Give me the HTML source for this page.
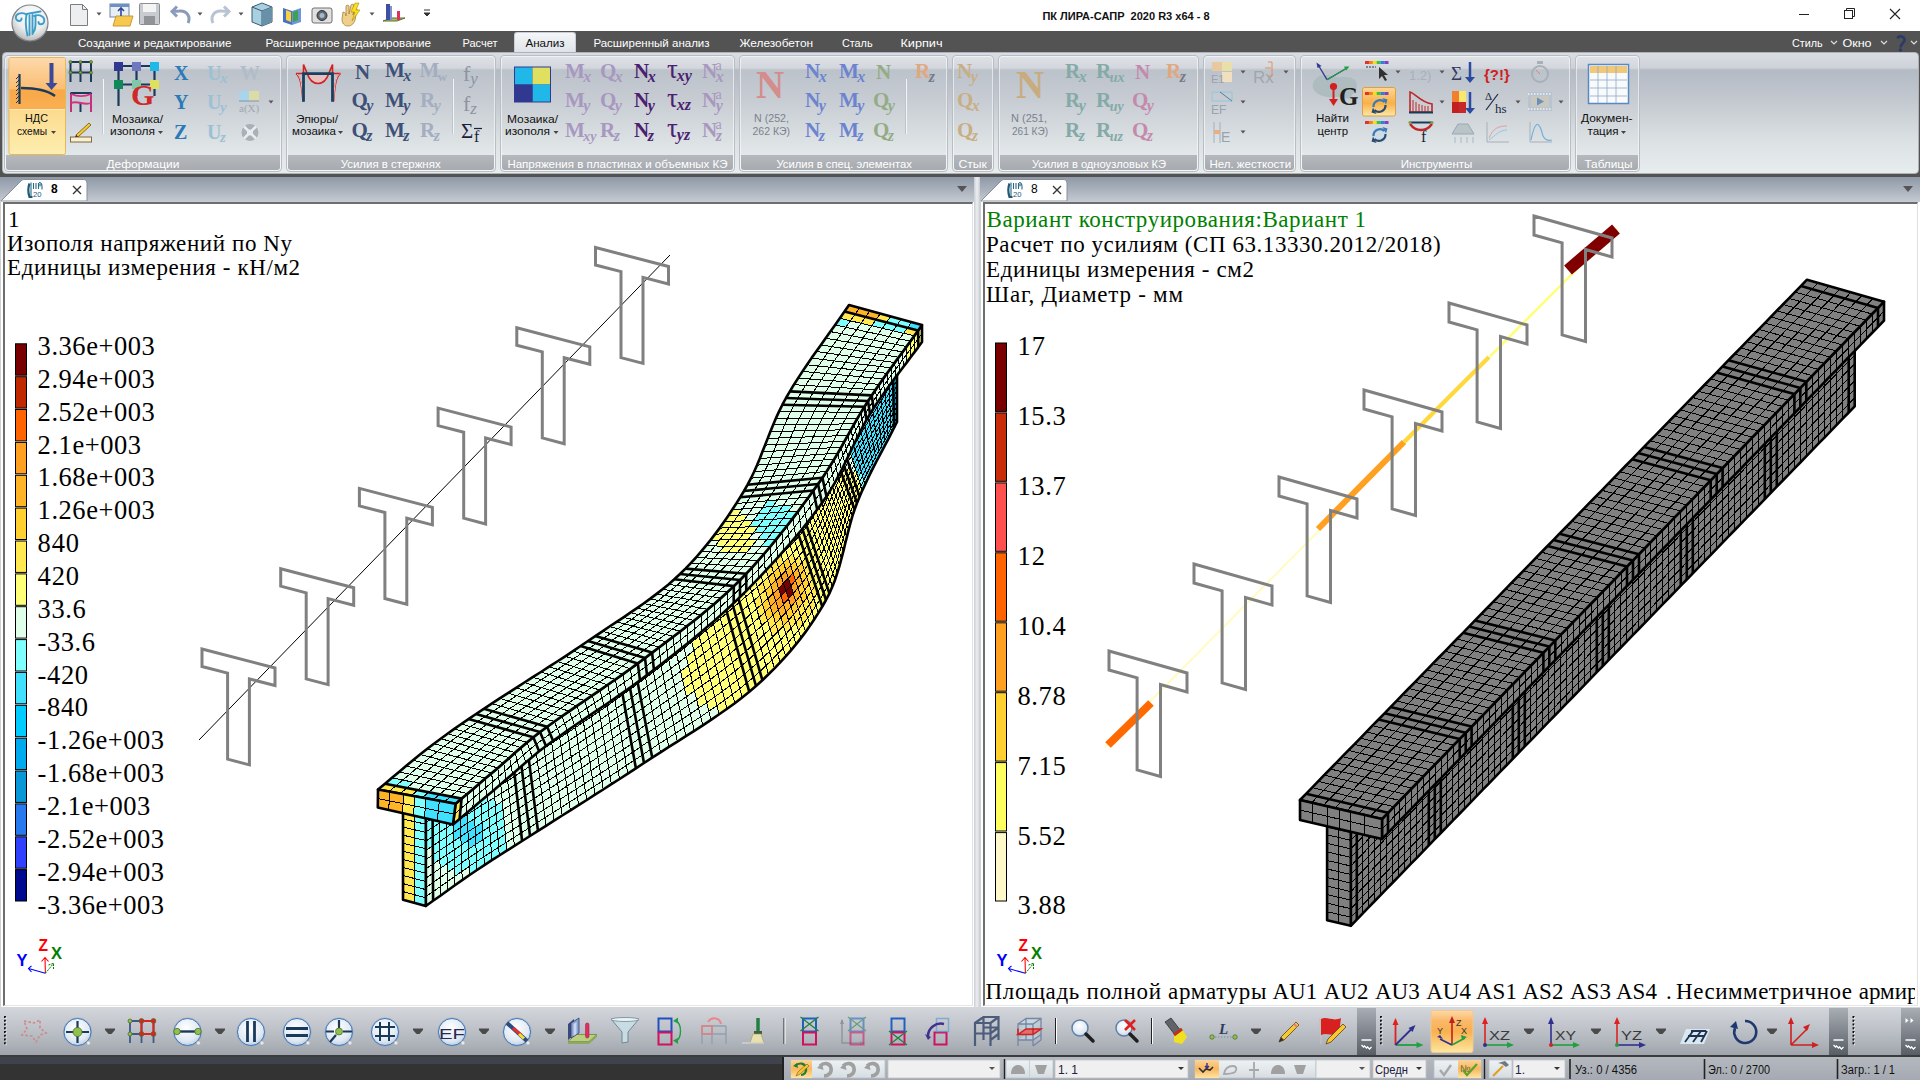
<!DOCTYPE html><html><head><meta charset="utf-8"><style>
*{margin:0;padding:0;box-sizing:border-box}
html,body{width:1920px;height:1080px;overflow:hidden;background:#fff;font-family:"Liberation Sans",sans-serif}
.a{position:absolute}
.tb{color:#fff;font-size:12px;white-space:nowrap;top:36px;letter-spacing:0.1px}
.grp{position:absolute;top:55px;height:117px;border:1px solid #b9bec5;border-radius:4px;background:linear-gradient(#dfe3e8 0,#d3d7dd 12px,#bcc2ca 14px,#c8cdd4 40%,#e2e7e9 85%,#e8eeee 100%);box-shadow:inset 0 0 0 1px rgba(255,255,255,.55)}
.glab{position:absolute;left:1px;right:1px;bottom:1px;height:15px;background:linear-gradient(#b5b9be,#a7abb0);color:#fff;font-size:11.5px;text-align:center;line-height:15px;white-space:nowrap;border-radius:0 0 3px 3px}
.rt{position:absolute;font-size:12px;color:#111;white-space:nowrap;text-align:center;line-height:13px}
.sv{font-family:"Liberation Serif",serif;font-weight:bold;position:absolute;white-space:nowrap;line-height:1}
.sv i{font-size:0.7em}
.vt{font-family:"Liberation Serif",serif;position:absolute;white-space:nowrap;color:#000}
.st{position:absolute;font-size:12.5px;color:#111;white-space:nowrap}
</style></head><body>
<div class="a" style="left:0;top:0;width:1920px;height:31px;background:#fff"></div>
<svg class="a" style="left:1790px;top:0" width="130" height="30"><path d="M9 14.5h10" stroke="#222" stroke-width="1"/><rect x="54.5" y="10.5" width="8" height="8" fill="none" stroke="#222"/><path d="M56.5 10.5v-2h8v8h-2" fill="none" stroke="#222"/><path d="M100 9l10 10M110 9l-10 10" stroke="#222" stroke-width="1.1"/></svg>
<div class="a" style="left:0;top:31px;width:1920px;height:22px;background:#535353"></div>
<div class="a" style="left:514px;top:32px;width:62px;height:22px;background:linear-gradient(#f4f6f8,#dde1e6);border:1px solid #c9ced4;border-bottom:none;border-radius:3px 3px 0 0"></div>
<div class="a" style="left:0;top:52px;width:1920px;height:125px;background:#535353"></div>
<div class="a" style="left:2px;top:52px;width:1917px;height:122px;border-radius:4px;background:linear-gradient(#dadee4 0,#cdd1d8 15px,#b3bac4 17px,#c4c9d0 40%,#dde2e5 75%,#e7eded 100%);border:1px solid #aeb3ba"></div>
<div class="grp" style="left:4px;width:278px"><div class="glab"></div></div>
<div class="grp" style="left:286px;width:210px"><div class="glab"></div></div>
<div class="grp" style="left:500px;width:235px"><div class="glab"></div></div>
<div class="grp" style="left:739px;width:209px"><div class="glab"></div></div>
<div class="grp" style="left:952px;width:42px"><div class="glab"></div></div>
<div class="grp" style="left:998px;width:201px"><div class="glab"></div></div>
<div class="grp" style="left:1203px;width:93px"><div class="glab"></div></div>
<div class="grp" style="left:1300px;width:271px"><div class="glab"></div></div>
<div class="grp" style="left:1575px;width:65px"><div class="glab"></div></div>
<svg class="a" style="left:0;top:0;pointer-events:none" width="1920" height="180">
<defs><radialGradient id="appb" cx="0.55" cy="0.3" r="0.75"><stop offset="0" stop-color="#ffffff"/><stop offset="0.55" stop-color="#eceef0"/><stop offset="0.85" stop-color="#c4c6c8"/><stop offset="1" stop-color="#a8acb0"/></radialGradient><linearGradient id="org1" x1="0" y1="0" x2="0" y2="1"><stop offset="0" stop-color="#fdd9aa"/><stop offset="0.6" stop-color="#fbbd74"/><stop offset="0.62" stop-color="#f8a848"/><stop offset="1" stop-color="#f9b052"/></linearGradient><linearGradient id="org3" x1="0" y1="0" x2="0" y2="1"><stop offset="0" stop-color="#fcd894"/><stop offset="0.45" stop-color="#f9b858"/><stop offset="0.55" stop-color="#f8b048"/><stop offset="1" stop-color="#fde8a8"/></linearGradient><linearGradient id="org2" x1="0" y1="0" x2="0" y2="1"><stop offset="0" stop-color="#fbc466"/><stop offset="1" stop-color="#fdeeb0"/></linearGradient></defs>
<circle cx="30" cy="23" r="18" fill="url(#appb)" stroke="#7e8286" stroke-width="1.2"/>
<g fill="none" stroke="#3d9dc6" stroke-width="1.9" stroke-linecap="round"><path d="M26.5 14.5C21 11.5 15 14 16 18.5 17 22 22 21.5 21.5 18.5"/><path d="M34 16C40 13.5 45.5 17 44 22 43 25 38.5 25 38.5 22"/><path d="M26.5 14L40.5 11.5"/><path d="M26.5 15C25 22 26 29 27.5 35.5"/><path d="M29.5 15.5V35M32.5 15V34M35.5 15.5V25c0 3-1 6-2.5 8"/></g>
<path d="M70.5 4.5h12l5 5v16h-17z" fill="#eceef0" stroke="#7a7e84"/><path d="M82.5 4.5v5h5" fill="none" stroke="#7a7e84"/>
<path d="M96.5 12.5h5l-2.5 3z" fill="#555"/>
<rect x="110" y="4" width="19" height="13" fill="#e8eef6" stroke="#6d86a8"/><rect x="110" y="4" width="19" height="3" fill="#7090c0"/><path d="M113 26l3-10h17l-3 10z" fill="#f7c850" stroke="#c89a30"/><path d="M121 16v-8m-3 3l3-3 3 3" stroke="#2a4a98" stroke-width="1.6" fill="none"/>
<rect x="139.5" y="3.5" width="20" height="21" rx="1" fill="#c8ccd0" stroke="#8a8e92"/><rect x="143" y="4" width="13" height="8" fill="#f4f4f4"/><rect x="144" y="16" width="11" height="8" fill="#909498"/>
<path d="M188 23c3-6-1-13-9-12l-6 .5m4-5-5 5 5 5" fill="none" stroke="#8a9cb8" stroke-width="3"/>
<path d="M197.5 12.5h5l-2.5 3z" fill="#555"/>
<path d="M213 23c-3-6 1-13 9-12l6 .5m-4-5 5 5-5 5" fill="none" stroke="#b8c4d4" stroke-width="3"/>
<path d="M238.5 12.5h5l-2.5 3z" fill="#555"/>
<path d="M252 7l10-4 10 4v15l-10 4-10-4z" fill="#a8d0e0" stroke="#3a5a70"/><path d="M252 7l10 4 10-4M262 11v15" fill="none" stroke="#3a5a70"/><path d="M262 11l10-4v15l-10 4z" fill="#6890a8"/>
<path d="M283 8l9 3v14l-9-3z" fill="#4a70c0"/><path d="M292 11l9-3v14l-9 3z" fill="#6a98d8"/><path d="M286 10l5 2v10l-5-2z" fill="#f8d040"/><path d="M293 12l5-2v10l-5 2z" fill="#40a050"/>
<rect x="312" y="8" width="20" height="15" rx="2" fill="#e0e0e0" stroke="#707070"/><circle cx="322" cy="15.5" r="5" fill="#606870" stroke="#303030"/><circle cx="322" cy="15.5" r="2.5" fill="#a0b8d0"/>
<path d="M343 12c2 0 3 2 3 4v-10c0-1 3-1 3 0v8l2-9c0-1 3-1 3 0l-1 10 2-6c1-1 3 0 2 1l-2 10c-1 3-3 6-7 6-4 0-6-3-6-7z" fill="#f0d088" stroke="#a08040" stroke-width="0.8"/><path d="M355 3l-4 9h4l-3 9 8-11h-4l3-7z" fill="#f8e020" stroke="#b09000" stroke-width="0.6"/>
<path d="M369.5 12.5h5l-2.5 3z" fill="#555"/>
<path d="M383 21l8-3h14l-8 3z" fill="#a0c060" stroke="#607030"/><rect x="386" y="4" width="4" height="16" fill="#4050a0"/><rect x="390" y="6" width="2" height="14" fill="#8090d0"/><rect x="397" y="11" width="3" height="9" fill="#e03060"/>
<path d="M424 10h6M424 13h6l-3 3z" fill="#333" stroke="#333" stroke-width="1"/>
<text x="1042.4" y="19.5" font-family="Liberation Sans" font-size="11.5" fill="#111" font-weight="bold" textLength="167.2" lengthAdjust="spacingAndGlyphs">ПК ЛИРА-САПР&#160; 2020 R3 x64 - 8</text>
<text x="77.9" y="46.9" font-family="Liberation Sans" font-size="11" fill="#fff" textLength="153.5" lengthAdjust="spacingAndGlyphs">Создание и редактирование</text>
<text x="265.4" y="46.9" font-family="Liberation Sans" font-size="11" fill="#fff" textLength="165.7" lengthAdjust="spacingAndGlyphs">Расширенное редактирование</text>
<text x="462.4" y="46.9" font-family="Liberation Sans" font-size="11" fill="#fff" textLength="35.2" lengthAdjust="spacingAndGlyphs">Расчет</text>
<text x="525.4" y="46.9" font-family="Liberation Sans" font-size="11" fill="#111" textLength="39.2" lengthAdjust="spacingAndGlyphs">Анализ</text>
<text x="593.4" y="46.9" font-family="Liberation Sans" font-size="11" fill="#fff" textLength="116.2" lengthAdjust="spacingAndGlyphs">Расширенный анализ</text>
<text x="739.4" y="46.9" font-family="Liberation Sans" font-size="11" fill="#fff" textLength="73.7" lengthAdjust="spacingAndGlyphs">Железобетон</text>
<text x="841.9" y="46.9" font-family="Liberation Sans" font-size="11" fill="#fff" textLength="30.7" lengthAdjust="spacingAndGlyphs">Сталь</text>
<text x="900.4" y="46.9" font-family="Liberation Sans" font-size="11" fill="#fff" textLength="42.2" lengthAdjust="spacingAndGlyphs">Кирпич</text>
<text x="1791.9" y="46.9" font-family="Liberation Sans" font-size="11" fill="#fff" textLength="30.7" lengthAdjust="spacingAndGlyphs">Стиль</text>
<text x="1842.4" y="46.9" font-family="Liberation Sans" font-size="11" fill="#fff" textLength="29.2" lengthAdjust="spacingAndGlyphs">Окно</text>
<text x="106.4" y="168" font-family="Liberation Sans" font-size="11" fill="#fff" textLength="73.0" lengthAdjust="spacingAndGlyphs">Деформации</text>
<text x="340.65" y="168" font-family="Liberation Sans" font-size="11" fill="#fff" textLength="100.0" lengthAdjust="spacingAndGlyphs">Усилия в стержнях</text>
<text x="507.4" y="168" font-family="Liberation Sans" font-size="11" fill="#fff" textLength="220.2" lengthAdjust="spacingAndGlyphs">Напряжения в пластинах и объемных КЭ</text>
<text x="776.4" y="168" font-family="Liberation Sans" font-size="11" fill="#fff" textLength="135.4" lengthAdjust="spacingAndGlyphs">Усилия в спец. элементах</text>
<text x="958.4" y="168" font-family="Liberation Sans" font-size="11" fill="#fff" textLength="28.4" lengthAdjust="spacingAndGlyphs">Стык</text>
<text x="1031.9" y="168" font-family="Liberation Sans" font-size="11" fill="#fff" textLength="134.2" lengthAdjust="spacingAndGlyphs">Усилия в одноузловых КЭ</text>
<text x="1209.4" y="168" font-family="Liberation Sans" font-size="11" fill="#fff" textLength="81.7" lengthAdjust="spacingAndGlyphs">Нел. жесткости</text>
<text x="1400.65" y="168" font-family="Liberation Sans" font-size="11" fill="#fff" textLength="71.7" lengthAdjust="spacingAndGlyphs">Инструменты</text>
<text x="1584.4" y="168" font-family="Liberation Sans" font-size="11" fill="#fff" textLength="48.2" lengthAdjust="spacingAndGlyphs">Таблицы</text>
<path d="M1831 41l3 3 3-3M1881 41l3 3 3-3M1911 41l3 3 3-3" fill="none" stroke="#ddd" stroke-width="1.2"/>
<path d="M1897.5 38.5c1-3 7-3 7 1.5 0 3-4 4-4 7.5" fill="none" stroke="#2a3a68" stroke-width="2.6"/><circle cx="1900.5" cy="50" r="1.7" fill="#2a3a68"/>
<rect x="9" y="57.5" width="56.5" height="97" rx="2" fill="url(#org2)" stroke="#e8b858"/>
<path d="M9.5 58h55.5v51.5h-55.5z" fill="url(#org1)"/>
<path d="M9.5 109.5h55.5" stroke="#fde8c0" stroke-width="1"/>
<path d="M19.5 74v30" stroke="#1e3a5a" stroke-width="2.2"/><path d="M19 76l-3 3M19 80l-3 3M19 84l-3 3M19 88l-3 3M19 92l-3 3M19 96l-3 3M19 100l-3 3" stroke="#1e3a5a" stroke-width="1"/>
<path d="M21 88c14 0 26 2 34 8" fill="none" stroke="#1e3a5a" stroke-width="2.4"/>
<path d="M51.5 63v20" stroke="#3a4a98" stroke-width="4"/><path d="M45.5 83h12l-6 7z" fill="#3a4a98"/>
<text x="25" y="122" font-family="Liberation Sans" font-size="11.5" fill="#111" textLength="23.0" lengthAdjust="spacingAndGlyphs" text-anchor="start">НДС</text>
<text x="17" y="135" font-family="Liberation Sans" font-size="11.5" fill="#111" textLength="30.0" lengthAdjust="spacingAndGlyphs" text-anchor="start">схемы</text>
<path d="M51.0 131.0h5l-2.5 3z" fill="#444"/>
<path d="M70.5 62v20M80.5 62v20M91 62v20M70.5 62h20.5M70.5 72.5h20.5" stroke="#1a3a5a" stroke-width="2"/>
<circle cx="70.5" cy="62" r="1.6" fill="#80a040" stroke="#305010" stroke-width="0.5"/><circle cx="70.5" cy="72.5" r="1.6" fill="#80a040" stroke="#305010" stroke-width="0.5"/><circle cx="80.5" cy="62" r="1.6" fill="#80a040" stroke="#305010" stroke-width="0.5"/><circle cx="80.5" cy="72.5" r="1.6" fill="#80a040" stroke="#305010" stroke-width="0.5"/><circle cx="91" cy="62" r="1.6" fill="#80a040" stroke="#305010" stroke-width="0.5"/><circle cx="91" cy="72.5" r="1.6" fill="#80a040" stroke="#305010" stroke-width="0.5"/>
<path d="M70.5 93h21M71 93v19M91 93v19M80.5 103v9" stroke="#1a3a5a" stroke-width="2"/><path d="M71 94c7 3 13 3 20 0M71 103c7-3 13 3 20 0M71 94v18M91 94v18" fill="none" stroke="#d83080" stroke-width="1.8"/>
<rect x="70.5" y="137" width="21" height="5" fill="#f8f0d0" stroke="#806840"/><path d="M76 135l13-12 2 2-13 12z" fill="#f8c830" stroke="#705010" stroke-width="0.8"/><path d="M76 135l-1 2 3-0.5z" fill="#402010"/>
<path d="M102.5 79v55" stroke="#c4c8cc" stroke-width="1"/><path d="M103.5 79v55" stroke="#f4f6f8" stroke-width="1"/>
<path d="M118.5 66v40M136.5 66v30M154.5 66v30M118.5 66h36M118.5 84.5h36" stroke="#1a3a5a" stroke-width="2.2"/>
<rect x="114" y="62" width="9" height="9" fill="#303890"/><rect x="132" y="62" width="9" height="9" fill="#7078c0"/><rect x="150" y="62" width="9" height="9" fill="#20b8e8"/><rect x="114" y="80" width="9" height="9" fill="#10885a"/><rect x="132" y="80" width="9" height="9" fill="#80c8a8"/><rect x="150" y="80" width="9" height="9" fill="#e0e060"/>
<text x="131" y="105" font-family="Liberation Serif" font-weight="bold" font-size="30" fill="#d02828">G</text>
<text x="112" y="123" font-family="Liberation Sans" font-size="11.5" fill="#111" textLength="51.0" lengthAdjust="spacingAndGlyphs" text-anchor="start">Мозаика/</text>
<text x="110" y="135" font-family="Liberation Sans" font-size="11.5" fill="#111" textLength="45.0" lengthAdjust="spacingAndGlyphs" text-anchor="start">изополя</text>
<path d="M158.0 131.0h5l-2.5 3z" fill="#444"/>
<text x="174" y="79.5" font-family="Liberation Serif" font-weight="bold" font-size="20" fill="#2a7ab8">X</text>
<text x="174" y="108.7" font-family="Liberation Serif" font-weight="bold" font-size="20" fill="#2a7ab8">Y</text>
<text x="174" y="138.7" font-family="Liberation Serif" font-weight="bold" font-size="20" fill="#2a7ab8">Z</text>
<text x="207" y="79.5" font-family="Liberation Serif" font-weight="bold" font-size="20" fill="#9cc0d4">U<tspan dx="-1.5" dy="3.5" font-size="15" font-style="italic">x</tspan></text>
<text x="207" y="108.7" font-family="Liberation Serif" font-weight="bold" font-size="20" fill="#9cc0d4">U<tspan dx="-1.5" dy="3.5" font-size="15" font-style="italic">y</tspan></text>
<text x="207" y="138.7" font-family="Liberation Serif" font-weight="bold" font-size="20" fill="#9cc0d4">U<tspan dx="-1.5" dy="3.5" font-size="15" font-style="italic">z</tspan></text>
<text x="240" y="79.5" font-family="Liberation Serif" font-weight="bold" font-size="20" fill="#b0bcc8">W</text>
<rect x="239" y="91" width="10" height="10" fill="#a8d4ec"/><rect x="249" y="91" width="10" height="10" fill="#dcdca8"/><path d="M239 101h20" stroke="#8098a8"/>
<text x="239" y="112" font-family="Liberation Serif" font-size="11" fill="#a0a8b0">a(X)</text>
<path d="M268.5 100.5h5l-2.5 3z" fill="#555"/>
<circle cx="250" cy="132.5" r="8.5" fill="#a8b0b8"/><path d="M244 126.5l12 12M256 126.5l-12 12" stroke="#e8ecef" stroke-width="2.5"/><circle cx="250" cy="132.5" r="3" fill="#e8ecef"/>
<path d="M307 73.5c3 9 7 10 11 10s8-1 11-10z" fill="#e8c0c0"/><path d="M296 73.5c5 3 6 15 7 28M340.5 73.5c-5 3-6 15-7 28M296 73.5h7M333 73.5h7.5M303.5 73V64.5L307 73c3 9 7 10.5 11 10.5s8-1.5 11-10.5l3.5-8.5V73" fill="none" stroke="#d02020" stroke-width="1.6"/><path d="M297 74c4 2 5 12 6 26M339.5 74c-4 2-5 12-6 26" fill="none" stroke="#f0c0c0" stroke-width="1"/>
<path d="M303.5 101.75V73.7h29v28.05" fill="none" stroke="#1a4060" stroke-width="2.8"/>
<text x="296" y="123" font-family="Liberation Sans" font-size="11.5" fill="#111" textLength="42.0" lengthAdjust="spacingAndGlyphs" text-anchor="start">Эпюры/</text>
<text x="292" y="135" font-family="Liberation Sans" font-size="11.5" fill="#111" textLength="44.0" lengthAdjust="spacingAndGlyphs" text-anchor="start">мозаика</text>
<path d="M338.0 131.0h5l-2.5 3z" fill="#444"/>
<text x="355" y="78.8" font-family="Liberation Serif" font-weight="bold" font-size="21" fill="#3d5078">N</text>
<text x="385" y="77" font-family="Liberation Serif" font-weight="bold" font-size="21" fill="#3d5078">M<tspan dx="-1.5" dy="3.5" font-size="16" font-style="italic">x</tspan></text>
<text x="419.5" y="77" font-family="Liberation Serif" font-weight="bold" font-size="21" fill="#a4aec0">M<tspan dx="-1.5" dy="3.5" font-size="13" font-style="normal">w</tspan></text>
<text x="351.5" y="107" font-family="Liberation Serif" font-weight="bold" font-size="21" fill="#3d5078">Q<tspan dx="-1.5" dy="3.5" font-size="16" font-style="italic">y</tspan></text>
<text x="385" y="107" font-family="Liberation Serif" font-weight="bold" font-size="21" fill="#3d5078">M<tspan dx="-1.5" dy="3.5" font-size="16" font-style="italic">y</tspan></text>
<text x="420" y="107" font-family="Liberation Serif" font-weight="bold" font-size="21" fill="#a4aec0">R<tspan dx="-1.5" dy="3.5" font-size="16" font-style="italic">y</tspan></text>
<text x="351.5" y="137" font-family="Liberation Serif" font-weight="bold" font-size="21" fill="#3d5078">Q<tspan dx="-1.5" dy="3.5" font-size="16" font-style="italic">z</tspan></text>
<text x="385" y="137" font-family="Liberation Serif" font-weight="bold" font-size="21" fill="#3d5078">M<tspan dx="-1.5" dy="3.5" font-size="16" font-style="italic">z</tspan></text>
<text x="420" y="137" font-family="Liberation Serif" font-weight="bold" font-size="21" fill="#a4aec0">R<tspan dx="-1.5" dy="3.5" font-size="16" font-style="italic">z</tspan></text>
<path d="M452.5 79v55" stroke="#c0c4c8"/><path d="M453.5 79v55" stroke="#f2f4f6"/>
<text x="463" y="80.5" font-family="Liberation Serif" font-weight="normal" font-size="22" fill="#8c94a2">f<tspan dx="0" dy="3.5" font-size="17" font-style="italic">y</tspan></text>
<text x="463" y="110.5" font-family="Liberation Serif" font-weight="normal" font-size="22" fill="#8c94a2">f<tspan dx="0" dy="3.5" font-size="17" font-style="italic">z</tspan></text>
<text x="461" y="138" font-family="Liberation Serif" font-size="21" fill="#1a1f38">Σ</text><text x="474" y="142" font-family="Liberation Serif" font-size="16" fill="#1a1f38">f</text><path d="M474 128.5h8" stroke="#1a1f38" stroke-width="1.2"/>
<rect x="514" y="66.5" width="37" height="36" fill="#303a90"/><rect x="515" y="67.5" width="17.5" height="17" fill="#20b8e8"/><rect x="532.5" y="67.5" width="17.5" height="17" fill="#e0e060"/><rect x="532.5" y="84.5" width="17.5" height="17" fill="#20b8e8"/><rect x="515" y="84.5" width="17.5" height="17" fill="#303890"/>
<text x="507" y="123" font-family="Liberation Sans" font-size="11.5" fill="#111" textLength="51.0" lengthAdjust="spacingAndGlyphs" text-anchor="start">Мозаика/</text>
<text x="505" y="135" font-family="Liberation Sans" font-size="11.5" fill="#111" textLength="45.0" lengthAdjust="spacingAndGlyphs" text-anchor="start">изополя</text>
<path d="M553.5 131.0h5l-2.5 3z" fill="#444"/>
<text x="565" y="78" font-family="Liberation Serif" font-weight="bold" font-size="21" fill="#a898c0">M<tspan dx="-1.5" dy="3.5" font-size="16" font-style="italic">x</tspan></text>
<text x="565" y="107" font-family="Liberation Serif" font-weight="bold" font-size="21" fill="#a898c0">M<tspan dx="-1.5" dy="3.5" font-size="16" font-style="italic">y</tspan></text>
<text x="565" y="137" font-family="Liberation Serif" font-weight="bold" font-size="21" fill="#a898c0">M<tspan dx="-1.5" dy="3.5" font-size="14" font-style="italic">xy</tspan></text>
<text x="600" y="78" font-family="Liberation Serif" font-weight="bold" font-size="21" fill="#a898c0">Q<tspan dx="-1.5" dy="3.5" font-size="16" font-style="italic">x</tspan></text>
<text x="600" y="107" font-family="Liberation Serif" font-weight="bold" font-size="21" fill="#a898c0">Q<tspan dx="-1.5" dy="3.5" font-size="16" font-style="italic">y</tspan></text>
<text x="600" y="137" font-family="Liberation Serif" font-weight="bold" font-size="21" fill="#a898c0">R<tspan dx="-1.5" dy="3.5" font-size="16" font-style="italic">z</tspan></text>
<text x="634" y="78" font-family="Liberation Serif" font-weight="bold" font-size="21" fill="#4a2070">N<tspan dx="-1.5" dy="3.5" font-size="16" font-style="italic">x</tspan></text>
<text x="634" y="107" font-family="Liberation Serif" font-weight="bold" font-size="21" fill="#4a2070">N<tspan dx="-1.5" dy="3.5" font-size="16" font-style="italic">y</tspan></text>
<text x="634" y="137" font-family="Liberation Serif" font-weight="bold" font-size="21" fill="#4a2070">N<tspan dx="-1.5" dy="3.5" font-size="16" font-style="italic">z</tspan></text>
<text x="667" y="78" font-family="Liberation Serif" font-size="27" fill="#4a2070">τ<tspan dx="-1" dy="3" font-size="16" font-weight="bold" font-style="italic">xy</tspan></text>
<text x="667" y="107" font-family="Liberation Serif" font-size="27" fill="#4a2070">τ<tspan dx="-1" dy="3" font-size="16" font-weight="bold" font-style="italic">xz</tspan></text>
<text x="667" y="137" font-family="Liberation Serif" font-size="27" fill="#4a2070">τ<tspan dx="-1" dy="3" font-size="16" font-weight="bold" font-style="italic">yz</tspan></text>
<text x="702" y="78" font-family="Liberation Serif" font-weight="bold" font-size="21" fill="#a898c0">N<tspan dx="-1.5" dy="3.5" font-size="16" font-style="italic">x</tspan></text>
<text x="715.5" y="70" font-family="Liberation Serif" font-size="14" fill="#a898c0">a</text>
<text x="702" y="107" font-family="Liberation Serif" font-weight="bold" font-size="21" fill="#a898c0">N<tspan dx="-1.5" dy="3.5" font-size="16" font-style="italic">y</tspan></text>
<text x="715.5" y="99" font-family="Liberation Serif" font-size="14" fill="#a898c0">a</text>
<text x="702" y="137" font-family="Liberation Serif" font-weight="bold" font-size="21" fill="#a898c0">N<tspan dx="-1.5" dy="3.5" font-size="16" font-style="italic">z</tspan></text>
<text x="715.5" y="129" font-family="Liberation Serif" font-size="14" fill="#a898c0">a</text>
<text x="756" y="97.5" font-family="Liberation Serif" font-weight="bold" font-size="39" fill="#d48c8c">N</text>
<text x="754" y="122" font-family="Liberation Sans" font-size="11.5" fill="#7a828c" textLength="35.0" lengthAdjust="spacingAndGlyphs" text-anchor="start">N (252,</text>
<text x="752.5" y="135" font-family="Liberation Sans" font-size="11.5" fill="#7a828c" textLength="37.5" lengthAdjust="spacingAndGlyphs" text-anchor="start">262 КЭ)</text>
<text x="805" y="78" font-family="Liberation Serif" font-weight="bold" font-size="21" fill="#6c84d0">N<tspan dx="-1.5" dy="3.5" font-size="16" font-style="italic">x</tspan></text>
<text x="805" y="107" font-family="Liberation Serif" font-weight="bold" font-size="21" fill="#6c84d0">N<tspan dx="-1.5" dy="3.5" font-size="16" font-style="italic">y</tspan></text>
<text x="805" y="137" font-family="Liberation Serif" font-weight="bold" font-size="21" fill="#6c84d0">N<tspan dx="-1.5" dy="3.5" font-size="16" font-style="italic">z</tspan></text>
<text x="839" y="78" font-family="Liberation Serif" font-weight="bold" font-size="21" fill="#6c84d0">M<tspan dx="-1.5" dy="3.5" font-size="16" font-style="italic">x</tspan></text>
<text x="839" y="107" font-family="Liberation Serif" font-weight="bold" font-size="21" fill="#6c84d0">M<tspan dx="-1.5" dy="3.5" font-size="16" font-style="italic">y</tspan></text>
<text x="839" y="137" font-family="Liberation Serif" font-weight="bold" font-size="21" fill="#6c84d0">M<tspan dx="-1.5" dy="3.5" font-size="16" font-style="italic">z</tspan></text>
<text x="876" y="78.5" font-family="Liberation Serif" font-weight="bold" font-size="21" fill="#94ac84">N</text>
<text x="873" y="107" font-family="Liberation Serif" font-weight="bold" font-size="21" fill="#94ac84">Q<tspan dx="-1.5" dy="3.5" font-size="16" font-style="italic">y</tspan></text>
<text x="873" y="137" font-family="Liberation Serif" font-weight="bold" font-size="21" fill="#94ac84">Q<tspan dx="-1.5" dy="3.5" font-size="16" font-style="italic">z</tspan></text>
<path d="M905.5 79v55" stroke="#c0c4c8"/><path d="M906.5 79v55" stroke="#f2f4f6"/>
<text x="915" y="78" font-family="Liberation Serif" font-weight="bold" font-size="21" fill="#e0a880">R<tspan dx="-1.5" dy="3.5" font-size="16" font-style="italic" fill="#747c8c">z</tspan></text>
<text x="957" y="78" font-family="Liberation Serif" font-weight="bold" font-size="21" fill="#c8ae84">N<tspan dx="-1.5" dy="3.5" font-size="16" font-style="italic">y</tspan></text>
<text x="957" y="107" font-family="Liberation Serif" font-weight="bold" font-size="21" fill="#c8ae84">Q<tspan dx="-1.5" dy="3.5" font-size="16" font-style="italic">x</tspan></text>
<text x="957" y="137" font-family="Liberation Serif" font-weight="bold" font-size="21" fill="#c8ae84">Q<tspan dx="-1.5" dy="3.5" font-size="16" font-style="italic">z</tspan></text>
<text x="1016" y="97.5" font-family="Liberation Serif" font-weight="bold" font-size="39" fill="#c8ac80">N</text>
<text x="1011" y="122" font-family="Liberation Sans" font-size="11.5" fill="#7a828c" textLength="36.0" lengthAdjust="spacingAndGlyphs" text-anchor="start">N (251,</text>
<text x="1012" y="135" font-family="Liberation Sans" font-size="11.5" fill="#7a828c" textLength="36.0" lengthAdjust="spacingAndGlyphs" text-anchor="start">261 КЭ)</text>
<text x="1065" y="78" font-family="Liberation Serif" font-weight="bold" font-size="21" fill="#84aaa8">R<tspan dx="-1.5" dy="3.5" font-size="16" font-style="italic">x</tspan></text>
<text x="1065" y="107" font-family="Liberation Serif" font-weight="bold" font-size="21" fill="#84aaa8">R<tspan dx="-1.5" dy="3.5" font-size="16" font-style="italic">y</tspan></text>
<text x="1065" y="137" font-family="Liberation Serif" font-weight="bold" font-size="21" fill="#84aaa8">R<tspan dx="-1.5" dy="3.5" font-size="16" font-style="italic">z</tspan></text>
<text x="1096" y="78" font-family="Liberation Serif" font-weight="bold" font-size="21" fill="#84aaa8">R<tspan dx="-1.5" dy="3.5" font-size="14" font-style="italic">ux</tspan></text>
<text x="1096" y="107" font-family="Liberation Serif" font-weight="bold" font-size="21" fill="#84aaa8">R<tspan dx="-1.5" dy="3.5" font-size="14" font-style="italic">uy</tspan></text>
<text x="1096" y="137" font-family="Liberation Serif" font-weight="bold" font-size="21" fill="#84aaa8">R<tspan dx="-1.5" dy="3.5" font-size="14" font-style="italic">uz</tspan></text>
<text x="1135" y="78.5" font-family="Liberation Serif" font-weight="bold" font-size="21" fill="#c48aac">N</text>
<text x="1132" y="107" font-family="Liberation Serif" font-weight="bold" font-size="21" fill="#c48aac">Q<tspan dx="-1.5" dy="3.5" font-size="16" font-style="italic">y</tspan></text>
<text x="1132" y="137" font-family="Liberation Serif" font-weight="bold" font-size="21" fill="#c48aac">Q<tspan dx="-1.5" dy="3.5" font-size="16" font-style="italic">z</tspan></text>
<text x="1166" y="78" font-family="Liberation Serif" font-weight="bold" font-size="21" fill="#e0a880">R<tspan dx="-1.5" dy="3.5" font-size="16" font-style="italic" fill="#747c8c">z</tspan></text>
<rect x="1212" y="62" width="10" height="9" fill="#e8c8a0"/><rect x="1222" y="62" width="10" height="9" fill="#e8e0a8"/><path d="M1222 72v10h10v-10" fill="#f0e0c0"/>
<text x="1211" y="83" font-family="Liberation Sans" font-size="11" fill="#9aa2ac">E1</text>
<path d="M1240.5 70.5h5l-2.5 3z" fill="#555"/>
<text x="1253" y="83" font-family="Liberation Sans" font-size="17" fill="#a0a6ae">Rx</text><path d="M1268 62h4v14h-4M1265 68h6" fill="none" stroke="#e09060" stroke-width="1"/>
<path d="M1283.5 70.5h5l-2.5 3z" fill="#555"/>
<path d="M1212 92h20v9h-20z" fill="none" stroke="#90c8d8" stroke-width="1"/><path d="M1220 92l12 9" stroke="#5080a8"/><text x="1211" y="114" font-family="Liberation Sans" font-size="12" fill="#9aa2ac">EF</text>
<path d="M1240.5 100.5h5l-2.5 3z" fill="#555"/>
<path d="M1214 122v21M1220 122v21" stroke="#a0b0c0"/><rect x="1214" y="130" width="6" height="4" fill="#e8b080"/><text x="1221" y="142" font-family="Liberation Sans" font-size="14" fill="#9aa2ac">E</text>
<path d="M1240.5 130.5h5l-2.5 3z" fill="#555"/>
<path d="M1313 88c-2-7 5-13 12-13 6 0 9 3 16 2 9-1 16 2 16 8 0 7-6 9-6 13-6 2-10-2-14-1-9 2-22-2-24-9z" fill="#aebcc0"/>
<path d="M1327 79.7L1318.5 65.5M1327 79.7L1347 68" fill="none" stroke="#303890" stroke-width="1.3"/><path d="M1327 79.7L1347 68" stroke="#20a040" stroke-width="1.3"/><path d="M1316.5 62.5l5 3.5-4 2z" fill="#303890"/><path d="M1349.5 66.5l-5.5 0 2 4z" fill="#20a040"/>
<circle cx="1333.5" cy="86.5" r="3.6" fill="#d02020"/><path d="M1333.5 87v14" stroke="#d02020" stroke-width="2"/><path d="M1329 99h9l-4.5 7z" fill="#d02020"/>
<text x="1339" y="104.5" font-family="Liberation Serif" font-weight="bold" font-size="25" fill="#202020">G</text>
<text x="1316" y="122" font-family="Liberation Sans" font-size="11.5" fill="#111" textLength="33.0" lengthAdjust="spacingAndGlyphs" text-anchor="start">Найти</text>
<text x="1317.5" y="135" font-family="Liberation Sans" font-size="11.5" fill="#111" textLength="30.5" lengthAdjust="spacingAndGlyphs" text-anchor="start">центр</text>
<rect x="1365.0" y="61" width="4" height="3" fill="#e03030"/><rect x="1368.9" y="61" width="4" height="3" fill="#f08020"/><rect x="1372.8" y="61" width="4" height="3" fill="#f0e020"/><rect x="1376.7" y="61" width="4" height="3" fill="#40c040"/><rect x="1380.6" y="61" width="4" height="3" fill="#3080e0"/><rect x="1384.5" y="61" width="4" height="3" fill="#8040c0"/>
<path d="M1379 67l0 12 3-3 3 5 2-1-3-5 4 0z" fill="#303030"/><path d="M1366 67h10" stroke="#303030" stroke-dasharray="2 1"/>
<path d="M1395.5 70.5h5l-2.5 3z" fill="#555"/>
<rect x="1362.5" y="87.5" width="33" height="28.5" rx="2" fill="url(#org3)" stroke="#d8a048"/>
<rect x="1365.0" y="92" width="4" height="3" fill="#e03030"/><rect x="1368.9" y="92" width="4" height="3" fill="#f08020"/><rect x="1372.8" y="92" width="4" height="3" fill="#f0e020"/><rect x="1376.7" y="92" width="4" height="3" fill="#40c040"/><rect x="1380.6" y="92" width="4" height="3" fill="#3080e0"/><rect x="1384.5" y="92" width="4" height="3" fill="#8040c0"/>
<path d="M1373.5 107a6.5 6.5 0 0 1 11-5" fill="none" stroke="#3a7ab8" stroke-width="2.2"/><path d="M1382.5 98l5 1.5-1.5 5z" fill="#3a7ab8"/>
<path d="M1385.5 105a6.5 6.5 0 0 1-11 5" fill="none" stroke="#2a4a70" stroke-width="2.2"/><path d="M1376.5 114l-5-1.5 1.5-5z" fill="#2a4a70"/>
<rect x="1365.0" y="121" width="4" height="3" fill="#e03030"/><rect x="1368.9" y="121" width="4" height="3" fill="#f08020"/><rect x="1372.8" y="121" width="4" height="3" fill="#f0e020"/><rect x="1376.7" y="121" width="4" height="3" fill="#40c040"/><rect x="1380.6" y="121" width="4" height="3" fill="#3080e0"/><rect x="1384.5" y="121" width="4" height="3" fill="#8040c0"/>
<circle cx="1379.5" cy="135" r="7.5" fill="#c8dce8" opacity="0.7"/>
<path d="M1373.5 136a6.5 6.5 0 0 1 11-5" fill="none" stroke="#3a7ab8" stroke-width="2.2"/><path d="M1382.5 127l5 1.5-1.5 5z" fill="#3a7ab8"/>
<path d="M1385.5 134a6.5 6.5 0 0 1-11 5" fill="none" stroke="#2a4a70" stroke-width="2.2"/><path d="M1376.5 143l-5-1.5 1.5-5z" fill="#2a4a70"/>
<text x="1409" y="80" font-family="Liberation Sans" font-size="13" fill="#a8b0bc">1.2)</text>
<path d="M1439.5 70.5h5l-2.5 3z" fill="#555"/>
<path d="M1410 92c6 2 10 10 22 12v8h-22z" fill="none" stroke="#c02828" stroke-width="1.6"/><path d="M1413 100v12M1416 102v10M1419 104v8M1422 105v7M1425 106v6M1428 106v6" stroke="#c02828"/><path d="M1409 112.5h24" stroke="#1a3a5a" stroke-width="2"/>
<path d="M1439.5 100.5h5l-2.5 3z" fill="#555"/>
<path d="M1410 122.5h22" stroke="#1a3a5a" stroke-width="2"/><path d="M1410 124c6 8 16 8 22 0" fill="none" stroke="#c02828" stroke-width="2.5"/><circle cx="1410" cy="122.5" r="1.6" fill="#80a040"/><circle cx="1432" cy="122.5" r="1.6" fill="#80a040"/><text x="1421" y="142" font-family="Liberation Serif" font-size="16" fill="#1a1f38">f</text>
<text x="1451" y="80" font-family="Liberation Serif" font-size="19" fill="#303a60">Σ</text><path d="M1470 62v17" stroke="#2a4aa0" stroke-width="2.5"/><path d="M1465 77h10l-5 6z" fill="#2a4aa0"/>
<text x="1484" y="80" font-family="Liberation Sans" font-weight="bold" font-size="15" fill="#d02020">{?!}</text>
<circle cx="1540" cy="74" r="8" fill="none" stroke="#a8b0b8" stroke-width="2"/><rect x="1537" y="61" width="6" height="3" fill="#a8b0b8"/><path d="M1536 70l4 4" stroke="#e08080" stroke-width="1"/>
<rect x="1452" y="91" width="7" height="11" fill="#f08030"/><rect x="1459" y="91" width="7" height="11" fill="#f8e870"/><rect x="1452" y="102" width="7" height="11" fill="#c02020"/><rect x="1459" y="102" width="7" height="11" fill="#c82828"/><path d="M1470 92v18" stroke="#2a4aa0" stroke-width="2.5"/><path d="M1465 108h10l-5 6z" fill="#2a4aa0"/>
<text x="1485" y="100" font-family="Liberation Serif" font-size="11" fill="#202840">Δ</text><path d="M1486 110l12-16" stroke="#202840" stroke-width="1.2"/><text x="1495" y="113" font-family="Liberation Serif" font-size="13" fill="#202840">hs</text>
<path d="M1515.5 100.5h5l-2.5 3z" fill="#555"/>
<rect x="1528" y="92" width="24" height="19" fill="#b8c4d0"/><path d="M1528 94h24M1528 109h24" stroke="#f0f4f8" stroke-dasharray="1.5 1.5" stroke-width="1.6"/><rect x="1531" y="96" width="18" height="11" fill="#c8c8c0"/><path d="M1537 97.5v8l7-4z" fill="#6890b8"/>
<path d="M1558.5 100.5h5l-2.5 3z" fill="#555"/>
<path d="M1452 134l6-10h10l6 10z" fill="#b8c4c8" stroke="#9aa8b0"/><path d="M1455 137v6M1461 137v6M1467 137v6M1473 137v6" stroke="#a8b8c8"/>
<path d="M1487 122v20h22" fill="none" stroke="#a8b0b8"/><path d="M1489 138c4-10 10-12 18-12" fill="none" stroke="#e0a0a0"/><path d="M1489 140c6-4 10-10 18-10" fill="none" stroke="#90c8e0"/>
<path d="M1530 122v20h22" fill="none" stroke="#a8b0b8"/><path d="M1531 140c4-20 8-20 12-4 2 4 5 5 9 4" fill="none" stroke="#70b0d8" stroke-width="1.2"/>
<rect x="1588.5" y="64.5" width="40" height="39" fill="#f8fafc" stroke="#5a88c0" stroke-width="1.5"/><rect x="1590" y="66" width="37" height="7" fill="#f0c878"/><path d="M1598 66v37M1607 66v37M1616 66v37M1590 80h37M1590 88h37M1590 96h37" stroke="#90a8c8" stroke-width="0.8"/>
<text x="1581" y="122" font-family="Liberation Sans" font-size="11.5" fill="#111" textLength="51.5" lengthAdjust="spacingAndGlyphs" text-anchor="start">Докумен-</text>
<text x="1587.5" y="135" font-family="Liberation Sans" font-size="11.5" fill="#111" textLength="31.0" lengthAdjust="spacingAndGlyphs" text-anchor="start">тация</text>
<path d="M1621.0 131.0h5l-2.5 3z" fill="#444"/>
</svg>
<div class="a" style="left:0px;top:177px;width:974px;height:25px;background:linear-gradient(#8f99a7,#a9b1bc 50%,#c6cbd2)"></div>
<svg class="a" style="left:0px;top:177px" width="100" height="26"><path d="M1 24 L22 3 Q23 2.5 25 2.5 L84 2.5 Q87 2.5 87 6 L87 24 Z" fill="#fff" stroke="#8a9099" stroke-width="1"/></svg>
<svg class="a" style="left:26px;top:180px" width="18" height="18"><path d="M3.5 3.5c-1.5 4-1.5 9 0 13.5h3" fill="none" stroke="#1e5a78" stroke-width="2.2"/><path d="M5 2.5v14M7.5 3v6M10 3v6M12.5 3v6" stroke="#2a6a88" stroke-width="1.1"/><path d="M13 2.5c2 0 3 2 3 4v3" fill="none" stroke="#2a6a88" stroke-width="1.1"/><circle cx="14" cy="5" r="1" fill="#fff" stroke="#2a6a88" stroke-width="0.8"/><text x="7" y="16.5" font-family="Liberation Sans" font-size="7.5" fill="#1e5a78" textLength="8.5" lengthAdjust="spacingAndGlyphs">20</text></svg>
<div class="a" style="left:51px;top:182px;font-size:12px;font-weight:bold;color:#000">8</div>
<svg class="a" style="left:71px;top:184px" width="12" height="12"><path d="M2 2l8 8M10 2l-8 8" stroke="#333" stroke-width="1.3"/></svg>
<svg class="a" style="left:956px;top:185px" width="12" height="8"><path d="M1 1h10l-5 6z" fill="#555"/></svg>
<div class="a" style="left:980px;top:177px;width:940px;height:25px;background:linear-gradient(#8f99a7,#a9b1bc 50%,#c6cbd2)"></div>
<svg class="a" style="left:980px;top:177px" width="100" height="26"><path d="M1 24 L22 3 Q23 2.5 25 2.5 L84 2.5 Q87 2.5 87 6 L87 24 Z" fill="#fff" stroke="#8a9099" stroke-width="1"/></svg>
<svg class="a" style="left:1006px;top:180px" width="18" height="18"><path d="M3.5 3.5c-1.5 4-1.5 9 0 13.5h3" fill="none" stroke="#1e5a78" stroke-width="2.2"/><path d="M5 2.5v14M7.5 3v6M10 3v6M12.5 3v6" stroke="#2a6a88" stroke-width="1.1"/><path d="M13 2.5c2 0 3 2 3 4v3" fill="none" stroke="#2a6a88" stroke-width="1.1"/><circle cx="14" cy="5" r="1" fill="#fff" stroke="#2a6a88" stroke-width="0.8"/><text x="7" y="16.5" font-family="Liberation Sans" font-size="7.5" fill="#1e5a78" textLength="8.5" lengthAdjust="spacingAndGlyphs">20</text></svg>
<div class="a" style="left:1031px;top:182px;font-size:12px;font-weight:normal;color:#000">8</div>
<svg class="a" style="left:1051px;top:184px" width="12" height="12"><path d="M2 2l8 8M10 2l-8 8" stroke="#333" stroke-width="1.3"/></svg>
<svg class="a" style="left:1902px;top:185px" width="12" height="8"><path d="M1 1h10l-5 6z" fill="#555"/></svg>
<div class="a" style="left:974px;top:177px;width:6px;height:831px;background:linear-gradient(90deg,#c9cdd3,#eceef0 50%,#c9cdd3)"></div>
<div class="a" style="left:0;top:201px;width:974px;height:806px;background:#fff;border-top:1px solid #c6cbd2;border-left:1px solid #d0d0d0"></div>
<div class="a" style="left:3px;top:202px;width:970px;height:804px;background:#fff;border-top:2px solid #6e6e6e;border-left:2px solid #6e6e6e;border-right:1px solid #e0e0e0;border-bottom:1px solid #e6e6e6"></div>
<div class="a" style="left:980px;top:201px;width:940px;height:806px;background:#fff;border-top:1px solid #c6cbd2;border-left:1px solid #d0d0d0"></div>
<div class="a" style="left:983px;top:202px;width:935px;height:804px;background:#fff;border-top:2px solid #6e6e6e;border-left:2px solid #6e6e6e;border-right:1px solid #e0e0e0;border-bottom:1px solid #e6e6e6"></div>
<svg class="a" style="left:0;top:0;pointer-events:none" width="1920" height="1080" viewBox="0 0 1920 1080">
<defs><clipPath id="cl"><rect x="5" y="204" width="968" height="802"/></clipPath><clipPath id="cr"><rect x="985" y="204" width="930" height="800"/></clipPath></defs>
<g clip-path="url(#cl)">
<g font-family="Liberation Serif" font-size="23" fill="#000">
<text x="8" y="227">1</text><text x="7" y="250.8" textLength="285.1" lengthAdjust="spacing">Изополя напряжений по Ny</text><text x="7" y="274.8" textLength="293.1" lengthAdjust="spacing">Единицы измерения - кН/м2</text>
</g>
<rect x="15.5" y="343.8" width="11" height="31.4" fill="#780000" stroke="#000" stroke-width="1"/>
<rect x="15.5" y="376.7" width="11" height="31.4" fill="#c02800" stroke="#000" stroke-width="1"/>
<rect x="15.5" y="409.5" width="11" height="31.4" fill="#ff6400" stroke="#000" stroke-width="1"/>
<rect x="15.5" y="442.4" width="11" height="31.4" fill="#ffa020" stroke="#000" stroke-width="1"/>
<rect x="15.5" y="475.3" width="11" height="31.4" fill="#ffb428" stroke="#000" stroke-width="1"/>
<rect x="15.5" y="508.1" width="11" height="31.4" fill="#ffd030" stroke="#000" stroke-width="1"/>
<rect x="15.5" y="541" width="11" height="31.4" fill="#ffe850" stroke="#000" stroke-width="1"/>
<rect x="15.5" y="573.9" width="11" height="31.4" fill="#ffff78" stroke="#000" stroke-width="1"/>
<rect x="15.5" y="606.7" width="11" height="31.4" fill="#e0ffe8" stroke="#000" stroke-width="1"/>
<rect x="15.5" y="639.6" width="11" height="31.4" fill="#80ffff" stroke="#000" stroke-width="1"/>
<rect x="15.5" y="672.4" width="11" height="31.4" fill="#40e0ff" stroke="#000" stroke-width="1"/>
<rect x="15.5" y="705.3" width="11" height="31.4" fill="#00ccff" stroke="#000" stroke-width="1"/>
<rect x="15.5" y="738.2" width="11" height="31.4" fill="#00aaee" stroke="#000" stroke-width="1"/>
<rect x="15.5" y="771" width="11" height="31.4" fill="#0898d8" stroke="#000" stroke-width="1"/>
<rect x="15.5" y="803.9" width="11" height="31.4" fill="#2878f0" stroke="#000" stroke-width="1"/>
<rect x="15.5" y="836.8" width="11" height="31.4" fill="#3040ff" stroke="#000" stroke-width="1"/>
<rect x="15.5" y="869.6" width="11" height="31.4" fill="#000a90" stroke="#000" stroke-width="1"/>
<g font-family="Liberation Serif" font-size="26.5" fill="#000">
<text x="37.6" y="354.9" textLength="117.2" lengthAdjust="spacing">3.36e+003</text>
<text x="37.6" y="387.8" textLength="117.2" lengthAdjust="spacing">2.94e+003</text>
<text x="37.6" y="420.6" textLength="117.2" lengthAdjust="spacing">2.52e+003</text>
<text x="37.6" y="453.5" textLength="103.5" lengthAdjust="spacing">2.1e+003</text>
<text x="37.6" y="486.4" textLength="117.2" lengthAdjust="spacing">1.68e+003</text>
<text x="37.6" y="519.2" textLength="117.2" lengthAdjust="spacing">1.26e+003</text>
<text x="37.6" y="552.1" textLength="41.3" lengthAdjust="spacing">840</text>
<text x="37.6" y="585" textLength="41.3" lengthAdjust="spacing">420</text>
<text x="37.6" y="617.8" textLength="48.2" lengthAdjust="spacing">33.6</text>
<text x="37.6" y="650.7" textLength="57.4" lengthAdjust="spacing">-33.6</text>
<text x="37.6" y="683.5" textLength="50.5" lengthAdjust="spacing">-420</text>
<text x="37.6" y="716.4" textLength="50.5" lengthAdjust="spacing">-840</text>
<text x="37.6" y="749.3" textLength="126.4" lengthAdjust="spacing">-1.26e+003</text>
<text x="37.6" y="782.1" textLength="126.4" lengthAdjust="spacing">-1.68e+003</text>
<text x="37.6" y="815" textLength="112.6" lengthAdjust="spacing">-2.1e+003</text>
<text x="37.6" y="847.9" textLength="126.4" lengthAdjust="spacing">-2.52e+003</text>
<text x="37.6" y="880.7" textLength="126.4" lengthAdjust="spacing">-2.94e+003</text>
<text x="37.6" y="913.6" textLength="126.4" lengthAdjust="spacing">-3.36e+003</text>
</g>
<path d="M199 740 L670 255" stroke="#000" stroke-width="1" fill="none"/>
<path d="M202 649 L275 668 L275 685.5 L249.4 678.9 L249.4 764.9 L227.6 759.1 L227.6 673.1 L202 666.5ZM280.7 568.7 L353.7 587.7 L353.7 605.2 L328.1 598.6 L328.1 684.6 L306.2 678.9 L306.2 592.9 L280.7 586.2ZM359.4 488.4 L432.4 507.4 L432.4 524.9 L406.8 518.2 L406.8 604.2 L384.9 598.5 L384.9 512.5 L359.4 505.9ZM438.1 408.1 L511.1 427.1 L511.1 444.6 L485.6 438 L485.6 524 L463.7 518.2 L463.7 432.2 L438.1 425.6ZM516.8 327.8 L589.8 346.8 L589.8 364.3 L564.2 357.7 L564.2 443.7 L542.3 437.9 L542.3 351.9 L516.8 345.3ZM595.5 247.5 L668.5 266.5 L668.5 284 L643 277.4 L643 363.4 L621 357.6 L621 271.6 L595.5 265Z" fill="none" stroke="#808080" stroke-width="3" stroke-linejoin="miter"/><path d="M425.8,804 L432.5,800 L439.2,796 L445.9,791.9 L452.6,787.9 L459.3,783.9 L466,779.8 L472.7,775.8 L479.3,771.8 L485.7,768 L492.1,764.2 L498.6,760.3 L505.2,756.2 L512,751.9 L519.2,747.2 L526.6,742.3 L534.2,737.3 L541.8,732.2 L549.5,727.1 L557.3,721.9 L565.1,716.7 L573,711.4 L580.9,706 L588.7,700.6 L596.5,695.2 L604.3,689.7 L612,684.2 L619.7,678.6 L627.2,673 L634.7,667.3 L642.3,661.5 L649.9,655.5 L657.4,649.4 L665,643.3 L672.6,637.1 L680,631 L687.4,624.8 L694.7,618.7 L701.8,612.7 L708.7,606.8 L715.5,601 L722.1,595.4 L728.4,590 L734.5,584.8 L740.5,579.7 L746.4,574.9 L752.1,570.1 L757.7,565.4 L763.2,560.9 L768.5,556.3 L773.6,551.9 L778.6,547.4 L783.4,542.9 L788,538.4 L792.4,533.8 L796.7,529.2 L800.8,524.4 L804.6,519.6 L808,514.9 L811.1,510.2 L814,505.5 L816.6,500.8 L819.1,496 L821.5,491.3 L823.8,486.4 L826.2,481.5 L828.6,476.5 L831.2,471.3 L833.9,466.1 L836.9,460.6 L840.2,455 L843.7,449.2 L847.4,443.2 L851.2,437 L855.2,430.7 L859.2,424.2 L863.3,417.7 L867.5,411 L871.7,404.3 L876,397.6 L880.3,390.9 L884.5,384.2 L888.7,377.5 L892.9,370.9 L897,364.4 L897,422 L894.1,427.7 L891.2,433.4 L888.3,439.1 L885.3,444.7 L882.3,450.3 L879.4,455.9 L876.4,461.5 L873.5,467.2 L870.6,472.9 L867.8,478.7 L865,484.6 L862.2,490.6 L859.6,496.7 L857,503 L854.6,509.5 L852.4,516.1 L850.5,522.9 L848.6,529.9 L846.9,536.9 L845.1,544 L843.4,551.2 L841.5,558.4 L839.6,565.5 L837.4,572.6 L835.1,579.7 L832.4,586.6 L829.4,593.4 L826,600 L822.3,606.5 L818.4,612.9 L814.3,619.3 L810.1,625.6 L805.6,631.9 L800.9,638.1 L796.1,644.2 L791,650.3 L785.7,656.4 L780.2,662.4 L774.5,668.4 L768.5,674.3 L762.4,680.2 L756,686 L749.3,691.8 L742.2,697.5 L734.8,703.2 L727.1,708.8 L719.2,714.3 L711,719.8 L702.8,725.3 L694.3,730.8 L685.9,736.2 L677.4,741.6 L668.9,746.9 L660.5,752.3 L652.2,757.6 L644,763 L635.9,768.3 L627.8,773.7 L619.6,779 L611.4,784.2 L603.2,789.5 L595,794.7 L586.8,800 L578.6,805.2 L570.4,810.3 L562.2,815.5 L554.1,820.6 L546,825.8 L538,830.9 L530,836 L522.1,841 L514.4,845.9 L506.8,850.7 L499.3,855.5 L491.9,860.2 L484.4,865.1 L477,870 L469.6,875 L462.2,880.1 L454.9,885.3 L447.6,890.5 L440.4,895.7 L433.1,900.8 L425.8,906Z" fill="#e0ffe8"/>
<path d="M425.8,822.5 L432.6,818.3 L432.7,827.5 L425.8,831.8ZM425.8,831.8 L432.7,827.5 L432.7,836.7 L425.8,841.1ZM425.8,841.1 L432.7,836.7 L432.8,845.8 L425.8,850.4ZM432.6,809.1 L439.3,805 L439.4,814.1 L432.6,818.3ZM432.6,818.3 L439.4,814.1 L439.5,823.1 L432.7,827.5ZM432.7,827.5 L439.5,823.1 L439.6,832.2 L432.7,836.7ZM432.7,836.7 L439.6,832.2 L439.7,841.3 L432.8,845.8ZM432.8,845.8 L439.7,841.3 L439.8,850.3 L432.8,855ZM432.8,855 L439.8,850.3 L440,859.4 L432.9,864.2ZM439.3,805 L446.1,800.9 L446.2,809.9 L439.4,814.1ZM439.4,814.1 L446.2,809.9 L446.4,818.8 L439.5,823.1ZM439.5,823.1 L446.4,818.8 L446.5,827.8 L439.6,832.2ZM439.6,832.2 L446.5,827.8 L446.7,836.7 L439.7,841.3ZM439.7,841.3 L446.7,836.7 L446.9,845.7 L439.8,850.3ZM439.8,850.3 L446.9,845.7 L447,854.6 L440,859.4ZM440,859.4 L447,854.6 L447.2,863.6 L440.1,868.5ZM446.1,800.9 L452.8,796.8 L453,805.6 L446.2,809.9ZM446.2,809.9 L453,805.6 L453.2,814.5 L446.4,818.8ZM446.4,818.8 L453.2,814.5 L453.5,823.3 L446.5,827.8ZM446.5,827.8 L453.5,823.3 L453.7,832.2 L446.7,836.7ZM446.7,836.7 L453.7,832.2 L453.9,841 L446.9,845.7ZM446.9,845.7 L453.9,841 L454.1,849.9 L447,854.6ZM447,854.6 L454.1,849.9 L454.3,858.7 L447.2,863.6ZM447.2,863.6 L454.3,858.7 L454.5,867.6 L447.3,872.6ZM452.8,796.8 L459.6,792.6 L459.8,801.4 L453,805.6ZM453,805.6 L459.8,801.4 L460.1,810.1 L453.2,814.5ZM453.2,814.5 L460.1,810.1 L460.4,818.9 L453.5,823.3ZM453.9,841 L460.9,836.4 L461.2,845.1 L454.1,849.9ZM454.1,849.9 L461.2,845.1 L461.4,853.9 L454.3,858.7ZM454.3,858.7 L461.4,853.9 L461.7,862.6 L454.5,867.6ZM454.5,867.6 L461.7,862.6 L462,871.4 L454.7,876.4ZM459.6,792.6 L466.3,788.5 L466.7,797.2 L459.8,801.4ZM459.8,801.4 L466.7,797.2 L467,805.8 L460.1,810.1ZM460.1,810.1 L467,805.8 L467.3,814.5 L460.4,818.9ZM461.2,845.1 L468.3,840.4 L468.6,849.1 L461.4,853.9ZM461.4,853.9 L468.6,849.1 L468.9,857.7 L461.7,862.6ZM461.7,862.6 L468.9,857.7 L469.3,866.4 L462,871.4ZM466.7,797.2 L473.5,792.9 L473.9,801.5 L467,805.8ZM467,805.8 L473.9,801.5 L474.3,810.1 L467.3,814.5ZM467.3,814.5 L474.3,810.1 L474.6,818.6 L467.6,823.1ZM468.6,849.1 L475.8,844.3 L476.2,852.9 L468.9,857.7ZM468.9,857.7 L476.2,852.9 L476.6,861.4 L469.3,866.4ZM469.3,866.4 L476.6,861.4 L477,870 L469.6,875ZM473.5,792.9 L480.2,788.8 L480.7,797.3 L473.9,801.5ZM473.9,801.5 L480.7,797.3 L481.1,805.7 L474.3,810.1ZM474.3,810.1 L481.1,805.7 L481.6,814.2 L474.6,818.6ZM474.6,818.6 L481.6,814.2 L482.1,822.7 L475,827.2ZM475.8,844.3 L483,839.6 L483.5,848.1 L476.2,852.9ZM476.2,852.9 L483.5,848.1 L484,856.6 L476.6,861.4ZM476.6,861.4 L484,856.6 L484.4,865.1 L477,870ZM480.7,797.3 L487.4,793.1 L487.9,801.5 L481.1,805.7ZM481.1,805.7 L487.9,801.5 L488.5,809.9 L481.6,814.2ZM481.6,814.2 L488.5,809.9 L489.1,818.3 L482.1,822.7ZM482.1,822.7 L489.1,818.3 L489.6,826.7 L482.5,831.2ZM482.5,831.2 L489.6,826.7 L490.2,835.1 L483,839.6ZM483,839.6 L490.2,835.1 L490.7,843.5 L483.5,848.1ZM483.5,848.1 L490.7,843.5 L491.3,851.9 L484,856.6ZM484,856.6 L491.3,851.9 L491.9,860.2 L484.4,865.1ZM487.9,801.5 L494.7,797.4 L495.4,805.7 L488.5,809.9ZM488.5,809.9 L495.4,805.7 L496,814 L489.1,818.3ZM489.1,818.3 L496,814 L496.7,822.3 L489.6,826.7ZM489.6,826.7 L496.7,822.3 L497.3,830.6 L490.2,835.1ZM490.2,835.1 L497.3,830.6 L498,838.9 L490.7,843.5ZM490.7,843.5 L498,838.9 L498.7,847.2 L491.3,851.9ZM491.3,851.9 L498.7,847.2 L499.3,855.5 L491.9,860.2ZM495.4,805.7 L502.3,801.4 L503.1,809.6 L496,814ZM496,814 L503.1,809.6 L503.8,817.8 L496.7,822.3ZM496.7,822.3 L503.8,817.8 L504.6,826 L497.3,830.6ZM497.3,830.6 L504.6,826 L505.3,834.3 L498,838.9ZM498,838.9 L505.3,834.3 L506.1,842.5 L498.7,847.2ZM498.7,847.2 L506.1,842.5 L506.8,850.7 L499.3,855.5ZM858.2,477.7 L861.2,471.6 L862.5,475.9 L859.5,482ZM859.5,482 L862.5,475.9 L863.7,480.3 L860.9,486.3ZM860.9,486.3 L863.7,480.3 L865,484.6 L862.2,490.6ZM863.7,480.3 L866.6,474.3 L867.8,478.7 L865,484.6Z" fill="#80ffff"/>
<path d="M453.5,823.3 L460.4,818.9 L460.6,827.6 L453.7,832.2ZM453.7,832.2 L460.6,827.6 L460.9,836.4 L453.9,841ZM460.4,818.9 L467.3,814.5 L467.6,823.1 L460.6,827.6ZM460.6,827.6 L467.6,823.1 L468,831.8 L460.9,836.4ZM460.9,836.4 L468,831.8 L468.3,840.4 L461.2,845.1ZM467.6,823.1 L474.6,818.6 L475,827.2 L468,831.8ZM468,831.8 L475,827.2 L475.4,835.7 L468.3,840.4ZM468.3,840.4 L475.4,835.7 L475.8,844.3 L468.6,849.1ZM475,827.2 L482.1,822.7 L482.5,831.2 L475.4,835.7ZM475.4,835.7 L482.5,831.2 L483,839.6 L475.8,844.3ZM847.4,443.2 L851.2,437 L852.5,441.3 L848.8,447.5ZM848.8,447.5 L852.5,441.3 L853.7,445.6 L850.1,451.8ZM850.1,451.8 L853.7,445.6 L855,450 L851.4,456.1ZM851.4,456.1 L855,450 L856.2,454.3 L852.8,460.4ZM852.8,460.4 L856.2,454.3 L857.5,458.6 L854.1,464.7ZM854.1,464.7 L857.5,458.6 L858.7,462.9 L855.5,469ZM855.5,469 L858.7,462.9 L860,467.3 L856.8,473.3ZM856.8,473.3 L860,467.3 L861.2,471.6 L858.2,477.7ZM851.2,437 L855.2,430.7 L856.3,435 L852.5,441.3ZM852.5,441.3 L856.3,435 L857.5,439.4 L853.7,445.6ZM853.7,445.6 L857.5,439.4 L858.6,443.8 L855,450ZM855,450 L858.6,443.8 L859.7,448.1 L856.2,454.3ZM856.2,454.3 L859.7,448.1 L860.9,452.5 L857.5,458.6ZM857.5,458.6 L860.9,452.5 L862,456.9 L858.7,462.9ZM858.7,462.9 L862,456.9 L863.2,461.2 L860,467.3ZM860,467.3 L863.2,461.2 L864.3,465.6 L861.2,471.6ZM861.2,471.6 L864.3,465.6 L865.5,470 L862.5,475.9ZM862.5,475.9 L865.5,470 L866.6,474.3 L863.7,480.3ZM855.2,430.7 L859.2,424.2 L860.2,428.6 L856.3,435ZM856.3,435 L860.2,428.6 L861.3,433.1 L857.5,439.4ZM857.5,439.4 L861.3,433.1 L862.3,437.5 L858.6,443.8ZM858.6,443.8 L862.3,437.5 L863.4,441.9 L859.7,448.1ZM859.7,448.1 L863.4,441.9 L864.4,446.3 L860.9,452.5ZM860.9,452.5 L864.4,446.3 L865.4,450.8 L862,456.9ZM862,456.9 L865.4,450.8 L866.5,455.2 L863.2,461.2ZM863.2,461.2 L866.5,455.2 L867.5,459.6 L864.3,465.6ZM864.3,465.6 L867.5,459.6 L868.5,464 L865.5,470ZM865.5,470 L868.5,464 L869.6,468.5 L866.6,474.3ZM866.6,474.3 L869.6,468.5 L870.6,472.9 L867.8,478.7ZM859.2,424.2 L863.3,417.7 L864.3,422.2 L860.2,428.6ZM860.2,428.6 L864.3,422.2 L865.2,426.7 L861.3,433.1ZM861.3,433.1 L865.2,426.7 L866.1,431.2 L862.3,437.5ZM862.3,437.5 L866.1,431.2 L867,435.7 L863.4,441.9ZM863.4,441.9 L867,435.7 L868,440.2 L864.4,446.3ZM864.4,446.3 L868,440.2 L868.9,444.7 L865.4,450.8ZM865.4,450.8 L868.9,444.7 L869.8,449.2 L866.5,455.2ZM866.5,455.2 L869.8,449.2 L870.7,453.7 L867.5,459.6ZM867.5,459.6 L870.7,453.7 L871.7,458.2 L868.5,464ZM868.5,464 L871.7,458.2 L872.6,462.7 L869.6,468.5ZM869.6,468.5 L872.6,462.7 L873.5,467.2 L870.6,472.9ZM863.3,417.7 L867.5,411 L868.3,415.6 L864.3,422.2ZM864.3,422.2 L868.3,415.6 L869.1,420.2 L865.2,426.7ZM865.2,426.7 L869.1,420.2 L869.9,424.8 L866.1,431.2ZM866.1,431.2 L869.9,424.8 L870.8,429.4 L867,435.7ZM867,435.7 L870.8,429.4 L871.6,434 L868,440.2ZM868,440.2 L871.6,434 L872.4,438.6 L868.9,444.7ZM868.9,444.7 L872.4,438.6 L873.2,443.1 L869.8,449.2ZM869.8,449.2 L873.2,443.1 L874,447.7 L870.7,453.7ZM870.7,453.7 L874,447.7 L874.8,452.3 L871.7,458.2ZM871.7,458.2 L874.8,452.3 L875.6,456.9 L872.6,462.7ZM872.6,462.7 L875.6,456.9 L876.4,461.5 L873.5,467.2ZM867.5,411 L871.7,404.3 L872.4,409 L868.3,415.6ZM868.3,415.6 L872.4,409 L873.1,413.7 L869.1,420.2ZM869.1,420.2 L873.1,413.7 L873.8,418.4 L869.9,424.8ZM869.9,424.8 L873.8,418.4 L874.5,423.1 L870.8,429.4ZM870.8,429.4 L874.5,423.1 L875.2,427.8 L871.6,434ZM871.6,434 L875.2,427.8 L875.9,432.5 L872.4,438.6ZM872.4,438.6 L875.9,432.5 L876.6,437.1 L873.2,443.1ZM873.2,443.1 L876.6,437.1 L877.3,441.8 L874,447.7ZM874,447.7 L877.3,441.8 L878,446.5 L874.8,452.3ZM874.8,452.3 L878,446.5 L878.7,451.2 L875.6,456.9ZM875.6,456.9 L878.7,451.2 L879.4,455.9 L876.4,461.5ZM871.7,404.3 L876,397.6 L876.6,402.4 L872.4,409ZM872.4,409 L876.6,402.4 L877.2,407.2 L873.1,413.7ZM873.1,413.7 L877.2,407.2 L877.7,412 L873.8,418.4ZM873.8,418.4 L877.7,412 L878.3,416.8 L874.5,423.1ZM874.5,423.1 L878.3,416.8 L878.9,421.6 L875.2,427.8ZM875.2,427.8 L878.9,421.6 L879.5,426.3 L875.9,432.5ZM875.9,432.5 L879.5,426.3 L880,431.1 L876.6,437.1ZM876.6,437.1 L880,431.1 L880.6,435.9 L877.3,441.8ZM877.3,441.8 L880.6,435.9 L881.2,440.7 L878,446.5ZM878,446.5 L881.2,440.7 L881.8,445.5 L878.7,451.2ZM878.7,451.2 L881.8,445.5 L882.3,450.3 L879.4,455.9ZM876,397.6 L880.3,390.9 L880.7,395.8 L876.6,402.4ZM876.6,402.4 L880.7,395.8 L881.2,400.7 L877.2,407.2ZM877.2,407.2 L881.2,400.7 L881.6,405.6 L877.7,412ZM877.7,412 L881.6,405.6 L882.1,410.5 L878.3,416.8ZM878.3,416.8 L882.1,410.5 L882.6,415.3 L878.9,421.6ZM878.9,421.6 L882.6,415.3 L883,420.2 L879.5,426.3ZM879.5,426.3 L883,420.2 L883.5,425.1 L880,431.1ZM880,431.1 L883.5,425.1 L883.9,430 L880.6,435.9ZM880.6,435.9 L883.9,430 L884.4,434.9 L881.2,440.7ZM881.2,440.7 L884.4,434.9 L884.9,439.8 L881.8,445.5ZM881.8,445.5 L884.9,439.8 L885.3,444.7 L882.3,450.3ZM880.3,390.9 L884.5,384.2 L884.9,389.2 L880.7,395.8ZM880.7,395.8 L884.9,389.2 L885.2,394.2 L881.2,400.7ZM881.2,400.7 L885.2,394.2 L885.5,399.2 L881.6,405.6ZM881.6,405.6 L885.5,399.2 L885.9,404.2 L882.1,410.5ZM882.1,410.5 L885.9,404.2 L886.2,409.1 L882.6,415.3ZM882.6,415.3 L886.2,409.1 L886.6,414.1 L883,420.2ZM883,420.2 L886.6,414.1 L886.9,419.1 L883.5,425.1ZM883.5,425.1 L886.9,419.1 L887.2,424.1 L883.9,430ZM883.9,430 L887.2,424.1 L887.6,429.1 L884.4,434.9ZM884.4,434.9 L887.6,429.1 L887.9,434.1 L884.9,439.8ZM884.9,439.8 L887.9,434.1 L888.3,439.1 L885.3,444.7ZM884.5,384.2 L888.7,377.5 L889,382.6 L884.9,389.2ZM884.9,389.2 L889,382.6 L889.2,387.7 L885.2,394.2ZM885.2,394.2 L889.2,387.7 L889.4,392.8 L885.5,399.2ZM885.5,399.2 L889.4,392.8 L889.6,397.9 L885.9,404.2ZM885.9,404.2 L889.6,397.9 L889.9,402.9 L886.2,409.1ZM886.2,409.1 L889.9,402.9 L890.1,408 L886.6,414.1ZM886.6,414.1 L890.1,408 L890.3,413.1 L886.9,419.1ZM886.9,419.1 L890.3,413.1 L890.5,418.2 L887.2,424.1ZM887.2,424.1 L890.5,418.2 L890.8,423.3 L887.6,429.1ZM887.6,429.1 L890.8,423.3 L891,428.3 L887.9,434.1ZM887.9,434.1 L891,428.3 L891.2,433.4 L888.3,439.1ZM888.7,377.5 L892.9,370.9 L893,376.1 L889,382.6ZM889,382.6 L893,376.1 L893.1,381.3 L889.2,387.7ZM889.2,387.7 L893.1,381.3 L893.2,386.4 L889.4,392.8ZM889.4,392.8 L893.2,386.4 L893.3,391.6 L889.6,397.9ZM889.6,397.9 L893.3,391.6 L893.5,396.8 L889.9,402.9ZM889.9,402.9 L893.5,396.8 L893.6,401.9 L890.1,408ZM890.1,408 L893.6,401.9 L893.7,407.1 L890.3,413.1ZM890.3,413.1 L893.7,407.1 L893.8,412.2 L890.5,418.2ZM890.5,418.2 L893.8,412.2 L893.9,417.4 L890.8,423.3ZM890.8,423.3 L893.9,417.4 L894,422.6 L891,428.3ZM891,428.3 L894,422.6 L894.1,427.7 L891.2,433.4Z" fill="#40e0ff"/>
<path d="M680.5,671.2 L688.3,665.3 L690.4,673.8 L682.5,679.7ZM682.5,679.7 L690.4,673.8 L692.4,682.4 L684.4,688.2ZM684.4,688.2 L692.4,682.4 L694.5,691 L686.4,696.7ZM686.2,656.7 L693.8,650.7 L696,659.4 L688.3,665.3ZM688.3,665.3 L696,659.4 L698.1,668 L690.4,673.8ZM690.4,673.8 L698.1,668 L700.3,676.6 L692.4,682.4ZM692.4,682.4 L700.3,676.6 L702.4,685.3 L694.5,691ZM694.5,691 L702.4,685.3 L704.6,693.9 L696.6,699.6ZM696.6,699.6 L704.6,693.9 L706.7,702.6 L698.6,708.2ZM691.7,642.1 L699.1,636.1 L701.3,644.8 L693.8,650.7ZM693.8,650.7 L701.3,644.8 L703.6,653.5 L696,659.4ZM696,659.4 L703.6,653.5 L705.8,662.2 L698.1,668ZM698.1,668 L705.8,662.2 L708,670.9 L700.3,676.6ZM700.3,676.6 L708,670.9 L710.3,679.6 L702.4,685.3ZM702.4,685.3 L710.3,679.6 L712.5,688.3 L704.6,693.9ZM704.6,693.9 L712.5,688.3 L714.7,696.9 L706.7,702.6ZM706.7,702.6 L714.7,696.9 L717,705.6 L708.9,711.2ZM699.1,636.1 L706.4,630.2 L708.7,638.9 L701.3,644.8ZM701.3,644.8 L708.7,638.9 L711,647.6 L703.6,653.5ZM703.6,653.5 L711,647.6 L713.3,656.4 L705.8,662.2ZM705.8,662.2 L713.3,656.4 L715.6,665.1 L708,670.9ZM708,670.9 L715.6,665.1 L717.9,673.8 L710.3,679.6ZM710.3,679.6 L717.9,673.8 L720.2,682.6 L712.5,688.3ZM712.5,688.3 L720.2,682.6 L722.5,691.3 L714.7,696.9ZM714.7,696.9 L722.5,691.3 L724.8,700 L717,705.6ZM717,705.6 L724.8,700 L727.1,708.8 L719.2,714.3ZM706.4,630.2 L713.5,624.3 L715.9,633.1 L708.7,638.9ZM708.7,638.9 L715.9,633.1 L718.2,641.8 L711,647.6ZM711,647.6 L718.2,641.8 L720.6,650.6 L713.3,656.4ZM713.3,656.4 L720.6,650.6 L723,659.4 L715.6,665.1ZM715.6,665.1 L723,659.4 L725.3,668.1 L717.9,673.8ZM717.9,673.8 L725.3,668.1 L727.7,676.9 L720.2,682.6ZM720.2,682.6 L727.7,676.9 L730.1,685.6 L722.5,691.3ZM722.5,691.3 L730.1,685.6 L732.4,694.4 L724.8,700ZM724.8,700 L732.4,694.4 L734.8,703.2 L727.1,708.8ZM708.7,606.8 L715.5,601 L717.9,609.8 L711.1,615.6ZM711.1,615.6 L717.9,609.8 L720.4,618.6 L713.5,624.3ZM713.5,624.3 L720.4,618.6 L722.8,627.3 L715.9,633.1ZM715.9,633.1 L722.8,627.3 L725.2,636.1 L718.2,641.8ZM718.2,641.8 L725.2,636.1 L727.7,644.9 L720.6,650.6ZM720.6,650.6 L727.7,644.9 L730.1,653.6 L723,659.4ZM723,659.4 L730.1,653.6 L732.5,662.4 L725.3,668.1ZM725.3,668.1 L732.5,662.4 L734.9,671.2 L727.7,676.9ZM727.7,676.9 L734.9,671.2 L737.4,680 L730.1,685.6ZM730.1,685.6 L737.4,680 L739.8,688.7 L732.4,694.4ZM732.4,694.4 L739.8,688.7 L742.2,697.5 L734.8,703.2ZM715.5,601 L722.1,595.4 L724.5,604.2 L717.9,609.8ZM717.9,609.8 L724.5,604.2 L727,612.9 L720.4,618.6ZM720.4,618.6 L727,612.9 L729.5,621.7 L722.8,627.3ZM722.8,627.3 L729.5,621.7 L732,630.5 L725.2,636.1ZM725.2,636.1 L732,630.5 L734.4,639.2 L727.7,644.9ZM727.7,644.9 L734.4,639.2 L736.9,648 L730.1,653.6ZM730.1,653.6 L736.9,648 L739.4,656.7 L732.5,662.4ZM732.5,662.4 L739.4,656.7 L741.9,665.5 L734.9,671.2ZM734.9,671.2 L741.9,665.5 L744.3,674.3 L737.4,680ZM737.4,680 L744.3,674.3 L746.8,683 L739.8,688.7ZM739.8,688.7 L746.8,683 L749.3,691.8 L742.2,697.5ZM722.1,595.4 L728.4,590 L730.9,598.7 L724.5,604.2ZM724.5,604.2 L730.9,598.7 L733.4,607.5 L727,612.9ZM727,612.9 L733.4,607.5 L735.9,616.2 L729.5,621.7ZM729.5,621.7 L735.9,616.2 L738.4,624.9 L732,630.5ZM732,630.5 L738.4,624.9 L740.9,633.6 L734.4,639.2ZM734.4,639.2 L740.9,633.6 L743.5,642.4 L736.9,648ZM736.9,648 L743.5,642.4 L746,651.1 L739.4,656.7ZM739.4,656.7 L746,651.1 L748.5,659.8 L741.9,665.5ZM741.9,665.5 L748.5,659.8 L751,668.5 L744.3,674.3ZM744.3,674.3 L751,668.5 L753.5,677.3 L746.8,683ZM746.8,683 L753.5,677.3 L756,686 L749.3,691.8ZM728.4,590 L734.5,584.8 L737.1,593.5 L730.9,598.7ZM730.9,598.7 L737.1,593.5 L739.6,602.1 L733.4,607.5ZM733.4,607.5 L739.6,602.1 L742.1,610.8 L735.9,616.2ZM735.9,616.2 L742.1,610.8 L744.7,619.5 L738.4,624.9ZM738.4,624.9 L744.7,619.5 L747.2,628.1 L740.9,633.6ZM740.9,633.6 L747.2,628.1 L749.7,636.8 L743.5,642.4ZM743.5,642.4 L749.7,636.8 L752.3,645.5 L746,651.1ZM746,651.1 L752.3,645.5 L754.8,654.1 L748.5,659.8ZM748.5,659.8 L754.8,654.1 L757.3,662.8 L751,668.5ZM751,668.5 L757.3,662.8 L759.9,671.5 L753.5,677.3ZM753.5,677.3 L759.9,671.5 L762.4,680.2 L756,686ZM734.5,584.8 L740.5,579.7 L743.1,588.3 L737.1,593.5ZM737.1,593.5 L743.1,588.3 L745.6,596.9 L739.6,602.1ZM739.6,602.1 L745.6,596.9 L748.2,605.5 L742.1,610.8ZM742.1,610.8 L748.2,605.5 L750.7,614.1 L744.7,619.5ZM744.7,619.5 L750.7,614.1 L753.3,622.7 L747.2,628.1ZM747.2,628.1 L753.3,622.7 L755.8,631.3 L749.7,636.8ZM749.7,636.8 L755.8,631.3 L758.4,639.9 L752.3,645.5ZM752.3,645.5 L758.4,639.9 L760.9,648.5 L754.8,654.1ZM754.8,654.1 L760.9,648.5 L763.5,657.1 L757.3,662.8ZM757.3,662.8 L763.5,657.1 L766,665.7 L759.9,671.5ZM759.9,671.5 L766,665.7 L768.5,674.3 L762.4,680.2ZM740.5,579.7 L746.4,574.9 L749,583.4 L743.1,588.3ZM743.1,588.3 L749,583.4 L751.5,591.9 L745.6,596.9ZM745.6,596.9 L751.5,591.9 L754.1,600.4 L748.2,605.5ZM748.2,605.5 L754.1,600.4 L756.6,608.9 L750.7,614.1ZM750.7,614.1 L756.6,608.9 L759.2,617.4 L753.3,622.7ZM753.3,622.7 L759.2,617.4 L761.7,625.9 L755.8,631.3ZM755.8,631.3 L761.7,625.9 L764.3,634.4 L758.4,639.9ZM758.4,639.9 L764.3,634.4 L766.8,642.9 L760.9,648.5ZM760.9,648.5 L766.8,642.9 L769.4,651.4 L763.5,657.1ZM763.5,657.1 L769.4,651.4 L771.9,659.9 L766,665.7ZM766,665.7 L771.9,659.9 L774.5,668.4 L768.5,674.3ZM746.4,574.9 L752.1,570.1 L754.7,578.5 L749,583.4ZM749,583.4 L754.7,578.5 L757.2,586.9 L751.5,591.9ZM751.5,591.9 L757.2,586.9 L759.8,595.3 L754.1,600.4ZM761.7,625.9 L767.4,620.4 L770,628.8 L764.3,634.4ZM764.3,634.4 L770,628.8 L772.5,637.2 L766.8,642.9ZM766.8,642.9 L772.5,637.2 L775.1,645.6 L769.4,651.4ZM769.4,651.4 L775.1,645.6 L777.6,654 L771.9,659.9ZM771.9,659.9 L777.6,654 L780.2,662.4 L774.5,668.4ZM752.1,570.1 L757.7,565.4 L760.3,573.7 L754.7,578.5ZM754.7,578.5 L760.3,573.7 L762.8,582 L757.2,586.9ZM772.5,637.2 L778.1,631.6 L780.6,639.9 L775.1,645.6ZM775.1,645.6 L780.6,639.9 L783.2,648.1 L777.6,654ZM777.6,654 L783.2,648.1 L785.7,656.4 L780.2,662.4ZM757.7,565.4 L763.2,560.9 L765.7,569 L760.3,573.7ZM760.3,573.7 L765.7,569 L768.2,577.1 L762.8,582ZM778.1,631.6 L783.4,625.9 L785.9,634.1 L780.6,639.9ZM780.6,639.9 L785.9,634.1 L788.5,642.2 L783.2,648.1ZM783.2,648.1 L788.5,642.2 L791,650.3 L785.7,656.4ZM763.2,560.9 L768.5,556.3 L771,564.3 L765.7,569ZM785.9,634.1 L791,628.3 L793.6,636.3 L788.5,642.2ZM788.5,642.2 L793.6,636.3 L796.1,644.2 L791,650.3ZM768.5,556.3 L773.6,551.9 L776.1,559.7 L771,564.3ZM791,628.3 L796,622.4 L798.4,630.3 L793.6,636.3ZM793.6,636.3 L798.4,630.3 L800.9,638.1 L796.1,644.2ZM773.6,551.9 L778.6,547.4 L781,555.1 L776.1,559.7ZM798.4,630.3 L803.1,624.2 L805.6,631.9 L800.9,638.1ZM778.6,547.4 L783.4,542.9 L785.8,550.4 L781,555.1ZM781,555.1 L785.8,550.4 L788.2,558 L783.5,562.8ZM803.1,624.2 L807.6,618.1 L810.1,625.6 L805.6,631.9ZM783.4,542.9 L788,538.4 L790.4,545.8 L785.8,550.4ZM785.8,550.4 L790.4,545.8 L792.8,553.1 L788.2,558ZM807.6,618.1 L811.9,612 L814.3,619.3 L810.1,625.6ZM788,538.4 L792.4,533.8 L794.8,541 L790.4,545.8ZM790.4,545.8 L794.8,541 L797.2,548.2 L792.8,553.1ZM792.8,553.1 L797.2,548.2 L799.5,555.4 L795.2,560.5ZM811.9,612 L816.1,605.7 L818.4,612.9 L814.3,619.3ZM792.4,533.8 L796.7,529.2 L799,536.2 L794.8,541ZM794.8,541 L799,536.2 L801.4,543.2 L797.2,548.2ZM797.2,548.2 L801.4,543.2 L803.7,550.3 L799.5,555.4ZM799.5,555.4 L803.7,550.3 L806,557.3 L801.9,562.6ZM813.7,598.6 L817.6,592.4 L820,599.5 L816.1,605.7ZM816.1,605.7 L820,599.5 L822.3,606.5 L818.4,612.9ZM796.7,529.2 L800.8,524.4 L803.1,531.3 L799,536.2ZM799,536.2 L803.1,531.3 L805.4,538.1 L801.4,543.2ZM801.4,543.2 L805.4,538.1 L807.7,545 L803.7,550.3ZM803.7,550.3 L807.7,545 L810,551.9 L806,557.3ZM806,557.3 L810,551.9 L812.3,558.8 L808.3,564.3ZM808.3,564.3 L812.3,558.8 L814.5,565.6 L810.7,571.3ZM810.7,571.3 L814.5,565.6 L816.8,572.5 L813,578.4ZM813,578.4 L816.8,572.5 L819.1,579.4 L815.3,585.4ZM815.3,585.4 L819.1,579.4 L821.4,586.3 L817.6,592.4ZM817.6,592.4 L821.4,586.3 L823.7,593.1 L820,599.5ZM820,599.5 L823.7,593.1 L826,600 L822.3,606.5ZM800.8,524.4 L804.6,519.6 L806.8,526.3 L803.1,531.3ZM803.1,531.3 L806.8,526.3 L809.1,533 L805.4,538.1ZM805.4,538.1 L809.1,533 L811.4,539.7 L807.7,545ZM807.7,545 L811.4,539.7 L813.6,546.4 L810,551.9ZM810,551.9 L813.6,546.4 L815.9,553.1 L812.3,558.8ZM812.3,558.8 L815.9,553.1 L818.1,559.8 L814.5,565.6ZM814.5,565.6 L818.1,559.8 L820.4,566.5 L816.8,572.5ZM816.8,572.5 L820.4,566.5 L822.6,573.3 L819.1,579.4ZM819.1,579.4 L822.6,573.3 L824.9,580 L821.4,586.3ZM821.4,586.3 L824.9,580 L827.1,586.7 L823.7,593.1ZM823.7,593.1 L827.1,586.7 L829.4,593.4 L826,600ZM804.6,519.6 L808,514.9 L810.2,521.4 L806.8,526.3ZM806.8,526.3 L810.2,521.4 L812.4,527.9 L809.1,533ZM809.1,533 L812.4,527.9 L814.7,534.4 L811.4,539.7ZM811.4,539.7 L814.7,534.4 L816.9,540.9 L813.6,546.4ZM813.6,546.4 L816.9,540.9 L819.1,547.5 L815.9,553.1ZM815.9,553.1 L819.1,547.5 L821.3,554 L818.1,559.8ZM818.1,559.8 L821.3,554 L823.5,560.5 L820.4,566.5ZM820.4,566.5 L823.5,560.5 L825.7,567 L822.6,573.3ZM822.6,573.3 L825.7,567 L828,573.5 L824.9,580ZM824.9,580 L828,573.5 L830.2,580.1 L827.1,586.7ZM827.1,586.7 L830.2,580.1 L832.4,586.6 L829.4,593.4ZM808,514.9 L811.1,510.2 L813.3,516.5 L810.2,521.4ZM810.2,521.4 L813.3,516.5 L815.5,522.8 L812.4,527.9ZM812.4,527.9 L815.5,522.8 L817.6,529.1 L814.7,534.4ZM814.7,534.4 L817.6,529.1 L819.8,535.4 L816.9,540.9ZM816.9,540.9 L819.8,535.4 L822,541.7 L819.1,547.5ZM819.1,547.5 L822,541.7 L824.2,548.1 L821.3,554ZM821.3,554 L824.2,548.1 L826.4,554.4 L823.5,560.5ZM823.5,560.5 L826.4,554.4 L828.5,560.7 L825.7,567ZM825.7,567 L828.5,560.7 L830.7,567 L828,573.5ZM828,573.5 L830.7,567 L832.9,573.3 L830.2,580.1ZM830.2,580.1 L832.9,573.3 L835.1,579.7 L832.4,586.6ZM811.1,510.2 L814,505.5 L816.1,511.6 L813.3,516.5ZM813.3,516.5 L816.1,511.6 L818.2,517.7 L815.5,522.8ZM815.5,522.8 L818.2,517.7 L820.4,523.8 L817.6,529.1ZM817.6,529.1 L820.4,523.8 L822.5,529.9 L819.8,535.4ZM819.8,535.4 L822.5,529.9 L824.6,536 L822,541.7ZM822,541.7 L824.6,536 L826.8,542.1 L824.2,548.1ZM824.2,548.1 L826.8,542.1 L828.9,548.2 L826.4,554.4ZM826.4,554.4 L828.9,548.2 L831,554.3 L828.5,560.7ZM828.5,560.7 L831,554.3 L833.2,560.4 L830.7,567ZM830.7,567 L833.2,560.4 L835.3,566.5 L832.9,573.3ZM832.9,573.3 L835.3,566.5 L837.4,572.6 L835.1,579.7ZM814,505.5 L816.6,500.8 L818.7,506.7 L816.1,511.6ZM816.1,511.6 L818.7,506.7 L820.8,512.5 L818.2,517.7ZM818.2,517.7 L820.8,512.5 L822.9,518.4 L820.4,523.8ZM820.4,523.8 L822.9,518.4 L825,524.3 L822.5,529.9ZM822.5,529.9 L825,524.3 L827,530.2 L824.6,536ZM824.6,536 L827,530.2 L829.1,536.1 L826.8,542.1ZM826.8,542.1 L829.1,536.1 L831.2,542 L828.9,548.2ZM828.9,548.2 L831.2,542 L833.3,547.9 L831,554.3ZM831,554.3 L833.3,547.9 L835.4,553.7 L833.2,560.4ZM833.2,560.4 L835.4,553.7 L837.5,559.6 L835.3,566.5ZM835.3,566.5 L837.5,559.6 L839.6,565.5 L837.4,572.6ZM816.6,500.8 L819.1,496 L821.1,501.7 L818.7,506.7ZM818.7,506.7 L821.1,501.7 L823.2,507.4 L820.8,512.5ZM820.8,512.5 L823.2,507.4 L825.2,513 L822.9,518.4ZM822.9,518.4 L825.2,513 L827.2,518.7 L825,524.3ZM825,524.3 L827.2,518.7 L829.3,524.4 L827,530.2ZM827,530.2 L829.3,524.4 L831.3,530 L829.1,536.1ZM829.1,536.1 L831.3,530 L833.4,535.7 L831.2,542ZM831.2,542 L833.4,535.7 L835.4,541.4 L833.3,547.9ZM833.3,547.9 L835.4,541.4 L837.5,547 L835.4,553.7ZM835.4,553.7 L837.5,547 L839.5,552.7 L837.5,559.6ZM837.5,559.6 L839.5,552.7 L841.5,558.4 L839.6,565.5ZM819.1,496 L821.5,491.3 L823.5,496.7 L821.1,501.7ZM821.1,501.7 L823.5,496.7 L825.5,502.2 L823.2,507.4ZM823.2,507.4 L825.5,502.2 L827.4,507.6 L825.2,513ZM825.2,513 L827.4,507.6 L829.4,513.1 L827.2,518.7ZM827.2,518.7 L829.4,513.1 L831.4,518.5 L829.3,524.4ZM829.3,524.4 L831.4,518.5 L833.4,523.9 L831.3,530ZM831.3,530 L833.4,523.9 L835.4,529.4 L833.4,535.7ZM833.4,535.7 L835.4,529.4 L837.4,534.8 L835.4,541.4ZM835.4,541.4 L837.4,534.8 L839.4,540.3 L837.5,547ZM837.5,547 L839.4,540.3 L841.4,545.7 L839.5,552.7ZM839.5,552.7 L841.4,545.7 L843.4,551.2 L841.5,558.4ZM821.5,491.3 L823.8,486.4 L825.8,491.7 L823.5,496.7ZM823.5,496.7 L825.8,491.7 L827.7,496.9 L825.5,502.2ZM825.5,502.2 L827.7,496.9 L829.6,502.1 L827.4,507.6ZM827.4,507.6 L829.6,502.1 L831.6,507.4 L829.4,513.1ZM829.4,513.1 L831.6,507.4 L833.5,512.6 L831.4,518.5ZM831.4,518.5 L833.5,512.6 L835.4,517.8 L833.4,523.9ZM833.4,523.9 L835.4,517.8 L837.4,523.1 L835.4,529.4ZM835.4,529.4 L837.4,523.1 L839.3,528.3 L837.4,534.8ZM837.4,534.8 L839.3,528.3 L841.3,533.6 L839.4,540.3ZM839.4,540.3 L841.3,533.6 L843.2,538.8 L841.4,545.7ZM841.4,545.7 L843.2,538.8 L845.1,544 L843.4,551.2ZM823.8,486.4 L826.2,481.5 L828.1,486.5 L825.8,491.7ZM825.8,491.7 L828.1,486.5 L830,491.6 L827.7,496.9ZM827.7,496.9 L830,491.6 L831.8,496.6 L829.6,502.1ZM829.6,502.1 L831.8,496.6 L833.7,501.7 L831.6,507.4ZM831.6,507.4 L833.7,501.7 L835.6,506.7 L833.5,512.6ZM833.5,512.6 L835.6,506.7 L837.5,511.7 L835.4,517.8ZM835.4,517.8 L837.5,511.7 L839.3,516.8 L837.4,523.1ZM837.4,523.1 L839.3,516.8 L841.2,521.8 L839.3,528.3ZM839.3,528.3 L841.2,521.8 L843.1,526.8 L841.3,533.6ZM841.3,533.6 L843.1,526.8 L845,531.9 L843.2,538.8ZM843.2,538.8 L845,531.9 L846.9,536.9 L845.1,544ZM826.2,481.5 L828.6,476.5 L830.5,481.3 L828.1,486.5ZM828.1,486.5 L830.5,481.3 L832.3,486.2 L830,491.6ZM830,491.6 L832.3,486.2 L834.1,491 L831.8,496.6ZM831.8,496.6 L834.1,491 L835.9,495.9 L833.7,501.7ZM833.7,501.7 L835.9,495.9 L837.7,500.8 L835.6,506.7ZM835.6,506.7 L837.7,500.8 L839.5,505.6 L837.5,511.7ZM837.5,511.7 L839.5,505.6 L841.4,510.5 L839.3,516.8ZM839.3,516.8 L841.4,510.5 L843.2,515.3 L841.2,521.8ZM841.2,521.8 L843.2,515.3 L845,520.2 L843.1,526.8ZM843.1,526.8 L845,520.2 L846.8,525 L845,531.9ZM845,531.9 L846.8,525 L848.6,529.9 L846.9,536.9ZM828.6,476.5 L831.2,471.3 L833,476 L830.5,481.3ZM830.5,481.3 L833,476 L834.7,480.7 L832.3,486.2ZM832.3,486.2 L834.7,480.7 L836.5,485.4 L834.1,491ZM834.1,491 L836.5,485.4 L838.2,490.1 L835.9,495.9ZM835.9,495.9 L838.2,490.1 L840,494.8 L837.7,500.8ZM837.7,500.8 L840,494.8 L841.7,499.5 L839.5,505.6ZM839.5,505.6 L841.7,499.5 L843.5,504.2 L841.4,510.5ZM841.4,510.5 L843.5,504.2 L845.2,508.9 L843.2,515.3ZM843.2,515.3 L845.2,508.9 L847,513.5 L845,520.2ZM845,520.2 L847,513.5 L848.7,518.2 L846.8,525ZM846.8,525 L848.7,518.2 L850.5,522.9 L848.6,529.9ZM831.2,471.3 L833.9,466.1 L835.6,470.6 L833,476ZM833,476 L835.6,470.6 L837.3,475.2 L834.7,480.7ZM834.7,480.7 L837.3,475.2 L839,479.7 L836.5,485.4ZM836.5,485.4 L839,479.7 L840.7,484.3 L838.2,490.1ZM838.2,490.1 L840.7,484.3 L842.4,488.8 L840,494.8ZM840,494.8 L842.4,488.8 L844,493.4 L841.7,499.5ZM841.7,499.5 L844,493.4 L845.7,497.9 L843.5,504.2ZM843.5,504.2 L845.7,497.9 L847.4,502.5 L845.2,508.9ZM845.2,508.9 L847.4,502.5 L849.1,507 L847,513.5ZM847,513.5 L849.1,507 L850.8,511.6 L848.7,518.2ZM848.7,518.2 L850.8,511.6 L852.4,516.1 L850.5,522.9ZM835.6,470.6 L838.5,465.1 L840.1,469.5 L837.3,475.2ZM837.3,475.2 L840.1,469.5 L841.7,473.9 L839,479.7ZM839,479.7 L841.7,473.9 L843.4,478.4 L840.7,484.3ZM840.7,484.3 L843.4,478.4 L845,482.8 L842.4,488.8ZM842.4,488.8 L845,482.8 L846.6,487.3 L844,493.4ZM844,493.4 L846.6,487.3 L848.2,491.7 L845.7,497.9ZM845.7,497.9 L848.2,491.7 L849.8,496.1 L847.4,502.5ZM847.4,502.5 L849.8,496.1 L851.4,500.6 L849.1,507ZM849.1,507 L851.4,500.6 L853,505 L850.8,511.6ZM850.8,511.6 L853,505 L854.6,509.5 L852.4,516.1ZM841.7,473.9 L844.8,468.1 L846.3,472.5 L843.4,478.4ZM843.4,478.4 L846.3,472.5 L847.8,476.8 L845,482.8ZM845,482.8 L847.8,476.8 L849.4,481.2 L846.6,487.3ZM846.6,487.3 L849.4,481.2 L850.9,485.5 L848.2,491.7ZM848.2,491.7 L850.9,485.5 L852.4,489.9 L849.8,496.1ZM849.8,496.1 L852.4,489.9 L853.9,494.3 L851.4,500.6ZM851.4,500.6 L853.9,494.3 L855.5,498.6 L853,505ZM853,505 L855.5,498.6 L857,503 L854.6,509.5ZM846.3,472.5 L849.5,466.5 L850.9,470.8 L847.8,476.8ZM847.8,476.8 L850.9,470.8 L852.4,475.1 L849.4,481.2ZM849.4,481.2 L852.4,475.1 L853.8,479.4 L850.9,485.5ZM850.9,485.5 L853.8,479.4 L855.3,483.8 L852.4,489.9ZM852.4,489.9 L855.3,483.8 L856.7,488.1 L853.9,494.3ZM853.9,494.3 L856.7,488.1 L858.1,492.4 L855.5,498.6ZM855.5,498.6 L858.1,492.4 L859.6,496.7 L857,503ZM852.4,475.1 L855.5,469 L856.8,473.3 L853.8,479.4ZM853.8,479.4 L856.8,473.3 L858.2,477.7 L855.3,483.8ZM855.3,483.8 L858.2,477.7 L859.5,482 L856.7,488.1ZM856.7,488.1 L859.5,482 L860.9,486.3 L858.1,492.4ZM858.1,492.4 L860.9,486.3 L862.2,490.6 L859.6,496.7Z" fill="#ffff78"/>
<path d="M754.1,600.4 L759.8,595.3 L762.3,603.7 L756.6,608.9ZM756.6,608.9 L762.3,603.7 L764.9,612.1 L759.2,617.4ZM759.2,617.4 L764.9,612.1 L767.4,620.4 L761.7,625.9ZM757.2,586.9 L762.8,582 L765.4,590.2 L759.8,595.3ZM759.8,595.3 L765.4,590.2 L767.9,598.5 L762.3,603.7ZM767.4,620.4 L773,615.1 L775.5,623.3 L770,628.8ZM770,628.8 L775.5,623.3 L778.1,631.6 L772.5,637.2ZM762.8,582 L768.2,577.1 L770.8,585.3 L765.4,590.2ZM775.5,623.3 L780.9,617.8 L783.4,625.9 L778.1,631.6ZM765.7,569 L771,564.3 L773.5,572.3 L768.2,577.1ZM783.4,625.9 L788.5,620.3 L791,628.3 L785.9,634.1ZM771,564.3 L776.1,559.7 L778.6,567.5 L773.5,572.3ZM788.5,620.3 L793.5,614.6 L796,622.4 L791,628.3ZM776.1,559.7 L781,555.1 L783.5,562.8 L778.6,567.5ZM793.5,614.6 L798.2,608.8 L800.7,616.5 L796,622.4ZM796,622.4 L800.7,616.5 L803.1,624.2 L798.4,630.3ZM798.2,608.8 L802.8,603.1 L805.2,610.6 L800.7,616.5ZM800.7,616.5 L805.2,610.6 L807.6,618.1 L803.1,624.2ZM788.2,558 L792.8,553.1 L795.2,560.5 L790.6,565.5ZM802.8,603.1 L807.2,597.2 L809.5,604.6 L805.2,610.6ZM805.2,610.6 L809.5,604.6 L811.9,612 L807.6,618.1ZM795.2,560.5 L799.5,555.4 L801.9,562.6 L797.6,567.8ZM804.8,589.9 L809,584.2 L811.3,591.4 L807.2,597.2ZM807.2,597.2 L811.3,591.4 L813.7,598.6 L809.5,604.6ZM809.5,604.6 L813.7,598.6 L816.1,605.7 L811.9,612ZM801.9,562.6 L806,557.3 L808.3,564.3 L804.2,569.8ZM804.2,569.8 L808.3,564.3 L810.7,571.3 L806.6,577ZM806.6,577 L810.7,571.3 L813,578.4 L809,584.2ZM809,584.2 L813,578.4 L815.3,585.4 L811.3,591.4ZM811.3,591.4 L815.3,585.4 L817.6,592.4 L813.7,598.6Z" fill="#ffe850"/>
<path d="M762.3,603.7 L767.9,598.5 L770.4,606.8 L764.9,612.1ZM764.9,612.1 L770.4,606.8 L773,615.1 L767.4,620.4ZM765.4,590.2 L770.8,585.3 L773.3,593.4 L767.9,598.5ZM773,615.1 L778.3,609.7 L780.9,617.8 L775.5,623.3ZM768.2,577.1 L773.5,572.3 L776,580.3 L770.8,585.3ZM780.9,617.8 L786,612.3 L788.5,620.3 L783.4,625.9ZM773.5,572.3 L778.6,567.5 L781,575.4 L776,580.3ZM786,612.3 L791,606.7 L793.5,614.6 L788.5,620.3ZM778.6,567.5 L783.5,562.8 L785.9,570.4 L781,575.4ZM791,606.7 L795.8,601.2 L798.2,608.8 L793.5,614.6ZM783.5,562.8 L788.2,558 L790.6,565.5 L785.9,570.4ZM795.8,601.2 L800.4,595.6 L802.8,603.1 L798.2,608.8ZM790.6,565.5 L795.2,560.5 L797.6,567.8 L793.1,573ZM797.9,588 L802.4,582.5 L804.8,589.9 L800.4,595.6ZM800.4,595.6 L804.8,589.9 L807.2,597.2 L802.8,603.1ZM797.6,567.8 L801.9,562.6 L804.2,569.8 L800,575.2ZM800,575.2 L804.2,569.8 L806.6,577 L802.4,582.5ZM802.4,582.5 L806.6,577 L809,584.2 L804.8,589.9Z" fill="#ffd030"/>
<path d="M767.9,598.5 L773.3,593.4 L775.8,601.5 L770.4,606.8ZM770.4,606.8 L775.8,601.5 L778.3,609.7 L773,615.1ZM770.8,585.3 L776,580.3 L778.5,588.3 L773.3,593.4ZM778.3,609.7 L783.5,604.3 L786,612.3 L780.9,617.8ZM783.5,604.3 L788.5,598.9 L791,606.7 L786,612.3ZM785.9,570.4 L790.6,565.5 L793.1,573 L788.4,578.1ZM793.3,593.5 L797.9,588 L800.4,595.6 L795.8,601.2ZM793.1,573 L797.6,567.8 L800,575.2 L795.5,580.5ZM795.5,580.5 L800,575.2 L802.4,582.5 L797.9,588Z" fill="#ffb428"/>
<path d="M773.3,593.4 L778.5,588.3 L781,596.3 L775.8,601.5ZM775.8,601.5 L781,596.3 L783.5,604.3 L778.3,609.7ZM776,580.3 L781,575.4 L783.5,583.2 L778.5,588.3ZM781,575.4 L785.9,570.4 L788.4,578.1 L783.5,583.2ZM788.5,598.9 L793.3,593.5 L795.8,601.2 L791,606.7ZM790.9,585.8 L795.5,580.5 L797.9,588 L793.3,593.5Z" fill="#ffa020"/>
<path d="M778.5,588.3 L783.5,583.2 L786,591.1 L781,596.3ZM783.5,583.2 L788.4,578.1 L790.9,585.8 L786,591.1ZM786,591.1 L790.9,585.8 L793.3,593.5 L788.5,598.9Z" fill="#780000"/>
<path d="M781,596.3 L786,591.1 L788.5,598.9 L783.5,604.3ZM788.4,578.1 L793.1,573 L795.5,580.5 L790.9,585.8Z" fill="#ff6400"/>
<path d="M892.9,370.9 L897,364.4 L897,369.6 L893,376.1ZM893,376.1 L897,369.6 L897,374.9 L893.1,381.3ZM893.1,381.3 L897,374.9 L897,380.1 L893.2,386.4ZM893.2,386.4 L897,380.1 L897,385.3 L893.3,391.6ZM893.3,391.6 L897,385.3 L897,390.6 L893.5,396.8ZM893.5,396.8 L897,390.6 L897,395.8 L893.6,401.9ZM893.6,401.9 L897,395.8 L897,401.1 L893.7,407.1ZM893.7,407.1 L897,401.1 L897,406.3 L893.8,412.2ZM893.8,412.2 L897,406.3 L897,411.5 L893.9,417.4ZM893.9,417.4 L897,411.5 L897,416.8 L894,422.6ZM894,422.6 L897,416.8 L897,422 L894.1,427.7Z" fill="#00ccff"/>
<path d="M425.8,813.3 L432.6,809.1 L439.3,805 L446.1,800.9 L452.8,796.8 L459.6,792.6 L466.3,788.5 L473.1,784.4 L479.7,780.3 L486.3,776.4 L492.8,772.5 L499.3,768.5 L506,764.4 L513,760 L520.2,755.3 L527.7,750.3 L535.2,745.3 L542.9,740.2 L550.7,735.1 L558.5,729.9 L566.4,724.7 L574.3,719.4 L582.2,714.1 L590,708.7 L597.9,703.3 L605.7,697.8 L613.5,692.3 L621.1,686.8 L628.7,681.2 L636.3,675.5 L643.9,669.7 L651.6,663.8 L659.3,657.8 L666.9,651.7 L674.5,645.6 L682.1,639.5 L689.5,633.5 L696.9,627.4 L704.1,621.4 L711.1,615.6 L717.9,609.8 L724.5,604.2 L730.9,598.7 L737.1,593.5 L743.1,588.3 L749,583.4 L754.7,578.5 L760.3,573.7 L765.7,569 L771,564.3 L776.1,559.7 L781,555.1 L785.8,550.4 L790.4,545.8 L794.8,541 L799,536.2 L803.1,531.3 L806.8,526.3 L810.2,521.4 L813.3,516.5 L816.1,511.6 L818.7,506.7 L821.1,501.7 L823.5,496.7 L825.8,491.7 L828.1,486.5 L830.5,481.3 L833,476 L835.6,470.6 L838.5,465.1 L841.7,459.4 L845.2,453.5 L848.8,447.5 L852.5,441.3 L856.3,435 L860.2,428.6 L864.3,422.2 L868.3,415.6 L872.4,409 L876.6,402.4 L880.7,395.8 L884.9,389.2 L889,382.6 L893,376.1 L897,369.6M425.8,822.5 L432.6,818.3 L439.4,814.1 L446.2,809.9 L453,805.6 L459.8,801.4 L466.7,797.2 L473.5,792.9 L480.2,788.8 L486.8,784.8 L493.4,780.8 L500.1,776.7 L506.9,772.5 L513.9,768.1 L521.2,763.3 L528.7,758.4 L536.3,753.4 L544,748.3 L551.8,743.2 L559.7,738 L567.6,732.7 L575.5,727.5 L583.4,722.1 L591.4,716.8 L599.3,711.4 L607.1,705.9 L614.9,700.4 L622.6,694.9 L630.3,689.4 L637.9,683.7 L645.6,678 L653.3,672.1 L661.1,666.2 L668.8,660.2 L676.5,654.2 L684.2,648.1 L691.7,642.1 L699.1,636.1 L706.4,630.2 L713.5,624.3 L720.4,618.6 L727,612.9 L733.4,607.5 L739.6,602.1 L745.6,596.9 L751.5,591.9 L757.2,586.9 L762.8,582 L768.2,577.1 L773.5,572.3 L778.6,567.5 L783.5,562.8 L788.2,558 L792.8,553.1 L797.2,548.2 L801.4,543.2 L805.4,538.1 L809.1,533 L812.4,527.9 L815.5,522.8 L818.2,517.7 L820.8,512.5 L823.2,507.4 L825.5,502.2 L827.7,496.9 L830,491.6 L832.3,486.2 L834.7,480.7 L837.3,475.2 L840.1,469.5 L843.3,463.7 L846.6,457.8 L850.1,451.8 L853.7,445.6 L857.5,439.4 L861.3,433.1 L865.2,426.7 L869.1,420.2 L873.1,413.7 L877.2,407.2 L881.2,400.7 L885.2,394.2 L889.2,387.7 L893.1,381.3 L897,374.9M425.8,831.8 L432.7,827.5 L439.5,823.1 L446.4,818.8 L453.2,814.5 L460.1,810.1 L467,805.8 L473.9,801.5 L480.7,797.3 L487.4,793.1 L494.1,789.1 L500.8,784.9 L507.7,780.7 L514.8,776.2 L522.1,771.4 L529.7,766.4 L537.4,761.4 L545.2,756.3 L553,751.2 L560.9,746 L568.8,740.8 L576.8,735.5 L584.7,730.2 L592.7,724.9 L600.6,719.5 L608.5,714 L616.3,708.6 L624.1,703.1 L631.8,697.5 L639.5,691.9 L647.2,686.2 L655,680.4 L662.9,674.5 L670.7,668.6 L678.5,662.7 L686.2,656.7 L693.8,650.7 L701.3,644.8 L708.7,638.9 L715.9,633.1 L722.8,627.3 L729.5,621.7 L735.9,616.2 L742.1,610.8 L748.2,605.5 L754.1,600.4 L759.8,595.3 L765.4,590.2 L770.8,585.3 L776,580.3 L781,575.4 L785.9,570.4 L790.6,565.5 L795.2,560.5 L799.5,555.4 L803.7,550.3 L807.7,545 L811.4,539.7 L814.7,534.4 L817.6,529.1 L820.4,523.8 L822.9,518.4 L825.2,513 L827.4,507.6 L829.6,502.1 L831.8,496.6 L834.1,491 L836.5,485.4 L839,479.7 L841.7,473.9 L844.8,468.1 L848,462.1 L851.4,456.1 L855,450 L858.6,443.8 L862.3,437.5 L866.1,431.2 L869.9,424.8 L873.8,418.4 L877.7,412 L881.6,405.6 L885.5,399.2 L889.4,392.8 L893.2,386.4 L897,380.1M425.8,841.1 L432.7,836.7 L439.6,832.2 L446.5,827.8 L453.5,823.3 L460.4,818.9 L467.3,814.5 L474.3,810.1 L481.1,805.7 L487.9,801.5 L494.7,797.4 L501.6,793.2 L508.5,788.8 L515.7,784.3 L523.1,779.5 L530.8,774.5 L538.5,769.5 L546.3,764.4 L554.2,759.2 L562.1,754.1 L570,748.8 L578,743.6 L586,738.3 L594,732.9 L602,727.6 L609.9,722.2 L617.8,716.7 L625.6,711.2 L633.3,705.7 L641.1,700.2 L648.9,694.5 L656.8,688.7 L664.7,682.9 L672.6,677.1 L680.5,671.2 L688.3,665.3 L696,659.4 L703.6,653.5 L711,647.6 L718.2,641.8 L725.2,636.1 L732,630.5 L738.4,624.9 L744.7,619.5 L750.7,614.1 L756.6,608.9 L762.3,603.7 L767.9,598.5 L773.3,593.4 L778.5,588.3 L783.5,583.2 L788.4,578.1 L793.1,573 L797.6,567.8 L801.9,562.6 L806,557.3 L810,551.9 L813.6,546.4 L816.9,540.9 L819.8,535.4 L822.5,529.9 L825,524.3 L827.2,518.7 L829.4,513.1 L831.6,507.4 L833.7,501.7 L835.9,495.9 L838.2,490.1 L840.7,484.3 L843.4,478.4 L846.3,472.5 L849.5,466.5 L852.8,460.4 L856.2,454.3 L859.7,448.1 L863.4,441.9 L867,435.7 L870.8,429.4 L874.5,423.1 L878.3,416.8 L882.1,410.5 L885.9,404.2 L889.6,397.9 L893.3,391.6 L897,385.3M425.8,850.4 L432.8,845.8 L439.7,841.3 L446.7,836.7 L453.7,832.2 L460.6,827.6 L467.6,823.1 L474.6,818.6 L481.6,814.2 L488.5,809.9 L495.4,805.7 L502.3,801.4 L509.4,797 L516.6,792.4 L524.1,787.6 L531.8,782.6 L539.6,777.5 L547.4,772.4 L555.3,767.3 L563.3,762.1 L571.3,756.9 L579.3,751.6 L587.3,746.3 L595.3,741 L603.3,735.7 L611.3,730.3 L619.2,724.8 L627.1,719.4 L634.8,713.9 L642.6,708.4 L650.5,702.7 L658.5,697 L666.5,691.3 L674.5,685.5 L682.5,679.7 L690.4,673.8 L698.1,668 L705.8,662.2 L713.3,656.4 L720.6,650.6 L727.7,644.9 L734.4,639.2 L740.9,633.6 L747.2,628.1 L753.3,622.7 L759.2,617.4 L764.9,612.1 L770.4,606.8 L775.8,601.5 L781,596.3 L786,591.1 L790.9,585.8 L795.5,580.5 L800,575.2 L804.2,569.8 L808.3,564.3 L812.3,558.8 L815.9,553.1 L819.1,547.5 L822,541.7 L824.6,536 L827,530.2 L829.3,524.4 L831.4,518.5 L833.5,512.6 L835.6,506.7 L837.7,500.8 L840,494.8 L842.4,488.8 L845,482.8 L847.8,476.8 L850.9,470.8 L854.1,464.7 L857.5,458.6 L860.9,452.5 L864.4,446.3 L868,440.2 L871.6,434 L875.2,427.8 L878.9,421.6 L882.6,415.3 L886.2,409.1 L889.9,402.9 L893.5,396.8 L897,390.6M425.8,859.6 L432.8,855 L439.8,850.3 L446.9,845.7 L453.9,841 L460.9,836.4 L468,831.8 L475,827.2 L482.1,822.7 L489.1,818.3 L496,814 L503.1,809.6 L510.2,805.1 L517.5,800.5 L525.1,795.6 L532.8,790.6 L540.6,785.5 L548.5,780.4 L556.5,775.3 L564.5,770.1 L572.5,764.9 L580.5,759.7 L588.6,754.4 L596.6,749.1 L604.7,743.8 L612.7,738.4 L620.6,733 L628.5,727.6 L636.4,722.1 L644.2,716.6 L652.2,711 L660.2,705.4 L668.3,699.7 L676.4,694 L684.4,688.2 L692.4,682.4 L700.3,676.6 L708,670.9 L715.6,665.1 L723,659.4 L730.1,653.6 L736.9,648 L743.5,642.4 L749.7,636.8 L755.8,631.3 L761.7,625.9 L767.4,620.4 L773,615.1 L778.3,609.7 L783.5,604.3 L788.5,598.9 L793.3,593.5 L797.9,588 L802.4,582.5 L806.6,577 L810.7,571.3 L814.5,565.6 L818.1,559.8 L821.3,554 L824.2,548.1 L826.8,542.1 L829.1,536.1 L831.3,530 L833.4,523.9 L835.4,517.8 L837.5,511.7 L839.5,505.6 L841.7,499.5 L844,493.4 L846.6,487.3 L849.4,481.2 L852.4,475.1 L855.5,469 L858.7,462.9 L862,456.9 L865.4,450.8 L868.9,444.7 L872.4,438.6 L875.9,432.5 L879.5,426.3 L883,420.2 L886.6,414.1 L890.1,408 L893.6,401.9 L897,395.8M425.8,868.9 L432.9,864.2 L440,859.4 L447,854.6 L454.1,849.9 L461.2,845.1 L468.3,840.4 L475.4,835.7 L482.5,831.2 L489.6,826.7 L496.7,822.3 L503.8,817.8 L511.1,813.3 L518.5,808.6 L526.1,803.7 L533.9,798.7 L541.7,793.6 L549.6,788.5 L557.6,783.3 L565.6,778.2 L573.7,773 L581.8,767.7 L589.9,762.5 L597.9,757.2 L606,751.9 L614.1,746.5 L622.1,741.1 L630,735.7 L637.9,730.3 L645.8,724.8 L653.9,719.3 L662,713.7 L670.1,708.1 L678.3,702.4 L686.4,696.7 L694.5,691 L702.4,685.3 L710.3,679.6 L717.9,673.8 L725.3,668.1 L732.5,662.4 L739.4,656.7 L746,651.1 L752.3,645.5 L758.4,639.9 L764.3,634.4 L770,628.8 L775.5,623.3 L780.9,617.8 L786,612.3 L791,606.7 L795.8,601.2 L800.4,595.6 L804.8,589.9 L809,584.2 L813,578.4 L816.8,572.5 L820.4,566.5 L823.5,560.5 L826.4,554.4 L828.9,548.2 L831.2,542 L833.4,535.7 L835.4,529.4 L837.4,523.1 L839.3,516.8 L841.4,510.5 L843.5,504.2 L845.7,497.9 L848.2,491.7 L850.9,485.5 L853.8,479.4 L856.8,473.3 L860,467.3 L863.2,461.2 L866.5,455.2 L869.8,449.2 L873.2,443.1 L876.6,437.1 L880,431.1 L883.5,425.1 L886.9,419.1 L890.3,413.1 L893.7,407.1 L897,401.1M425.8,878.2 L432.9,873.3 L440.1,868.5 L447.2,863.6 L454.3,858.7 L461.4,853.9 L468.6,849.1 L475.8,844.3 L483,839.6 L490.2,835.1 L497.3,830.6 L504.6,826 L511.9,821.4 L519.4,816.7 L527.1,811.8 L534.9,806.7 L542.8,801.6 L550.8,796.5 L558.8,791.4 L566.8,786.2 L574.9,781 L583,775.8 L591.1,770.5 L599.3,765.3 L607.4,760 L615.4,754.6 L623.5,749.3 L631.5,743.9 L639.4,738.5 L647.4,733 L655.5,727.5 L663.7,722 L671.9,716.4 L680.2,710.8 L688.4,705.2 L696.6,699.6 L704.6,693.9 L712.5,688.3 L720.2,682.6 L727.7,676.9 L734.9,671.2 L741.9,665.5 L748.5,659.8 L754.8,654.1 L760.9,648.5 L766.8,642.9 L772.5,637.2 L778.1,631.6 L783.4,625.9 L788.5,620.3 L793.5,614.6 L798.2,608.8 L802.8,603.1 L807.2,597.2 L811.3,591.4 L815.3,585.4 L819.1,579.4 L822.6,573.3 L825.7,567 L828.5,560.7 L831,554.3 L833.3,547.9 L835.4,541.4 L837.4,534.8 L839.3,528.3 L841.2,521.8 L843.2,515.3 L845.2,508.9 L847.4,502.5 L849.8,496.1 L852.4,489.9 L855.3,483.8 L858.2,477.7 L861.2,471.6 L864.3,465.6 L867.5,459.6 L870.7,453.7 L874,447.7 L877.3,441.8 L880.6,435.9 L883.9,430 L887.2,424.1 L890.5,418.2 L893.8,412.2 L897,406.3M425.8,887.5 L433,882.5 L440.2,877.5 L447.3,872.6 L454.5,867.6 L461.7,862.6 L468.9,857.7 L476.2,852.9 L483.5,848.1 L490.7,843.5 L498,838.9 L505.3,834.3 L512.7,829.6 L520.3,824.8 L528,819.9 L535.9,814.8 L543.9,809.7 L551.9,804.6 L559.9,799.4 L568,794.3 L576.1,789.1 L584.3,783.8 L592.4,778.6 L600.6,773.3 L608.7,768.1 L616.8,762.7 L624.9,757.4 L633,752 L640.9,746.6 L649,741.2 L657.2,735.8 L665.4,730.3 L673.7,724.8 L682.1,719.3 L690.4,713.7 L698.6,708.2 L706.7,702.6 L714.7,696.9 L722.5,691.3 L730.1,685.6 L737.4,680 L744.3,674.3 L751,668.5 L757.3,662.8 L763.5,657.1 L769.4,651.4 L775.1,645.6 L780.6,639.9 L785.9,634.1 L791,628.3 L796,622.4 L800.7,616.5 L805.2,610.6 L809.5,604.6 L813.7,598.6 L817.6,592.4 L821.4,586.3 L824.9,580 L828,573.5 L830.7,567 L833.2,560.4 L835.4,553.7 L837.5,547 L839.4,540.3 L841.3,533.6 L843.1,526.8 L845,520.2 L847,513.5 L849.1,507 L851.4,500.6 L853.9,494.3 L856.7,488.1 L859.5,482 L862.5,475.9 L865.5,470 L868.5,464 L871.7,458.2 L874.8,452.3 L878,446.5 L881.2,440.7 L884.4,434.9 L887.6,429.1 L890.8,423.3 L893.9,417.4 L897,411.5M425.8,896.7 L433,891.7 L440.3,886.6 L447.5,881.5 L454.7,876.4 L462,871.4 L469.3,866.4 L476.6,861.4 L484,856.6 L491.3,851.9 L498.7,847.2 L506.1,842.5 L513.6,837.7 L521.2,832.9 L529,827.9 L537,822.8 L544.9,817.7 L553,812.6 L561.1,807.5 L569.2,802.3 L577.4,797.1 L585.5,791.9 L593.7,786.7 L601.9,781.4 L610.1,776.1 L618.2,770.9 L626.3,765.5 L634.4,760.2 L642.5,754.8 L650.6,749.4 L658.8,744 L667.2,738.6 L675.6,733.2 L684,727.7 L692.4,722.2 L700.7,716.7 L708.9,711.2 L717,705.6 L724.8,700 L732.4,694.4 L739.8,688.7 L746.8,683 L753.5,677.3 L759.9,671.5 L766,665.7 L771.9,659.9 L777.6,654 L783.2,648.1 L788.5,642.2 L793.6,636.3 L798.4,630.3 L803.1,624.2 L807.6,618.1 L811.9,612 L816.1,605.7 L820,599.5 L823.7,593.1 L827.1,586.7 L830.2,580.1 L832.9,573.3 L835.3,566.5 L837.5,559.6 L839.5,552.7 L841.4,545.7 L843.2,538.8 L845,531.9 L846.8,525 L848.7,518.2 L850.8,511.6 L853,505 L855.5,498.6 L858.1,492.4 L860.9,486.3 L863.7,480.3 L866.6,474.3 L869.6,468.5 L872.6,462.7 L875.6,456.9 L878.7,451.2 L881.8,445.5 L884.9,439.8 L887.9,434.1 L891,428.3 L894,422.6 L897,416.8M432.5,800 L433.1,900.8M439.2,796 L440.4,895.7M445.9,791.9 L447.6,890.5M452.6,787.9 L454.9,885.3M459.3,783.9 L462.2,880.1M466,779.8 L469.6,875M472.7,775.8 L477,870M479.3,771.8 L484.4,865.1M485.7,768 L491.9,860.2M492.1,764.2 L499.3,855.5M498.6,760.3 L506.8,850.7M505.2,756.2 L514.4,845.9M512,751.9 L522.1,841M519.2,747.2 L530,836M526.6,742.3 L538,830.9M534.2,737.3 L546,825.8M541.8,732.2 L554.1,820.6M549.5,727.1 L562.2,815.5M557.3,721.9 L570.4,810.3M565.1,716.7 L578.6,805.2M573,711.4 L586.8,800M580.9,706 L595,794.7M588.7,700.6 L603.2,789.5M596.5,695.2 L611.4,784.2M604.3,689.7 L619.6,779M612,684.2 L627.8,773.7M619.7,678.6 L635.9,768.3M627.2,673 L644,763M634.7,667.3 L652.2,757.6M642.3,661.5 L660.5,752.3M649.9,655.5 L668.9,746.9M657.4,649.4 L677.4,741.6M665,643.3 L685.9,736.2M672.6,637.1 L694.3,730.8M680,631 L702.8,725.3M687.4,624.8 L711,719.8M694.7,618.7 L719.2,714.3M701.8,612.7 L727.1,708.8M708.7,606.8 L734.8,703.2M715.5,601 L742.2,697.5M722.1,595.4 L749.3,691.8M728.4,590 L756,686M734.5,584.8 L762.4,680.2M740.5,579.7 L768.5,674.3M746.4,574.9 L774.5,668.4M752.1,570.1 L780.2,662.4M757.7,565.4 L785.7,656.4M763.2,560.9 L791,650.3M768.5,556.3 L796.1,644.2M773.6,551.9 L800.9,638.1M778.6,547.4 L805.6,631.9M783.4,542.9 L810.1,625.6M788,538.4 L814.3,619.3M792.4,533.8 L818.4,612.9M796.7,529.2 L822.3,606.5M800.8,524.4 L826,600M804.6,519.6 L829.4,593.4M808,514.9 L832.4,586.6M811.1,510.2 L835.1,579.7M814,505.5 L837.4,572.6M816.6,500.8 L839.6,565.5M819.1,496 L841.5,558.4M821.5,491.3 L843.4,551.2M823.8,486.4 L845.1,544M826.2,481.5 L846.9,536.9M828.6,476.5 L848.6,529.9M831.2,471.3 L850.5,522.9M833.9,466.1 L852.4,516.1M836.9,460.6 L854.6,509.5M840.2,455 L857,503M843.7,449.2 L859.6,496.7M847.4,443.2 L862.2,490.6M851.2,437 L865,484.6M855.2,430.7 L867.8,478.7M859.2,424.2 L870.6,472.9M863.3,417.7 L873.5,467.2M867.5,411 L876.4,461.5M871.7,404.3 L879.4,455.9M876,397.6 L882.3,450.3M880.3,390.9 L885.3,444.7M884.5,384.2 L888.3,439.1M888.7,377.5 L891.2,433.4M892.9,370.9 L894.1,427.7" fill="none" stroke="#000" stroke-width="1" shape-rendering="crispEdges"/>
<path d="M432.5,800 L433.1,900.8M892.9,370.9 L894.1,427.7M512,751.9 L522.1,841M519.2,747.2 L530,836M526.6,742.3 L538,830.9M619.7,678.6 L635.9,768.3M627.2,673 L644,763M634.7,667.3 L652.2,757.6M722.1,595.4 L749.3,691.8M728.4,590 L756,686M734.5,584.8 L762.4,680.2M796.7,529.2 L822.3,606.5M800.8,524.4 L826,600M804.6,519.6 L829.4,593.4M836.9,460.6 L854.6,509.5M840.2,455 L857,503M843.7,449.2 L859.6,496.7" fill="none" stroke="#000" stroke-width="2.6"/>
<path d="M425.8,804 L432.5,800 L439.2,796 L445.9,791.9 L452.6,787.9 L459.3,783.9 L466,779.8 L472.7,775.8 L479.3,771.8 L485.7,768 L492.1,764.2 L498.6,760.3 L505.2,756.2 L512,751.9 L519.2,747.2 L526.6,742.3 L534.2,737.3 L541.8,732.2 L549.5,727.1 L557.3,721.9 L565.1,716.7 L573,711.4 L580.9,706 L588.7,700.6 L596.5,695.2 L604.3,689.7 L612,684.2 L619.7,678.6 L627.2,673 L634.7,667.3 L642.3,661.5 L649.9,655.5 L657.4,649.4 L665,643.3 L672.6,637.1 L680,631 L687.4,624.8 L694.7,618.7 L701.8,612.7 L708.7,606.8 L715.5,601 L722.1,595.4 L728.4,590 L734.5,584.8 L740.5,579.7 L746.4,574.9 L752.1,570.1 L757.7,565.4 L763.2,560.9 L768.5,556.3 L773.6,551.9 L778.6,547.4 L783.4,542.9 L788,538.4 L792.4,533.8 L796.7,529.2 L800.8,524.4 L804.6,519.6 L808,514.9 L811.1,510.2 L814,505.5 L816.6,500.8 L819.1,496 L821.5,491.3 L823.8,486.4 L826.2,481.5 L828.6,476.5 L831.2,471.3 L833.9,466.1 L836.9,460.6 L840.2,455 L843.7,449.2 L847.4,443.2 L851.2,437 L855.2,430.7 L859.2,424.2 L863.3,417.7 L867.5,411 L871.7,404.3 L876,397.6 L880.3,390.9 L884.5,384.2 L888.7,377.5 L892.9,370.9 L897,364.4 L897,422 L894.1,427.7 L891.2,433.4 L888.3,439.1 L885.3,444.7 L882.3,450.3 L879.4,455.9 L876.4,461.5 L873.5,467.2 L870.6,472.9 L867.8,478.7 L865,484.6 L862.2,490.6 L859.6,496.7 L857,503 L854.6,509.5 L852.4,516.1 L850.5,522.9 L848.6,529.9 L846.9,536.9 L845.1,544 L843.4,551.2 L841.5,558.4 L839.6,565.5 L837.4,572.6 L835.1,579.7 L832.4,586.6 L829.4,593.4 L826,600 L822.3,606.5 L818.4,612.9 L814.3,619.3 L810.1,625.6 L805.6,631.9 L800.9,638.1 L796.1,644.2 L791,650.3 L785.7,656.4 L780.2,662.4 L774.5,668.4 L768.5,674.3 L762.4,680.2 L756,686 L749.3,691.8 L742.2,697.5 L734.8,703.2 L727.1,708.8 L719.2,714.3 L711,719.8 L702.8,725.3 L694.3,730.8 L685.9,736.2 L677.4,741.6 L668.9,746.9 L660.5,752.3 L652.2,757.6 L644,763 L635.9,768.3 L627.8,773.7 L619.6,779 L611.4,784.2 L603.2,789.5 L595,794.7 L586.8,800 L578.6,805.2 L570.4,810.3 L562.2,815.5 L554.1,820.6 L546,825.8 L538,830.9 L530,836 L522.1,841 L514.4,845.9 L506.8,850.7 L499.3,855.5 L491.9,860.2 L484.4,865.1 L477,870 L469.6,875 L462.2,880.1 L454.9,885.3 L447.6,890.5 L440.4,895.7 L433.1,900.8 L425.8,906Z" fill="none" stroke="#000" stroke-width="2.6" stroke-linejoin="round"/>
<path d="M455.6,803.7 L461.6,798.6 L467.7,793.5 L473.7,788.4 L479.7,783.2 L485.7,778.1 L491.8,773 L497.8,767.9 L503.7,762.8 L509.5,757.7 L515.2,752.6 L521,747.5 L526.9,742.4 L533.3,737.2 L540,732 L547.1,726.8 L554.4,721.5 L561.8,716.3 L569.3,711.1 L576.9,705.8 L584.6,700.6 L592.3,695.3 L600,690.1 L607.7,684.8 L615.3,679.5 L622.9,674.1 L630.4,668.8 L637.8,663.4 L645,658 L652.1,652.6 L659.2,647.2 L666.3,641.9 L673.4,636.5 L680.4,631.2 L687.3,625.8 L694.2,620.4 L701,614.9 L707.7,609.3 L714.4,603.7 L720.9,598 L727.4,592.1 L733.8,586.1 L740,580 L746.2,573.7 L752.3,567.1 L758.3,560.4 L764.3,553.5 L770.3,546.5 L776.1,539.4 L781.8,532.3 L787.4,525.2 L792.9,518.1 L798.3,511 L803.4,504 L808.5,497.2 L813.3,490.5 L818,484 L822.4,477.7 L826.6,471.4 L830.5,465.2 L834.2,459.1 L837.8,453.1 L841.2,447.2 L844.5,441.2 L847.8,435.4 L851,429.6 L854.2,423.8 L857.5,418.1 L860.9,412.4 L864.4,406.7 L868,401 L871.7,395.4 L875.5,389.8 L879.3,384.3 L883.1,378.8 L887,373.3 L890.9,367.9 L894.8,362.6 L898.6,357.2 L902.6,351.9 L906.5,346.5 L910.4,341.2 L914.3,335.8 L918.1,330.4 L922,325 L922,342 L918.3,347.1 L914.5,352.1 L910.8,357.1 L907,362.1 L903.3,367 L899.5,372 L895.8,376.9 L892,382 L888.3,387 L884.6,392.2 L880.9,397.4 L877.2,402.8 L873.6,408.3 L870,414 L866.5,419.8 L863.2,425.8 L860.1,431.9 L857,438 L854,444.3 L850.9,450.7 L847.9,457.1 L844.7,463.6 L841.5,470.1 L838.1,476.7 L834.5,483.3 L830.6,489.9 L826.5,496.4 L822,503 L817.2,509.6 L812.2,516.3 L806.9,523.1 L801.4,530 L795.7,536.9 L789.8,543.8 L783.8,550.7 L777.7,557.6 L771.5,564.4 L765.2,571.2 L758.9,577.8 L752.6,584.4 L746.3,590.8 L740,597 L733.7,603.1 L727.4,609 L720.9,614.9 L714.5,620.7 L707.9,626.3 L701.3,631.9 L694.7,637.4 L688,642.9 L681.3,648.3 L674.5,653.7 L667.7,659 L660.8,664.4 L653.9,669.7 L647,675 L640,680.3 L632.9,685.5 L625.8,690.6 L618.6,695.6 L611.3,700.7 L604,705.7 L596.7,710.6 L589.3,715.6 L582,720.6 L574.7,725.5 L567.4,730.6 L560.2,735.7 L553.1,740.8 L546,746 L539.1,751.3 L532.3,756.9 L525.7,762.5 L519.1,768.2 L512.6,773.9 L506.1,779.6 L499.5,785.3 L492.9,790.9 L486.2,796.5 L479.6,802.1 L472.9,807.7 L466.3,813.3 L459.6,818.9 L453,824.5Z" fill="#e0ffe8"/>
<path d="M455.6,803.7 L461.6,798.6 L460.6,808.7 L454.3,814.1ZM454.3,814.1 L460.6,808.7 L459.6,818.9 L453,824.5Z" fill="#ffe850"/>
<path d="M906.5,346.5 L910.4,341.2 L910.6,349.1 L906.7,354.3ZM906.7,354.3 L910.6,349.1 L910.8,357.1 L907,362.1ZM910.4,341.2 L914.3,335.8 L914.4,344 L910.6,349.1ZM910.6,349.1 L914.4,344 L914.5,352.1 L910.8,357.1ZM914.3,335.8 L918.1,330.4 L918.2,338.8 L914.4,344ZM914.4,344 L918.2,338.8 L918.3,347.1 L914.5,352.1ZM918.1,330.4 L922,325 L922,333.5 L918.2,338.8ZM918.2,338.8 L922,333.5 L922,342 L918.3,347.1Z" fill="#ffff78"/>
<path d="M454.3,814.1 L460.6,808.7 L467,803.4 L473.3,798 L479.6,792.7 L486,787.3 L492.3,782 L498.6,776.6 L504.9,771.2 L511,765.8 L517.2,760.4 L523.3,755 L529.6,749.6 L536.2,744.3 L543,739 L550.1,733.8 L557.3,728.6 L564.6,723.4 L572,718.3 L579.5,713.2 L586.9,708.1 L594.5,703 L602,697.9 L609.5,692.7 L616.9,687.6 L624.4,682.4 L631.7,677.1 L638.9,671.8 L646,666.5 L653,661.1 L660,655.8 L667,650.5 L673.9,645.1 L680.8,639.7 L687.7,634.3 L694.4,628.9 L701.2,623.4 L707.8,617.8 L714.4,612.2 L720.9,606.4 L727.4,600.6 L733.7,594.6 L740,588.5 L746.2,582.2 L752.4,575.7 L758.6,569.1 L764.8,562.3 L770.9,555.5 L776.9,548.5 L782.8,541.5 L788.6,534.5 L794.3,527.5 L799.8,520.5 L805.2,513.6 L810.3,506.7 L815.3,500 L820,493.5 L824.4,487.1 L828.6,480.6 L832.5,474.3 L836.1,467.9 L839.6,461.6 L843,455.4 L846.2,449.2 L849.3,443 L852.5,437 L855.6,430.9 L858.8,425 L862.1,419.1 L865.5,413.3 L869,407.5 L872.7,401.8 L876.4,396.3 L880.1,390.8 L883.9,385.5 L887.6,380.2 L891.4,374.9 L895.2,369.8 L899.1,364.6 L902.9,359.4 L906.7,354.3 L910.6,349.1 L914.4,344 L918.2,338.8 L922,333.5M461.6,798.6 L459.6,818.9M467.7,793.5 L466.3,813.3M473.7,788.4 L472.9,807.7M479.7,783.2 L479.6,802.1M485.7,778.1 L486.2,796.5M491.8,773 L492.9,790.9M497.8,767.9 L499.5,785.3M503.7,762.8 L506.1,779.6M509.5,757.7 L512.6,773.9M515.2,752.6 L519.1,768.2M521,747.5 L525.7,762.5M526.9,742.4 L532.3,756.9M533.3,737.2 L539.1,751.3M540,732 L546,746M547.1,726.8 L553.1,740.8M554.4,721.5 L560.2,735.7M561.8,716.3 L567.4,730.6M569.3,711.1 L574.7,725.5M576.9,705.8 L582,720.6M584.6,700.6 L589.3,715.6M592.3,695.3 L596.7,710.6M600,690.1 L604,705.7M607.7,684.8 L611.3,700.7M615.3,679.5 L618.6,695.6M622.9,674.1 L625.8,690.6M630.4,668.8 L632.9,685.5M637.8,663.4 L640,680.3M645,658 L647,675M652.1,652.6 L653.9,669.7M659.2,647.2 L660.8,664.4M666.3,641.9 L667.7,659M673.4,636.5 L674.5,653.7M680.4,631.2 L681.3,648.3M687.3,625.8 L688,642.9M694.2,620.4 L694.7,637.4M701,614.9 L701.3,631.9M707.7,609.3 L707.9,626.3M714.4,603.7 L714.5,620.7M720.9,598 L720.9,614.9M727.4,592.1 L727.4,609M733.8,586.1 L733.7,603.1M740,580 L740,597M746.2,573.7 L746.3,590.8M752.3,567.1 L752.6,584.4M758.3,560.4 L758.9,577.8M764.3,553.5 L765.2,571.2M770.3,546.5 L771.5,564.4M776.1,539.4 L777.7,557.6M781.8,532.3 L783.8,550.7M787.4,525.2 L789.8,543.8M792.9,518.1 L795.7,536.9M798.3,511 L801.4,530M803.4,504 L806.9,523.1M808.5,497.2 L812.2,516.3M813.3,490.5 L817.2,509.6M818,484 L822,503M822.4,477.7 L826.5,496.4M826.6,471.4 L830.6,489.9M830.5,465.2 L834.5,483.3M834.2,459.1 L838.1,476.7M837.8,453.1 L841.5,470.1M841.2,447.2 L844.7,463.6M844.5,441.2 L847.9,457.1M847.8,435.4 L850.9,450.7M851,429.6 L854,444.3M854.2,423.8 L857,438M857.5,418.1 L860.1,431.9M860.9,412.4 L863.2,425.8M864.4,406.7 L866.5,419.8M868,401 L870,414M871.7,395.4 L873.6,408.3M875.5,389.8 L877.2,402.8M879.3,384.3 L880.9,397.4M883.1,378.8 L884.6,392.2M887,373.3 L888.3,387M890.9,367.9 L892,382M894.8,362.6 L895.8,376.9M898.6,357.2 L899.5,372M902.6,351.9 L903.3,367M906.5,346.5 L907,362.1M910.4,341.2 L910.8,357.1M914.3,335.8 L914.5,352.1M918.1,330.4 L918.3,347.1" fill="none" stroke="#000" stroke-width="1" shape-rendering="crispEdges"/>
<path d="M461.6,798.6 L459.6,818.9M918.1,330.4 L918.3,347.1M533.3,737.2 L539.1,751.3M540,732 L546,746M547.1,726.8 L553.1,740.8M637.8,663.4 L640,680.3M645,658 L647,675M652.1,652.6 L653.9,669.7M733.8,586.1 L733.7,603.1M740,580 L740,597M746.2,573.7 L746.3,590.8M813.3,490.5 L817.2,509.6M818,484 L822,503M822.4,477.7 L826.5,496.4M864.4,406.7 L866.5,419.8M868,401 L870,414M871.7,395.4 L873.6,408.3" fill="none" stroke="#000" stroke-width="2.6"/>
<path d="M455.6,803.7 L461.6,798.6 L467.7,793.5 L473.7,788.4 L479.7,783.2 L485.7,778.1 L491.8,773 L497.8,767.9 L503.7,762.8 L509.5,757.7 L515.2,752.6 L521,747.5 L526.9,742.4 L533.3,737.2 L540,732 L547.1,726.8 L554.4,721.5 L561.8,716.3 L569.3,711.1 L576.9,705.8 L584.6,700.6 L592.3,695.3 L600,690.1 L607.7,684.8 L615.3,679.5 L622.9,674.1 L630.4,668.8 L637.8,663.4 L645,658 L652.1,652.6 L659.2,647.2 L666.3,641.9 L673.4,636.5 L680.4,631.2 L687.3,625.8 L694.2,620.4 L701,614.9 L707.7,609.3 L714.4,603.7 L720.9,598 L727.4,592.1 L733.8,586.1 L740,580 L746.2,573.7 L752.3,567.1 L758.3,560.4 L764.3,553.5 L770.3,546.5 L776.1,539.4 L781.8,532.3 L787.4,525.2 L792.9,518.1 L798.3,511 L803.4,504 L808.5,497.2 L813.3,490.5 L818,484 L822.4,477.7 L826.6,471.4 L830.5,465.2 L834.2,459.1 L837.8,453.1 L841.2,447.2 L844.5,441.2 L847.8,435.4 L851,429.6 L854.2,423.8 L857.5,418.1 L860.9,412.4 L864.4,406.7 L868,401 L871.7,395.4 L875.5,389.8 L879.3,384.3 L883.1,378.8 L887,373.3 L890.9,367.9 L894.8,362.6 L898.6,357.2 L902.6,351.9 L906.5,346.5 L910.4,341.2 L914.3,335.8 L918.1,330.4 L922,325 L922,342 L918.3,347.1 L914.5,352.1 L910.8,357.1 L907,362.1 L903.3,367 L899.5,372 L895.8,376.9 L892,382 L888.3,387 L884.6,392.2 L880.9,397.4 L877.2,402.8 L873.6,408.3 L870,414 L866.5,419.8 L863.2,425.8 L860.1,431.9 L857,438 L854,444.3 L850.9,450.7 L847.9,457.1 L844.7,463.6 L841.5,470.1 L838.1,476.7 L834.5,483.3 L830.6,489.9 L826.5,496.4 L822,503 L817.2,509.6 L812.2,516.3 L806.9,523.1 L801.4,530 L795.7,536.9 L789.8,543.8 L783.8,550.7 L777.7,557.6 L771.5,564.4 L765.2,571.2 L758.9,577.8 L752.6,584.4 L746.3,590.8 L740,597 L733.7,603.1 L727.4,609 L720.9,614.9 L714.5,620.7 L707.9,626.3 L701.3,631.9 L694.7,637.4 L688,642.9 L681.3,648.3 L674.5,653.7 L667.7,659 L660.8,664.4 L653.9,669.7 L647,675 L640,680.3 L632.9,685.5 L625.8,690.6 L618.6,695.6 L611.3,700.7 L604,705.7 L596.7,710.6 L589.3,715.6 L582,720.6 L574.7,725.5 L567.4,730.6 L560.2,735.7 L553.1,740.8 L546,746 L539.1,751.3 L532.3,756.9 L525.7,762.5 L519.1,768.2 L512.6,773.9 L506.1,779.6 L499.5,785.3 L492.9,790.9 L486.2,796.5 L479.6,802.1 L472.9,807.7 L466.3,813.3 L459.6,818.9 L453,824.5Z" fill="none" stroke="#000" stroke-width="2.6" stroke-linejoin="round"/>
<path d="M378,789.5 L385,783.7 L392,777.8 L399,771.9 L406,766 L413,760.2 L420,754.5 L427,749 L433.9,743.7 L440.7,738.7 L447.5,733.7 L454.3,728.9 L461.3,724 L468.5,719.1 L476,714 L483.8,708.8 L491.7,703.6 L499.7,698.4 L507.9,693.1 L516.1,687.8 L524.4,682.5 L532.7,677.2 L540.9,672 L549.1,666.7 L557.2,661.5 L565.2,656.3 L573,651.1 L580.6,646 L588,641 L595.3,636.1 L602.4,631.3 L609.5,626.5 L616.6,621.9 L623.5,617.3 L630.3,612.7 L637,608.1 L643.6,603.5 L650,598.9 L656.3,594.1 L662.5,589.3 L668.5,584.4 L674.3,579.3 L680,574 L685.5,568.6 L690.8,563.1 L696,557.5 L701,551.7 L705.8,545.9 L710.5,540.1 L715.1,534.1 L719.6,528.1 L723.9,522 L728.1,515.9 L732.2,509.7 L736.3,503.5 L740.2,497.3 L744,491 L747.6,484.7 L751,478.2 L754.1,471.7 L757,465.2 L759.8,458.5 L762.4,451.8 L765.1,445.1 L767.7,438.4 L770.4,431.6 L773.1,424.9 L776,418.1 L779.1,411.4 L782.4,404.7 L786,398 L789.9,391.4 L793.9,384.7 L798.1,378.1 L802.5,371.4 L807,364.8 L811.5,358.1 L816.2,351.5 L820.9,344.9 L825.6,338.2 L830.4,331.6 L835.1,324.9 L839.8,318.3 L844.5,311.6 L849,305 L922,325 L918.1,330.4 L914.3,335.8 L910.4,341.2 L906.5,346.5 L902.6,351.9 L898.6,357.2 L894.8,362.6 L890.9,367.9 L887,373.3 L883.1,378.8 L879.3,384.3 L875.5,389.8 L871.7,395.4 L868,401 L864.4,406.7 L860.9,412.4 L857.5,418.1 L854.2,423.8 L851,429.6 L847.8,435.4 L844.5,441.2 L841.2,447.2 L837.8,453.1 L834.2,459.1 L830.5,465.2 L826.6,471.4 L822.4,477.7 L818,484 L813.3,490.5 L808.5,497.2 L803.4,504 L798.3,511 L792.9,518.1 L787.4,525.2 L781.8,532.3 L776.1,539.4 L770.3,546.5 L764.3,553.5 L758.3,560.4 L752.3,567.1 L746.2,573.7 L740,580 L733.8,586.1 L727.4,592.1 L720.9,598 L714.4,603.7 L707.7,609.3 L701,614.9 L694.2,620.4 L687.3,625.8 L680.4,631.2 L673.4,636.5 L666.3,641.9 L659.2,647.2 L652.1,652.6 L645,658 L637.8,663.4 L630.4,668.8 L622.9,674.1 L615.3,679.5 L607.7,684.8 L600,690.1 L592.3,695.3 L584.6,700.6 L576.9,705.8 L569.3,711.1 L561.8,716.3 L554.4,721.5 L547.1,726.8 L540,732 L533.3,737.2 L526.9,742.4 L521,747.5 L515.2,752.6 L509.5,757.7 L503.7,762.8 L497.8,767.9 L491.8,773 L485.7,778.1 L479.7,783.2 L473.7,788.4 L467.7,793.5 L461.6,798.6 L455.6,803.7Z" fill="#e0ffe8"/>
<path d="M378,789.5 L385,783.7 L395.9,785.8 L389.1,791.5ZM389.1,791.5 L395.9,785.8 L406.9,787.9 L400.2,793.6ZM400.2,793.6 L406.9,787.9 L417.8,790.1 L411.3,795.6ZM839.8,318.3 L844.5,311.6 L855,314.3 L850.4,320.8ZM850.4,320.8 L855,314.3 L865.5,317 L861.1,323.3ZM861.1,323.3 L865.5,317 L876,319.7 L871.7,325.8ZM903.6,333.3 L907.6,327.7 L918.1,330.4 L914.3,335.8ZM876,319.7 L880.3,313.6 L890.7,316.4 L886.6,322.4Z" fill="#ffe850"/>
<path d="M411.3,795.6 L417.8,790.1 L428.8,792.2 L422.3,797.6ZM385,783.7 L392,777.8 L402.8,780 L395.9,785.8ZM395.9,785.8 L402.8,780 L413.6,782.3 L406.9,787.9ZM761.1,546.4 L766.7,539.5 L776.1,539.4 L770.3,546.5ZM757.4,539.6 L762.8,532.8 L772.3,532.6 L766.7,539.5ZM766.7,539.5 L772.3,532.6 L781.8,532.3 L776.1,539.4ZM753.2,533.1 L758.3,526.4 L768,526 L762.8,532.8ZM762.8,532.8 L768,526 L777.7,525.6 L772.3,532.6ZM772.3,532.6 L777.7,525.6 L787.4,525.2 L781.8,532.3ZM748.7,526.9 L753.5,520.3 L763.3,519.8 L758.3,526.4ZM758.3,526.4 L763.3,519.8 L773.2,519.2 L768,526ZM768,526 L773.2,519.2 L783.1,518.6 L777.7,525.6ZM777.7,525.6 L783.1,518.6 L792.9,518.1 L787.4,525.2ZM753.5,520.3 L758.2,513.8 L768.2,513.1 L763.3,519.8ZM763.3,519.8 L768.2,513.1 L778.2,512.4 L773.2,519.2ZM773.2,519.2 L778.2,512.4 L788.2,511.7 L783.1,518.6ZM783.1,518.6 L788.2,511.7 L798.3,511 L792.9,518.1ZM758.2,513.8 L762.8,507.3 L772.9,506.5 L768.2,513.1ZM768.2,513.1 L772.9,506.5 L783.1,505.7 L778.2,512.4ZM778.2,512.4 L783.1,505.7 L793.3,504.9 L788.2,511.7ZM762.8,507.3 L767.2,500.8 L777.5,499.9 L772.9,506.5ZM835.1,324.9 L839.8,318.3 L850.4,320.8 L845.9,327.2ZM871.7,325.8 L876,319.7 L886.6,322.4 L882.4,328.3ZM882.4,328.3 L886.6,322.4 L897.1,325 L893,330.8ZM893,330.8 L897.1,325 L907.6,327.7 L903.6,333.3ZM886.6,322.4 L890.7,316.4 L901.1,319.3 L897.1,325ZM897.1,325 L901.1,319.3 L911.6,322.1 L907.6,327.7Z" fill="#80ffff"/>
<path d="M422.3,797.6 L428.8,792.2 L439.7,794.3 L433.4,799.6ZM433.4,799.6 L439.7,794.3 L450.7,796.5 L444.5,801.7ZM444.5,801.7 L450.7,796.5 L461.6,798.6 L455.6,803.7ZM907.6,327.7 L911.6,322.1 L922,325 L918.1,330.4Z" fill="#40e0ff"/>
<path d="M719.1,552.2 L724.2,546.1 L733.4,546.2 L728.1,552.5ZM728.1,552.5 L733.4,546.2 L742.6,546.3 L737.2,552.7ZM737.2,552.7 L742.6,546.3 L751.8,546.3 L746.2,553ZM715,546 L719.9,540 L729.3,539.9 L724.2,546.1ZM724.2,546.1 L729.3,539.9 L738.6,539.8 L733.4,546.2ZM733.4,546.2 L738.6,539.8 L748,539.7 L742.6,546.3ZM742.6,546.3 L748,539.7 L757.4,539.6 L751.8,546.3ZM710.5,540.1 L715.1,534.1 L724.7,533.9 L719.9,540ZM719.9,540 L724.7,533.9 L734.2,533.6 L729.3,539.9ZM729.3,539.9 L734.2,533.6 L743.7,533.3 L738.6,539.8ZM738.6,539.8 L743.7,533.3 L753.2,533.1 L748,539.7ZM715.1,534.1 L719.6,528.1 L729.3,527.7 L724.7,533.9ZM724.7,533.9 L729.3,527.7 L739,527.3 L734.2,533.6ZM734.2,533.6 L739,527.3 L748.7,526.9 L743.7,533.3ZM743.7,533.3 L748.7,526.9 L758.3,526.4 L753.2,533.1ZM719.6,528.1 L723.9,522 L733.8,521.5 L729.3,527.7ZM729.3,527.7 L733.8,521.5 L743.6,520.9 L739,527.3ZM739,527.3 L743.6,520.9 L753.5,520.3 L748.7,526.9ZM723.9,522 L728.1,515.9 L738.2,515.2 L733.8,521.5ZM733.8,521.5 L738.2,515.2 L748.2,514.5 L743.6,520.9ZM728.1,515.9 L732.2,509.7 L742.4,508.9 L738.2,515.2Z" fill="#ffff78"/>
<path d="M844.5,311.6 L849,305 L859.4,307.9 L855,314.3ZM855,314.3 L859.4,307.9 L869.9,310.7 L865.5,317ZM865.5,317 L869.9,310.7 L880.3,313.6 L876,319.7Z" fill="#ffb428"/>
<path d="M389.1,791.5 L395.9,785.8 L402.8,780 L409.7,774.2 L416.5,768.4 L423.4,762.7 L430.3,757.1 L437.1,751.7 L443.9,746.5 L450.5,741.4 L457.2,736.4 L463.9,731.5 L470.7,726.6 L477.8,721.6 L485.1,716.6 L492.8,711.4 L500.6,706.2 L508.6,700.9 L516.7,695.7 L524.8,690.4 L533,685.1 L541.2,679.8 L549.3,674.6 L557.5,669.3 L565.5,664 L573.4,658.8 L581.2,653.7 L588.8,648.5 L596.1,643.4 L603.4,638.4 L610.6,633.5 L617.7,628.7 L624.7,624 L631.6,619.3 L638.4,614.6 L645.2,609.9 L651.8,605.1 L658.3,600.4 L664.6,595.5 L670.8,590.5 L676.9,585.5 L682.8,580.2 L688.6,574.9 L694.2,569.3 L699.6,563.6 L704.9,557.9 L710,552 L715,546 L719.9,540 L724.7,533.9 L729.3,527.7 L733.8,521.5 L738.2,515.2 L742.4,508.9 L746.6,502.6 L750.6,496.3 L754.6,490 L758.3,483.7 L761.8,477.3 L765,470.8 L768,464.3 L770.9,457.8 L773.7,451.2 L776.4,444.6 L779.1,438 L781.9,431.3 L784.7,424.7 L787.7,418.1 L790.8,411.5 L794.1,405 L797.7,398.4 L801.6,391.9 L805.6,385.4 L809.7,379 L814,372.5 L818.4,366 L822.9,359.5 L827.4,353.1 L832,346.6 L836.6,340.2 L841.3,333.7 L845.9,327.2 L850.4,320.8 L855,314.3 L859.4,307.9M400.2,793.6 L406.9,787.9 L413.6,782.3 L420.3,776.6 L427.1,770.9 L433.8,765.3 L440.5,759.8 L447.2,754.4 L453.9,749.2 L460.4,744.1 L466.8,739.1 L473.4,734.2 L480.1,729.2 L487,724.2 L494.3,719.1 L501.9,714 L509.6,708.7 L517.5,703.5 L525.4,698.2 L533.5,693 L541.6,687.7 L549.7,682.4 L557.8,677.1 L565.8,671.9 L573.8,666.6 L581.7,661.4 L589.4,656.2 L596.9,651 L604.3,645.9 L611.5,640.8 L618.7,635.8 L625.8,630.9 L632.8,626.1 L639.7,621.3 L646.6,616.4 L653.3,611.6 L660,606.8 L666.5,601.9 L672.9,596.9 L679.2,591.8 L685.3,586.6 L691.3,581.2 L697.1,575.7 L702.8,570 L708.4,564.2 L713.8,558.3 L719.1,552.2 L724.2,546.1 L729.3,539.9 L734.2,533.6 L739,527.3 L743.6,520.9 L748.2,514.5 L752.6,508.1 L756.9,501.7 L761.1,495.3 L765.1,489 L769,482.7 L772.6,476.3 L775.9,469.9 L779.1,463.4 L782,457 L784.9,450.5 L787.8,444 L790.6,437.5 L793.4,431 L796.3,424.6 L799.3,418.1 L802.5,411.7 L805.8,405.2 L809.4,398.9 L813.2,392.5 L817.2,386.2 L821.3,379.8 L825.5,373.5 L829.8,367.2 L834.2,360.9 L838.6,354.7 L843.1,348.4 L847.6,342.1 L852.1,335.8 L856.6,329.6 L861.1,323.3 L865.5,317 L869.9,310.7M411.3,795.6 L417.8,790.1 L424.4,784.5 L431,778.9 L437.6,773.4 L444.2,767.9 L450.8,762.4 L457.3,757.1 L463.8,751.9 L470.2,746.8 L476.5,741.8 L482.9,736.8 L489.4,731.9 L496.3,726.8 L503.4,721.7 L510.9,716.5 L518.5,711.3 L526.3,706.1 L534.2,700.8 L542.2,695.6 L550.2,690.3 L558.2,685 L566.2,679.7 L574.2,674.5 L582.1,669.2 L589.9,663.9 L597.6,658.7 L605.1,653.5 L612.4,648.3 L619.6,643.2 L626.8,638.1 L633.9,633.1 L640.9,628.2 L647.9,623.2 L654.7,618.3 L661.5,613.4 L668.2,608.4 L674.8,603.4 L681.2,598.2 L687.5,593 L693.7,587.7 L699.8,582.2 L705.7,576.6 L711.5,570.8 L717.2,564.8 L722.7,558.7 L728.1,552.5 L733.4,546.2 L738.6,539.8 L743.7,533.3 L748.7,526.9 L753.5,520.3 L758.2,513.8 L762.8,507.3 L767.2,500.8 L771.5,494.4 L775.7,488 L779.7,481.7 L783.4,475.3 L786.8,468.9 L790.1,462.6 L793.2,456.2 L796.2,449.8 L799.1,443.5 L802,437.1 L804.9,430.8 L807.9,424.4 L810.9,418.1 L814.1,411.8 L817.5,405.5 L821.1,399.3 L824.9,393.1 L828.9,386.9 L832.9,380.7 L837,374.6 L841.3,368.5 L845.5,362.3 L849.9,356.2 L854.2,350.1 L858.6,344.1 L863,338 L867.4,331.9 L871.7,325.8 L876,319.7 L880.3,313.6M422.3,797.6 L428.8,792.2 L435.2,786.7 L441.7,781.3 L448.1,775.8 L454.6,770.4 L461,765.1 L467.5,759.8 L473.8,754.6 L480,749.5 L486.2,744.5 L492.4,739.5 L498.8,734.5 L505.5,729.4 L512.6,724.3 L520,719.1 L527.5,713.9 L535.2,708.6 L543,703.4 L550.9,698.1 L558.8,692.9 L566.7,687.6 L574.7,682.3 L582.6,677 L590.4,671.8 L598.2,666.5 L605.8,661.2 L613.3,656 L620.6,650.7 L627.8,645.5 L634.9,640.4 L642,635.3 L649,630.3 L656,625.2 L662.9,620.2 L669.7,615.1 L676.4,610 L683,604.9 L689.5,599.6 L695.9,594.3 L702.2,588.8 L708.3,583.2 L714.3,577.4 L720.2,571.5 L725.9,565.4 L731.6,559.1 L737.2,552.7 L742.6,546.3 L748,539.7 L753.2,533.1 L758.3,526.4 L763.3,519.8 L768.2,513.1 L772.9,506.5 L777.5,499.9 L782,493.4 L786.3,487 L790.4,480.7 L794.2,474.3 L797.7,468 L801.1,461.7 L804.3,455.4 L807.4,449.2 L810.5,442.9 L813.4,436.7 L816.4,430.5 L819.5,424.3 L822.6,418.1 L825.8,411.9 L829.2,405.8 L832.9,399.7 L836.6,393.6 L840.5,387.6 L844.5,381.6 L848.6,375.6 L852.7,369.7 L856.9,363.7 L861.1,357.8 L865.3,351.9 L869.6,346 L873.9,340.1 L878.1,334.2 L882.4,328.3 L886.6,322.4 L890.7,316.4M433.4,799.6 L439.7,794.3 L446,789 L452.3,783.6 L458.7,778.3 L465,773 L471.3,767.7 L477.6,762.5 L483.8,757.3 L489.8,752.3 L495.8,747.2 L501.9,742.2 L508.2,737.1 L514.8,732 L521.7,726.9 L529,721.6 L536.5,716.4 L544,711.2 L551.8,705.9 L559.5,700.7 L567.4,695.4 L575.2,690.2 L583.1,684.9 L590.9,679.6 L598.7,674.3 L606.4,669 L614,663.7 L621.4,658.4 L628.7,653.1 L635.9,647.9 L643,642.7 L650.1,637.5 L657.1,632.3 L664.1,627.2 L671,622.1 L677.8,616.9 L684.6,611.6 L691.2,606.4 L697.8,601 L704.2,595.5 L710.6,589.9 L716.8,584.2 L722.9,578.3 L728.8,572.2 L734.7,566 L740.5,559.5 L746.2,553 L751.8,546.3 L757.4,539.6 L762.8,532.8 L768,526 L773.2,519.2 L778.2,512.4 L783.1,505.7 L787.8,499 L792.4,492.4 L796.9,486 L801.1,479.7 L805,473.4 L808.7,467.1 L812.1,460.9 L815.5,454.7 L818.7,448.5 L821.8,442.4 L824.9,436.3 L828,430.2 L831.1,424.1 L834.2,418.1 L837.5,412.1 L841,406.1 L844.6,400.1 L848.3,394.2 L852.2,388.3 L856.1,382.5 L860.1,376.7 L864.1,370.9 L868.2,365.1 L872.3,359.4 L876.4,353.7 L880.6,348 L884.7,342.2 L888.9,336.5 L893,330.8 L897.1,325 L901.1,319.3M444.5,801.7 L450.7,796.5 L456.8,791.2 L463,786 L469.2,780.8 L475.4,775.6 L481.5,770.4 L487.7,765.2 L493.7,760.1 L499.6,755 L505.5,749.9 L511.4,744.8 L517.6,739.7 L524,734.6 L530.9,729.4 L538.1,724.2 L545.4,719 L552.9,713.8 L560.5,708.5 L568.2,703.3 L576,698 L583.8,692.8 L591.5,687.5 L599.3,682.2 L607,676.9 L614.7,671.6 L622.2,666.3 L629.6,660.9 L636.9,655.6 L644,650.2 L651.1,644.9 L658.2,639.7 L665.3,634.4 L672.2,629.2 L679.2,623.9 L686,618.6 L692.8,613.3 L699.5,607.9 L706.1,602.3 L712.6,596.7 L719,591 L725.3,585.2 L731.4,579.1 L737.5,572.9 L743.5,566.5 L749.4,560 L755.3,553.3 L761.1,546.4 L766.7,539.5 L772.3,532.6 L777.7,525.6 L783.1,518.6 L788.2,511.7 L793.3,504.9 L798.2,498.1 L802.9,491.5 L807.4,485 L811.7,478.7 L815.8,472.4 L819.6,466.2 L823.2,460 L826.6,453.9 L829.9,447.8 L833.2,441.8 L836.3,435.8 L839.5,429.9 L842.6,424 L845.9,418.1 L849.2,412.2 L852.7,406.4 L856.3,400.6 L860,394.8 L863.8,389.1 L867.7,383.4 L871.6,377.7 L875.6,372.1 L879.5,366.5 L883.5,361 L887.5,355.4 L891.6,349.9 L895.6,344.4 L899.6,338.8 L903.6,333.3 L907.6,327.7 L911.6,322.1M385,783.7 L461.6,798.6M392,777.8 L467.7,793.5M399,771.9 L473.7,788.4M406,766 L479.7,783.2M413,760.2 L485.7,778.1M420,754.5 L491.8,773M427,749 L497.8,767.9M433.9,743.7 L503.7,762.8M440.7,738.7 L509.5,757.7M447.5,733.7 L515.2,752.6M454.3,728.9 L521,747.5M461.3,724 L526.9,742.4M468.5,719.1 L533.3,737.2M476,714 L540,732M483.8,708.8 L547.1,726.8M491.7,703.6 L554.4,721.5M499.7,698.4 L561.8,716.3M507.9,693.1 L569.3,711.1M516.1,687.8 L576.9,705.8M524.4,682.5 L584.6,700.6M532.7,677.2 L592.3,695.3M540.9,672 L600,690.1M549.1,666.7 L607.7,684.8M557.2,661.5 L615.3,679.5M565.2,656.3 L622.9,674.1M573,651.1 L630.4,668.8M580.6,646 L637.8,663.4M588,641 L645,658M595.3,636.1 L652.1,652.6M602.4,631.3 L659.2,647.2M609.5,626.5 L666.3,641.9M616.6,621.9 L673.4,636.5M623.5,617.3 L680.4,631.2M630.3,612.7 L687.3,625.8M637,608.1 L694.2,620.4M643.6,603.5 L701,614.9M650,598.9 L707.7,609.3M656.3,594.1 L714.4,603.7M662.5,589.3 L720.9,598M668.5,584.4 L727.4,592.1M674.3,579.3 L733.8,586.1M680,574 L740,580M685.5,568.6 L746.2,573.7M690.8,563.1 L752.3,567.1M696,557.5 L758.3,560.4M701,551.7 L764.3,553.5M705.8,545.9 L770.3,546.5M710.5,540.1 L776.1,539.4M715.1,534.1 L781.8,532.3M719.6,528.1 L787.4,525.2M723.9,522 L792.9,518.1M728.1,515.9 L798.3,511M732.2,509.7 L803.4,504M736.3,503.5 L808.5,497.2M740.2,497.3 L813.3,490.5M744,491 L818,484M747.6,484.7 L822.4,477.7M751,478.2 L826.6,471.4M754.1,471.7 L830.5,465.2M757,465.2 L834.2,459.1M759.8,458.5 L837.8,453.1M762.4,451.8 L841.2,447.2M765.1,445.1 L844.5,441.2M767.7,438.4 L847.8,435.4M770.4,431.6 L851,429.6M773.1,424.9 L854.2,423.8M776,418.1 L857.5,418.1M779.1,411.4 L860.9,412.4M782.4,404.7 L864.4,406.7M786,398 L868,401M789.9,391.4 L871.7,395.4M793.9,384.7 L875.5,389.8M798.1,378.1 L879.3,384.3M802.5,371.4 L883.1,378.8M807,364.8 L887,373.3M811.5,358.1 L890.9,367.9M816.2,351.5 L894.8,362.6M820.9,344.9 L898.6,357.2M825.6,338.2 L902.6,351.9M830.4,331.6 L906.5,346.5M835.1,324.9 L910.4,341.2M839.8,318.3 L914.3,335.8M844.5,311.6 L918.1,330.4" fill="none" stroke="#000" stroke-width="1" shape-rendering="crispEdges"/>
<path d="M385,783.7 L461.6,798.6M844.5,311.6 L918.1,330.4M468.5,719.1 L533.3,737.2M476,714 L540,732M483.8,708.8 L547.1,726.8M580.6,646 L637.8,663.4M588,641 L645,658M595.3,636.1 L652.1,652.6M674.3,579.3 L733.8,586.1M680,574 L740,580M685.5,568.6 L746.2,573.7M740.2,497.3 L813.3,490.5M744,491 L818,484M747.6,484.7 L822.4,477.7M782.4,404.7 L864.4,406.7M786,398 L868,401M789.9,391.4 L871.7,395.4" fill="none" stroke="#000" stroke-width="2.6"/>
<path d="M378,789.5 L385,783.7 L392,777.8 L399,771.9 L406,766 L413,760.2 L420,754.5 L427,749 L433.9,743.7 L440.7,738.7 L447.5,733.7 L454.3,728.9 L461.3,724 L468.5,719.1 L476,714 L483.8,708.8 L491.7,703.6 L499.7,698.4 L507.9,693.1 L516.1,687.8 L524.4,682.5 L532.7,677.2 L540.9,672 L549.1,666.7 L557.2,661.5 L565.2,656.3 L573,651.1 L580.6,646 L588,641 L595.3,636.1 L602.4,631.3 L609.5,626.5 L616.6,621.9 L623.5,617.3 L630.3,612.7 L637,608.1 L643.6,603.5 L650,598.9 L656.3,594.1 L662.5,589.3 L668.5,584.4 L674.3,579.3 L680,574 L685.5,568.6 L690.8,563.1 L696,557.5 L701,551.7 L705.8,545.9 L710.5,540.1 L715.1,534.1 L719.6,528.1 L723.9,522 L728.1,515.9 L732.2,509.7 L736.3,503.5 L740.2,497.3 L744,491 L747.6,484.7 L751,478.2 L754.1,471.7 L757,465.2 L759.8,458.5 L762.4,451.8 L765.1,445.1 L767.7,438.4 L770.4,431.6 L773.1,424.9 L776,418.1 L779.1,411.4 L782.4,404.7 L786,398 L789.9,391.4 L793.9,384.7 L798.1,378.1 L802.5,371.4 L807,364.8 L811.5,358.1 L816.2,351.5 L820.9,344.9 L825.6,338.2 L830.4,331.6 L835.1,324.9 L839.8,318.3 L844.5,311.6 L849,305 L922,325 L918.1,330.4 L914.3,335.8 L910.4,341.2 L906.5,346.5 L902.6,351.9 L898.6,357.2 L894.8,362.6 L890.9,367.9 L887,373.3 L883.1,378.8 L879.3,384.3 L875.5,389.8 L871.7,395.4 L868,401 L864.4,406.7 L860.9,412.4 L857.5,418.1 L854.2,423.8 L851,429.6 L847.8,435.4 L844.5,441.2 L841.2,447.2 L837.8,453.1 L834.2,459.1 L830.5,465.2 L826.6,471.4 L822.4,477.7 L818,484 L813.3,490.5 L808.5,497.2 L803.4,504 L798.3,511 L792.9,518.1 L787.4,525.2 L781.8,532.3 L776.1,539.4 L770.3,546.5 L764.3,553.5 L758.3,560.4 L752.3,567.1 L746.2,573.7 L740,580 L733.8,586.1 L727.4,592.1 L720.9,598 L714.4,603.7 L707.7,609.3 L701,614.9 L694.2,620.4 L687.3,625.8 L680.4,631.2 L673.4,636.5 L666.3,641.9 L659.2,647.2 L652.1,652.6 L645,658 L637.8,663.4 L630.4,668.8 L622.9,674.1 L615.3,679.5 L607.7,684.8 L600,690.1 L592.3,695.3 L584.6,700.6 L576.9,705.8 L569.3,711.1 L561.8,716.3 L554.4,721.5 L547.1,726.8 L540,732 L533.3,737.2 L526.9,742.4 L521,747.5 L515.2,752.6 L509.5,757.7 L503.7,762.8 L497.8,767.9 L491.8,773 L485.7,778.1 L479.7,783.2 L473.7,788.4 L467.7,793.5 L461.6,798.6 L455.6,803.7Z" fill="none" stroke="#000" stroke-width="2.6" stroke-linejoin="round"/>
<path d="M403,811 L403,819.1 L403,827.1 L403,835.2 L403,843.3 L403,851.3 L403,859.4 L403,867.4 L403,875.5 L403,883.6 L403,891.6 L403,899.7 L425.8,906 L425.8,897.8 L425.8,889.6 L425.8,881.5 L425.8,873.3 L425.8,865.1 L425.8,856.9 L425.8,848.7 L425.8,840.5 L425.8,832.4 L425.8,824.2 L425.8,816Z" fill="#e0ffe8"/>
<path d="M403,811 L403,819.1 L414.4,821.6 L414.4,813.5ZM403,819.1 L403,827.1 L414.4,829.7 L414.4,821.6ZM403,827.1 L403,835.2 L414.4,837.9 L414.4,829.7ZM403,835.2 L403,843.3 L414.4,846 L414.4,837.9ZM403,843.3 L403,851.3 L414.4,854.1 L414.4,846ZM403,851.3 L403,859.4 L414.4,862.2 L414.4,854.1ZM403,859.4 L403,867.4 L414.4,870.4 L414.4,862.2ZM403,867.4 L403,875.5 L414.4,878.5 L414.4,870.4ZM403,875.5 L403,883.6 L414.4,886.6 L414.4,878.5ZM403,883.6 L403,891.6 L414.4,894.7 L414.4,886.6ZM403,891.6 L403,899.7 L414.4,902.9 L414.4,894.7Z" fill="#ffe850"/>
<path d="M414.4,813.5 L414.4,821.6 L425.8,824.2 L425.8,816ZM414.4,821.6 L414.4,829.7 L425.8,832.4 L425.8,824.2ZM414.4,829.7 L414.4,837.9 L425.8,840.5 L425.8,832.4ZM414.4,837.9 L414.4,846 L425.8,848.7 L425.8,840.5ZM414.4,846 L414.4,854.1 L425.8,856.9 L425.8,848.7ZM414.4,854.1 L414.4,862.2 L425.8,865.1 L425.8,856.9ZM414.4,862.2 L414.4,870.4 L425.8,873.3 L425.8,865.1ZM414.4,870.4 L414.4,878.5 L425.8,881.5 L425.8,873.3ZM414.4,878.5 L414.4,886.6 L425.8,889.6 L425.8,881.5ZM414.4,886.6 L414.4,894.7 L425.8,897.8 L425.8,889.6ZM414.4,894.7 L414.4,902.9 L425.8,906 L425.8,897.8Z" fill="#80ffff"/>
<path d="M414.4,813.5 L414.4,821.6 L414.4,829.7 L414.4,837.9 L414.4,846 L414.4,854.1 L414.4,862.2 L414.4,870.4 L414.4,878.5 L414.4,886.6 L414.4,894.7 L414.4,902.9M403,819.1 L425.8,824.2M403,827.1 L425.8,832.4M403,835.2 L425.8,840.5M403,843.3 L425.8,848.7M403,851.3 L425.8,856.9M403,859.4 L425.8,865.1M403,867.4 L425.8,873.3M403,875.5 L425.8,881.5M403,883.6 L425.8,889.6M403,891.6 L425.8,897.8" fill="none" stroke="#000" stroke-width="1" shape-rendering="crispEdges"/>
<path d="M403,811 L403,819.1 L403,827.1 L403,835.2 L403,843.3 L403,851.3 L403,859.4 L403,867.4 L403,875.5 L403,883.6 L403,891.6 L403,899.7 L425.8,906 L425.8,897.8 L425.8,889.6 L425.8,881.5 L425.8,873.3 L425.8,865.1 L425.8,856.9 L425.8,848.7 L425.8,840.5 L425.8,832.4 L425.8,824.2 L425.8,816Z" fill="none" stroke="#000" stroke-width="2.6" stroke-linejoin="round"/>
<path d="M378,789.5 L377.9,798.5 L377.8,807.6 L453,824.5 L454.3,814.1 L455.6,803.7Z" fill="#e0ffe8"/>
<path d="M378,789.5 L377.9,798.5 L389.1,800.8 L389.4,791.6ZM389.4,791.6 L389.1,800.8 L403.1,803.7 L403.6,794.2ZM377.9,798.5 L377.8,807.6 L388.9,810.1 L389.1,800.8ZM389.1,800.8 L388.9,810.1 L402.6,813.2 L403.1,803.7Z" fill="#ffb428"/>
<path d="M403.6,794.2 L403.1,803.7 L414.2,805.9 L414.9,796.2ZM403.1,803.7 L402.6,813.2 L413.5,815.6 L414.2,805.9Z" fill="#ffe850"/>
<path d="M414.9,796.2 L414.2,805.9 L425.3,808.2 L426.1,798.3ZM414.2,805.9 L413.5,815.6 L424.4,818.1 L425.3,808.2Z" fill="#80ffff"/>
<path d="M426.1,798.3 L425.3,808.2 L438.3,810.8 L439.3,800.7ZM439.3,800.7 L438.3,810.8 L454.3,814.1 L455.6,803.7ZM425.3,808.2 L424.4,818.1 L437.2,821 L438.3,810.8ZM438.3,810.8 L437.2,821 L453,824.5 L454.3,814.1Z" fill="#40e0ff"/>
<path d="M389.4,791.6 L389.1,800.8 L388.9,810.1M403.6,794.2 L403.1,803.7 L402.6,813.2M414.9,796.2 L414.2,805.9 L413.5,815.6M426.1,798.3 L425.3,808.2 L424.4,818.1M439.3,800.7 L438.3,810.8 L437.2,821M377.9,798.5 L454.3,814.1" fill="none" stroke="#000" stroke-width="1" shape-rendering="crispEdges"/>
<path d="M378,789.5 L377.9,798.5 L377.8,807.6 L453,824.5 L454.3,814.1 L455.6,803.7Z" fill="none" stroke="#000" stroke-width="2.6" stroke-linejoin="round"/><g transform="translate(0,0)" font-family="Liberation Sans" font-weight="bold" font-size="16.5"><text x="16.5" y="966" fill="#0000ff" textLength="11" lengthAdjust="spacingAndGlyphs">Y</text><text x="38.5" y="951" fill="#ff0000" textLength="9.5" lengthAdjust="spacingAndGlyphs">Z</text><text x="51" y="959" fill="#008000" textLength="11" lengthAdjust="spacingAndGlyphs">X</text><path d="M45.4 973.3L45 957.5M41.5 961.5L45 957.5 48.5 961.5" fill="none" stroke="#ff0000" stroke-width="1.1"/><path d="M45.4 973.3L28.5 968.5M31.5 965.8L28.5 968.5 31.5 972" fill="none" stroke="#0000ff" stroke-width="1.1"/><path d="M45.4 973.3L53.5 963.5M48.5 965L53.5 963.3 53.5 969" fill="none" stroke="#008000" stroke-width="1" stroke-dasharray="2 1"/></g>
</g>
<g clip-path="url(#cr)">
<g font-family="Liberation Serif" font-size="23" fill="#000">
<text x="986.5" y="226.6" fill="#008000" textLength="379.6" lengthAdjust="spacing">Вариант конструирования:Вариант 1</text><text x="986" y="251.7" textLength="454.6" lengthAdjust="spacing">Расчет по усилиям (СП 63.13330.2012/2018)</text><text x="986" y="276.9" textLength="267.9" lengthAdjust="spacing">Единицы измерения - см2</text><text x="986" y="301.7" textLength="197" lengthAdjust="spacing">Шаг, Диаметр - мм</text>
<text x="985.5" y="999" font-size="23" textLength="281" lengthAdjust="spacing">Площадь полной арматуры</text>
<text x="1272.5" y="999" font-size="23" lengthAdjust="spacing">AU1</text>
<text x="1323.75" y="999" font-size="23" lengthAdjust="spacing">AU2</text>
<text x="1375" y="999" font-size="23" lengthAdjust="spacing">AU3</text>
<text x="1426.25" y="999" font-size="23" lengthAdjust="spacing">AU4</text>
<text x="1476" y="999" font-size="23" lengthAdjust="spacing">AS1</text>
<text x="1522.5" y="999" font-size="23" lengthAdjust="spacing">AS2</text>
<text x="1570" y="999" font-size="23" lengthAdjust="spacing">AS3</text>
<text x="1616" y="999" font-size="23" lengthAdjust="spacing">AS4</text>
<text x="1666" y="999" font-size="23" lengthAdjust="spacing">.</text>
<text x="1676" y="999" font-size="23" textLength="176" lengthAdjust="spacing">Несимметричное</text>
<text x="1858.75" y="999" font-size="23" lengthAdjust="spacing">армирование</text>
</g>
<rect x="995.5" y="343" width="11" height="68.4" fill="#7a0000" stroke="#000" stroke-width="1"/>
<rect x="995.5" y="412.9" width="11" height="68.4" fill="#c82c08" stroke="#000" stroke-width="1"/>
<rect x="995.5" y="482.9" width="11" height="68.4" fill="#ff5050" stroke="#000" stroke-width="1"/>
<rect x="995.5" y="552.8" width="11" height="68.4" fill="#ff6400" stroke="#000" stroke-width="1"/>
<rect x="995.5" y="622.8" width="11" height="68.4" fill="#ffa020" stroke="#000" stroke-width="1"/>
<rect x="995.5" y="692.7" width="11" height="68.4" fill="#ffd030" stroke="#000" stroke-width="1"/>
<rect x="995.5" y="762.6" width="11" height="68.4" fill="#ffff60" stroke="#000" stroke-width="1"/>
<rect x="995.5" y="832.6" width="11" height="68.4" fill="#fff8c8" stroke="#000" stroke-width="1"/>
<g font-family="Liberation Serif" font-size="26.5" fill="#000">
<text x="1017.5" y="354.9" textLength="27.5" lengthAdjust="spacing">17</text>
<text x="1017.5" y="424.8" textLength="48.2" lengthAdjust="spacing">15.3</text>
<text x="1017.5" y="494.8" textLength="48.2" lengthAdjust="spacing">13.7</text>
<text x="1017.5" y="564.7" textLength="27.5" lengthAdjust="spacing">12</text>
<text x="1017.5" y="634.6" textLength="48.2" lengthAdjust="spacing">10.4</text>
<text x="1017.5" y="704.6" textLength="48.2" lengthAdjust="spacing">8.78</text>
<text x="1017.5" y="774.5" textLength="48.2" lengthAdjust="spacing">7.15</text>
<text x="1017.5" y="844.5" textLength="48.2" lengthAdjust="spacing">5.52</text>
<text x="1017.5" y="914.4" textLength="48.2" lengthAdjust="spacing">3.88</text>
</g>
<path d="M1105 747 L1617 229" stroke="#fffcc0" stroke-width="2"/>
<path d="M1490 356 L1617 229" stroke="#ffff70" stroke-width="2"/>
<path d="M1108 745 L1151 703" stroke="#ff6a00" stroke-width="8"/>
<path d="M1318 529 L1404 442" stroke="#ffa020" stroke-width="6"/>
<path d="M1404 442 L1489 357" stroke="#ffd840" stroke-width="4"/>
<path d="M1568 270 L1616 229" stroke="#800000" stroke-width="12"/>
<path d="M1109 651 L1187 673 L1187 692 L1160.5 684.5 L1160.5 776.5 L1137.1 769.9 L1137.1 677.9 L1109 670ZM1194 564 L1272 586 L1272 605 L1245.5 597.5 L1245.5 689.5 L1222.1 682.9 L1222.1 590.9 L1194 583ZM1279 477 L1357 499 L1357 518 L1330.5 510.5 L1330.5 602.5 L1307.1 595.9 L1307.1 503.9 L1279 496ZM1364 390 L1442 412 L1442 431 L1415.5 423.5 L1415.5 515.5 L1392.1 508.9 L1392.1 416.9 L1364 409ZM1449 303 L1527 325 L1527 344 L1500.5 336.5 L1500.5 428.5 L1477.1 421.9 L1477.1 329.9 L1449 322ZM1534 216 L1612 238 L1612 257 L1585.5 249.5 L1585.5 341.5 L1562.1 334.9 L1562.1 242.9 L1534 235Z" fill="none" stroke="#808080" stroke-width="3"/><path d="M1350.8,831.8 L1356.8,825.6 L1362.8,819.4 L1368.8,813.2 L1374.8,807 L1380.8,800.9 L1386.8,794.7 L1392.8,788.5 L1398.8,782.3 L1404.8,776.1 L1410.8,769.9 L1416.8,763.8 L1422.8,757.6 L1428.8,751.4 L1434.8,745.2 L1440.8,739 L1446.8,732.8 L1452.8,726.7 L1458.8,720.5 L1464.8,714.3 L1470.8,708.1 L1476.8,701.9 L1482.8,695.7 L1488.8,689.6 L1494.8,683.4 L1500.8,677.2 L1506.8,671 L1512.8,664.8 L1518.8,658.6 L1524.8,652.4 L1530.8,646.3 L1536.8,640.1 L1542.8,633.9 L1548.8,627.7 L1554.8,621.5 L1560.8,615.3 L1566.8,609.2 L1572.8,603 L1578.8,596.8 L1584.8,590.6 L1590.8,584.4 L1596.8,578.2 L1602.8,572.1 L1608.8,565.9 L1614.8,559.7 L1620.8,553.5 L1626.8,547.3 L1632.8,541.1 L1638.8,535 L1644.8,528.8 L1650.8,522.6 L1656.8,516.4 L1662.8,510.2 L1668.8,504 L1674.8,497.9 L1680.8,491.7 L1686.8,485.5 L1692.8,479.3 L1698.8,473.1 L1704.8,466.9 L1710.8,460.8 L1716.8,454.6 L1722.8,448.4 L1728.8,442.2 L1734.8,436 L1740.8,429.8 L1746.8,423.6 L1752.8,417.5 L1758.8,411.3 L1764.8,405.1 L1770.8,398.9 L1776.8,392.7 L1782.8,386.5 L1788.8,380.4 L1794.8,374.2 L1800.8,368 L1806.7,361.8 L1812.7,355.6 L1818.7,349.4 L1824.7,343.3 L1830.7,337.1 L1836.7,330.9 L1842.7,324.7 L1848.7,318.5 L1854.7,312.3 L1854.7,406.3 L1848.7,412.5 L1842.7,418.7 L1836.7,424.9 L1830.7,431.1 L1824.7,437.3 L1818.7,443.4 L1812.7,449.6 L1806.7,455.8 L1800.8,462 L1794.8,468.2 L1788.8,474.4 L1782.8,480.5 L1776.8,486.7 L1770.8,492.9 L1764.8,499.1 L1758.8,505.3 L1752.8,511.5 L1746.8,517.6 L1740.8,523.8 L1734.8,530 L1728.8,536.2 L1722.8,542.4 L1716.8,548.6 L1710.8,554.8 L1704.8,560.9 L1698.8,567.1 L1692.8,573.3 L1686.8,579.5 L1680.8,585.7 L1674.8,591.9 L1668.8,598 L1662.8,604.2 L1656.8,610.4 L1650.8,616.6 L1644.8,622.8 L1638.8,629 L1632.8,635.1 L1626.8,641.3 L1620.8,647.5 L1614.8,653.7 L1608.8,659.9 L1602.8,666.1 L1596.8,672.2 L1590.8,678.4 L1584.8,684.6 L1578.8,690.8 L1572.8,697 L1566.8,703.2 L1560.8,709.3 L1554.8,715.5 L1548.8,721.7 L1542.8,727.9 L1536.8,734.1 L1530.8,740.3 L1524.8,746.4 L1518.8,752.6 L1512.8,758.8 L1506.8,765 L1500.8,771.2 L1494.8,777.4 L1488.8,783.6 L1482.8,789.7 L1476.8,795.9 L1470.8,802.1 L1464.8,808.3 L1458.8,814.5 L1452.8,820.7 L1446.8,826.8 L1440.8,833 L1434.8,839.2 L1428.8,845.4 L1422.8,851.6 L1416.8,857.8 L1410.8,863.9 L1404.8,870.1 L1398.8,876.3 L1392.8,882.5 L1386.8,888.7 L1380.8,894.9 L1374.8,901 L1368.8,907.2 L1362.8,913.4 L1356.8,919.6 L1350.8,925.8Z" fill="#808080"/>
<path d="M1350.8,840.3 L1356.8,834.1 L1362.8,828 L1368.8,821.8 L1374.8,815.6 L1380.8,809.4 L1386.8,803.2 L1392.8,797 L1398.8,790.9 L1404.8,784.7 L1410.8,778.5 L1416.8,772.3 L1422.8,766.1 L1428.8,759.9 L1434.8,753.8 L1440.8,747.6 L1446.8,741.4 L1452.8,735.2 L1458.8,729 L1464.8,722.8 L1470.8,716.6 L1476.8,710.5 L1482.8,704.3 L1488.8,698.1 L1494.8,691.9 L1500.8,685.7 L1506.8,679.5 L1512.8,673.4 L1518.8,667.2 L1524.8,661 L1530.8,654.8 L1536.8,648.6 L1542.8,642.4 L1548.8,636.3 L1554.8,630.1 L1560.8,623.9 L1566.8,617.7 L1572.8,611.5 L1578.8,605.3 L1584.8,599.2 L1590.8,593 L1596.8,586.8 L1602.8,580.6 L1608.8,574.4 L1614.8,568.2 L1620.8,562.1 L1626.8,555.9 L1632.8,549.7 L1638.8,543.5 L1644.8,537.3 L1650.8,531.1 L1656.8,525 L1662.8,518.8 L1668.8,512.6 L1674.8,506.4 L1680.8,500.2 L1686.8,494 L1692.8,487.8 L1698.8,481.7 L1704.8,475.5 L1710.8,469.3 L1716.8,463.1 L1722.8,456.9 L1728.8,450.7 L1734.8,444.6 L1740.8,438.4 L1746.8,432.2 L1752.8,426 L1758.8,419.8 L1764.8,413.6 L1770.8,407.5 L1776.8,401.3 L1782.8,395.1 L1788.8,388.9 L1794.8,382.7 L1800.8,376.5 L1806.7,370.4 L1812.7,364.2 L1818.7,358 L1824.7,351.8 L1830.7,345.6 L1836.7,339.4 L1842.7,333.3 L1848.7,327.1 L1854.7,320.9M1350.8,848.9 L1356.8,842.7 L1362.8,836.5 L1368.8,830.3 L1374.8,824.1 L1380.8,818 L1386.8,811.8 L1392.8,805.6 L1398.8,799.4 L1404.8,793.2 L1410.8,787 L1416.8,780.8 L1422.8,774.7 L1428.8,768.5 L1434.8,762.3 L1440.8,756.1 L1446.8,749.9 L1452.8,743.7 L1458.8,737.6 L1464.8,731.4 L1470.8,725.2 L1476.8,719 L1482.8,712.8 L1488.8,706.6 L1494.8,700.5 L1500.8,694.3 L1506.8,688.1 L1512.8,681.9 L1518.8,675.7 L1524.8,669.5 L1530.8,663.4 L1536.8,657.2 L1542.8,651 L1548.8,644.8 L1554.8,638.6 L1560.8,632.4 L1566.8,626.3 L1572.8,620.1 L1578.8,613.9 L1584.8,607.7 L1590.8,601.5 L1596.8,595.3 L1602.8,589.2 L1608.8,583 L1614.8,576.8 L1620.8,570.6 L1626.8,564.4 L1632.8,558.2 L1638.8,552 L1644.8,545.9 L1650.8,539.7 L1656.8,533.5 L1662.8,527.3 L1668.8,521.1 L1674.8,514.9 L1680.8,508.8 L1686.8,502.6 L1692.8,496.4 L1698.8,490.2 L1704.8,484 L1710.8,477.8 L1716.8,471.7 L1722.8,465.5 L1728.8,459.3 L1734.8,453.1 L1740.8,446.9 L1746.8,440.7 L1752.8,434.6 L1758.8,428.4 L1764.8,422.2 L1770.8,416 L1776.8,409.8 L1782.8,403.6 L1788.8,397.5 L1794.8,391.3 L1800.8,385.1 L1806.7,378.9 L1812.7,372.7 L1818.7,366.5 L1824.7,360.3 L1830.7,354.2 L1836.7,348 L1842.7,341.8 L1848.7,335.6 L1854.7,329.4M1350.8,857.4 L1356.8,851.2 L1362.8,845 L1368.8,838.9 L1374.8,832.7 L1380.8,826.5 L1386.8,820.3 L1392.8,814.1 L1398.8,807.9 L1404.8,801.8 L1410.8,795.6 L1416.8,789.4 L1422.8,783.2 L1428.8,777 L1434.8,770.8 L1440.8,764.7 L1446.8,758.5 L1452.8,752.3 L1458.8,746.1 L1464.8,739.9 L1470.8,733.7 L1476.8,727.6 L1482.8,721.4 L1488.8,715.2 L1494.8,709 L1500.8,702.8 L1506.8,696.6 L1512.8,690.5 L1518.8,684.3 L1524.8,678.1 L1530.8,671.9 L1536.8,665.7 L1542.8,659.5 L1548.8,653.4 L1554.8,647.2 L1560.8,641 L1566.8,634.8 L1572.8,628.6 L1578.8,622.4 L1584.8,616.2 L1590.8,610.1 L1596.8,603.9 L1602.8,597.7 L1608.8,591.5 L1614.8,585.3 L1620.8,579.1 L1626.8,573 L1632.8,566.8 L1638.8,560.6 L1644.8,554.4 L1650.8,548.2 L1656.8,542 L1662.8,535.9 L1668.8,529.7 L1674.8,523.5 L1680.8,517.3 L1686.8,511.1 L1692.8,504.9 L1698.8,498.8 L1704.8,492.6 L1710.8,486.4 L1716.8,480.2 L1722.8,474 L1728.8,467.8 L1734.8,461.7 L1740.8,455.5 L1746.8,449.3 L1752.8,443.1 L1758.8,436.9 L1764.8,430.7 L1770.8,424.5 L1776.8,418.4 L1782.8,412.2 L1788.8,406 L1794.8,399.8 L1800.8,393.6 L1806.7,387.4 L1812.7,381.3 L1818.7,375.1 L1824.7,368.9 L1830.7,362.7 L1836.7,356.5 L1842.7,350.3 L1848.7,344.2 L1854.7,338M1350.8,866 L1356.8,859.8 L1362.8,853.6 L1368.8,847.4 L1374.8,841.2 L1380.8,835 L1386.8,828.9 L1392.8,822.7 L1398.8,816.5 L1404.8,810.3 L1410.8,804.1 L1416.8,797.9 L1422.8,791.8 L1428.8,785.6 L1434.8,779.4 L1440.8,773.2 L1446.8,767 L1452.8,760.8 L1458.8,754.7 L1464.8,748.5 L1470.8,742.3 L1476.8,736.1 L1482.8,729.9 L1488.8,723.7 L1494.8,717.6 L1500.8,711.4 L1506.8,705.2 L1512.8,699 L1518.8,692.8 L1524.8,686.6 L1530.8,680.4 L1536.8,674.3 L1542.8,668.1 L1548.8,661.9 L1554.8,655.7 L1560.8,649.5 L1566.8,643.3 L1572.8,637.2 L1578.8,631 L1584.8,624.8 L1590.8,618.6 L1596.8,612.4 L1602.8,606.2 L1608.8,600.1 L1614.8,593.9 L1620.8,587.7 L1626.8,581.5 L1632.8,575.3 L1638.8,569.1 L1644.8,563 L1650.8,556.8 L1656.8,550.6 L1662.8,544.4 L1668.8,538.2 L1674.8,532 L1680.8,525.9 L1686.8,519.7 L1692.8,513.5 L1698.8,507.3 L1704.8,501.1 L1710.8,494.9 L1716.8,488.7 L1722.8,482.6 L1728.8,476.4 L1734.8,470.2 L1740.8,464 L1746.8,457.8 L1752.8,451.6 L1758.8,445.5 L1764.8,439.3 L1770.8,433.1 L1776.8,426.9 L1782.8,420.7 L1788.8,414.5 L1794.8,408.4 L1800.8,402.2 L1806.7,396 L1812.7,389.8 L1818.7,383.6 L1824.7,377.4 L1830.7,371.3 L1836.7,365.1 L1842.7,358.9 L1848.7,352.7 L1854.7,346.5M1350.8,874.5 L1356.8,868.3 L1362.8,862.1 L1368.8,856 L1374.8,849.8 L1380.8,843.6 L1386.8,837.4 L1392.8,831.2 L1398.8,825 L1404.8,818.9 L1410.8,812.7 L1416.8,806.5 L1422.8,800.3 L1428.8,794.1 L1434.8,787.9 L1440.8,781.8 L1446.8,775.6 L1452.8,769.4 L1458.8,763.2 L1464.8,757 L1470.8,750.8 L1476.8,744.6 L1482.8,738.5 L1488.8,732.3 L1494.8,726.1 L1500.8,719.9 L1506.8,713.7 L1512.8,707.5 L1518.8,701.4 L1524.8,695.2 L1530.8,689 L1536.8,682.8 L1542.8,676.6 L1548.8,670.4 L1554.8,664.3 L1560.8,658.1 L1566.8,651.9 L1572.8,645.7 L1578.8,639.5 L1584.8,633.3 L1590.8,627.2 L1596.8,621 L1602.8,614.8 L1608.8,608.6 L1614.8,602.4 L1620.8,596.2 L1626.8,590.1 L1632.8,583.9 L1638.8,577.7 L1644.8,571.5 L1650.8,565.3 L1656.8,559.1 L1662.8,552.9 L1668.8,546.8 L1674.8,540.6 L1680.8,534.4 L1686.8,528.2 L1692.8,522 L1698.8,515.8 L1704.8,509.7 L1710.8,503.5 L1716.8,497.3 L1722.8,491.1 L1728.8,484.9 L1734.8,478.7 L1740.8,472.6 L1746.8,466.4 L1752.8,460.2 L1758.8,454 L1764.8,447.8 L1770.8,441.6 L1776.8,435.5 L1782.8,429.3 L1788.8,423.1 L1794.8,416.9 L1800.8,410.7 L1806.7,404.5 L1812.7,398.4 L1818.7,392.2 L1824.7,386 L1830.7,379.8 L1836.7,373.6 L1842.7,367.4 L1848.7,361.3 L1854.7,355.1M1350.8,883.1 L1356.8,876.9 L1362.8,870.7 L1368.8,864.5 L1374.8,858.3 L1380.8,852.1 L1386.8,845.9 L1392.8,839.8 L1398.8,833.6 L1404.8,827.4 L1410.8,821.2 L1416.8,815 L1422.8,808.8 L1428.8,802.7 L1434.8,796.5 L1440.8,790.3 L1446.8,784.1 L1452.8,777.9 L1458.8,771.7 L1464.8,765.6 L1470.8,759.4 L1476.8,753.2 L1482.8,747 L1488.8,740.8 L1494.8,734.6 L1500.8,728.5 L1506.8,722.3 L1512.8,716.1 L1518.8,709.9 L1524.8,703.7 L1530.8,697.5 L1536.8,691.4 L1542.8,685.2 L1548.8,679 L1554.8,672.8 L1560.8,666.6 L1566.8,660.4 L1572.8,654.3 L1578.8,648.1 L1584.8,641.9 L1590.8,635.7 L1596.8,629.5 L1602.8,623.3 L1608.8,617.1 L1614.8,611 L1620.8,604.8 L1626.8,598.6 L1632.8,592.4 L1638.8,586.2 L1644.8,580 L1650.8,573.9 L1656.8,567.7 L1662.8,561.5 L1668.8,555.3 L1674.8,549.1 L1680.8,542.9 L1686.8,536.8 L1692.8,530.6 L1698.8,524.4 L1704.8,518.2 L1710.8,512 L1716.8,505.8 L1722.8,499.7 L1728.8,493.5 L1734.8,487.3 L1740.8,481.1 L1746.8,474.9 L1752.8,468.7 L1758.8,462.6 L1764.8,456.4 L1770.8,450.2 L1776.8,444 L1782.8,437.8 L1788.8,431.6 L1794.8,425.5 L1800.8,419.3 L1806.7,413.1 L1812.7,406.9 L1818.7,400.7 L1824.7,394.5 L1830.7,388.3 L1836.7,382.2 L1842.7,376 L1848.7,369.8 L1854.7,363.6M1350.8,891.6 L1356.8,885.4 L1362.8,879.2 L1368.8,873 L1374.8,866.9 L1380.8,860.7 L1386.8,854.5 L1392.8,848.3 L1398.8,842.1 L1404.8,835.9 L1410.8,829.8 L1416.8,823.6 L1422.8,817.4 L1428.8,811.2 L1434.8,805 L1440.8,798.8 L1446.8,792.7 L1452.8,786.5 L1458.8,780.3 L1464.8,774.1 L1470.8,767.9 L1476.8,761.7 L1482.8,755.6 L1488.8,749.4 L1494.8,743.2 L1500.8,737 L1506.8,730.8 L1512.8,724.6 L1518.8,718.5 L1524.8,712.3 L1530.8,706.1 L1536.8,699.9 L1542.8,693.7 L1548.8,687.5 L1554.8,681.3 L1560.8,675.2 L1566.8,669 L1572.8,662.8 L1578.8,656.6 L1584.8,650.4 L1590.8,644.2 L1596.8,638.1 L1602.8,631.9 L1608.8,625.7 L1614.8,619.5 L1620.8,613.3 L1626.8,607.1 L1632.8,601 L1638.8,594.8 L1644.8,588.6 L1650.8,582.4 L1656.8,576.2 L1662.8,570 L1668.8,563.9 L1674.8,557.7 L1680.8,551.5 L1686.8,545.3 L1692.8,539.1 L1698.8,532.9 L1704.8,526.8 L1710.8,520.6 L1716.8,514.4 L1722.8,508.2 L1728.8,502 L1734.8,495.8 L1740.8,489.7 L1746.8,483.5 L1752.8,477.3 L1758.8,471.1 L1764.8,464.9 L1770.8,458.7 L1776.8,452.5 L1782.8,446.4 L1788.8,440.2 L1794.8,434 L1800.8,427.8 L1806.7,421.6 L1812.7,415.4 L1818.7,409.3 L1824.7,403.1 L1830.7,396.9 L1836.7,390.7 L1842.7,384.5 L1848.7,378.3 L1854.7,372.2M1350.8,900.1 L1356.8,894 L1362.8,887.8 L1368.8,881.6 L1374.8,875.4 L1380.8,869.2 L1386.8,863 L1392.8,856.9 L1398.8,850.7 L1404.8,844.5 L1410.8,838.3 L1416.8,832.1 L1422.8,825.9 L1428.8,819.8 L1434.8,813.6 L1440.8,807.4 L1446.8,801.2 L1452.8,795 L1458.8,788.8 L1464.8,782.7 L1470.8,776.5 L1476.8,770.3 L1482.8,764.1 L1488.8,757.9 L1494.8,751.7 L1500.8,745.5 L1506.8,739.4 L1512.8,733.2 L1518.8,727 L1524.8,720.8 L1530.8,714.6 L1536.8,708.4 L1542.8,702.3 L1548.8,696.1 L1554.8,689.9 L1560.8,683.7 L1566.8,677.5 L1572.8,671.3 L1578.8,665.2 L1584.8,659 L1590.8,652.8 L1596.8,646.6 L1602.8,640.4 L1608.8,634.2 L1614.8,628.1 L1620.8,621.9 L1626.8,615.7 L1632.8,609.5 L1638.8,603.3 L1644.8,597.1 L1650.8,591 L1656.8,584.8 L1662.8,578.6 L1668.8,572.4 L1674.8,566.2 L1680.8,560 L1686.8,553.9 L1692.8,547.7 L1698.8,541.5 L1704.8,535.3 L1710.8,529.1 L1716.8,522.9 L1722.8,516.7 L1728.8,510.6 L1734.8,504.4 L1740.8,498.2 L1746.8,492 L1752.8,485.8 L1758.8,479.6 L1764.8,473.5 L1770.8,467.3 L1776.8,461.1 L1782.8,454.9 L1788.8,448.7 L1794.8,442.5 L1800.8,436.4 L1806.7,430.2 L1812.7,424 L1818.7,417.8 L1824.7,411.6 L1830.7,405.4 L1836.7,399.3 L1842.7,393.1 L1848.7,386.9 L1854.7,380.7M1350.8,908.7 L1356.8,902.5 L1362.8,896.3 L1368.8,890.1 L1374.8,884 L1380.8,877.8 L1386.8,871.6 L1392.8,865.4 L1398.8,859.2 L1404.8,853 L1410.8,846.9 L1416.8,840.7 L1422.8,834.5 L1428.8,828.3 L1434.8,822.1 L1440.8,815.9 L1446.8,809.7 L1452.8,803.6 L1458.8,797.4 L1464.8,791.2 L1470.8,785 L1476.8,778.8 L1482.8,772.6 L1488.8,766.5 L1494.8,760.3 L1500.8,754.1 L1506.8,747.9 L1512.8,741.7 L1518.8,735.5 L1524.8,729.4 L1530.8,723.2 L1536.8,717 L1542.8,710.8 L1548.8,704.6 L1554.8,698.4 L1560.8,692.3 L1566.8,686.1 L1572.8,679.9 L1578.8,673.7 L1584.8,667.5 L1590.8,661.3 L1596.8,655.2 L1602.8,649 L1608.8,642.8 L1614.8,636.6 L1620.8,630.4 L1626.8,624.2 L1632.8,618.1 L1638.8,611.9 L1644.8,605.7 L1650.8,599.5 L1656.8,593.3 L1662.8,587.1 L1668.8,580.9 L1674.8,574.8 L1680.8,568.6 L1686.8,562.4 L1692.8,556.2 L1698.8,550 L1704.8,543.8 L1710.8,537.7 L1716.8,531.5 L1722.8,525.3 L1728.8,519.1 L1734.8,512.9 L1740.8,506.7 L1746.8,500.6 L1752.8,494.4 L1758.8,488.2 L1764.8,482 L1770.8,475.8 L1776.8,469.6 L1782.8,463.5 L1788.8,457.3 L1794.8,451.1 L1800.8,444.9 L1806.7,438.7 L1812.7,432.5 L1818.7,426.4 L1824.7,420.2 L1830.7,414 L1836.7,407.8 L1842.7,401.6 L1848.7,395.4 L1854.7,389.2M1350.8,917.2 L1356.8,911.1 L1362.8,904.9 L1368.8,898.7 L1374.8,892.5 L1380.8,886.3 L1386.8,880.1 L1392.8,873.9 L1398.8,867.8 L1404.8,861.6 L1410.8,855.4 L1416.8,849.2 L1422.8,843 L1428.8,836.8 L1434.8,830.7 L1440.8,824.5 L1446.8,818.3 L1452.8,812.1 L1458.8,805.9 L1464.8,799.7 L1470.8,793.6 L1476.8,787.4 L1482.8,781.2 L1488.8,775 L1494.8,768.8 L1500.8,762.6 L1506.8,756.5 L1512.8,750.3 L1518.8,744.1 L1524.8,737.9 L1530.8,731.7 L1536.8,725.5 L1542.8,719.4 L1548.8,713.2 L1554.8,707 L1560.8,700.8 L1566.8,694.6 L1572.8,688.4 L1578.8,682.2 L1584.8,676.1 L1590.8,669.9 L1596.8,663.7 L1602.8,657.5 L1608.8,651.3 L1614.8,645.1 L1620.8,639 L1626.8,632.8 L1632.8,626.6 L1638.8,620.4 L1644.8,614.2 L1650.8,608 L1656.8,601.9 L1662.8,595.7 L1668.8,589.5 L1674.8,583.3 L1680.8,577.1 L1686.8,570.9 L1692.8,564.8 L1698.8,558.6 L1704.8,552.4 L1710.8,546.2 L1716.8,540 L1722.8,533.8 L1728.8,527.7 L1734.8,521.5 L1740.8,515.3 L1746.8,509.1 L1752.8,502.9 L1758.8,496.7 L1764.8,490.6 L1770.8,484.4 L1776.8,478.2 L1782.8,472 L1788.8,465.8 L1794.8,459.6 L1800.8,453.4 L1806.7,447.3 L1812.7,441.1 L1818.7,434.9 L1824.7,428.7 L1830.7,422.5 L1836.7,416.3 L1842.7,410.2 L1848.7,404 L1854.7,397.8M1356.8,825.6 L1356.8,919.6M1362.8,819.4 L1362.8,913.4M1368.8,813.2 L1368.8,907.2M1374.8,807 L1374.8,901M1380.8,800.9 L1380.8,894.9M1386.8,794.7 L1386.8,888.7M1392.8,788.5 L1392.8,882.5M1398.8,782.3 L1398.8,876.3M1404.8,776.1 L1404.8,870.1M1410.8,769.9 L1410.8,863.9M1416.8,763.8 L1416.8,857.8M1422.8,757.6 L1422.8,851.6M1428.8,751.4 L1428.8,845.4M1434.8,745.2 L1434.8,839.2M1440.8,739 L1440.8,833M1446.8,732.8 L1446.8,826.8M1452.8,726.7 L1452.8,820.7M1458.8,720.5 L1458.8,814.5M1464.8,714.3 L1464.8,808.3M1470.8,708.1 L1470.8,802.1M1476.8,701.9 L1476.8,795.9M1482.8,695.7 L1482.8,789.7M1488.8,689.6 L1488.8,783.6M1494.8,683.4 L1494.8,777.4M1500.8,677.2 L1500.8,771.2M1506.8,671 L1506.8,765M1512.8,664.8 L1512.8,758.8M1518.8,658.6 L1518.8,752.6M1524.8,652.4 L1524.8,746.4M1530.8,646.3 L1530.8,740.3M1536.8,640.1 L1536.8,734.1M1542.8,633.9 L1542.8,727.9M1548.8,627.7 L1548.8,721.7M1554.8,621.5 L1554.8,715.5M1560.8,615.3 L1560.8,709.3M1566.8,609.2 L1566.8,703.2M1572.8,603 L1572.8,697M1578.8,596.8 L1578.8,690.8M1584.8,590.6 L1584.8,684.6M1590.8,584.4 L1590.8,678.4M1596.8,578.2 L1596.8,672.2M1602.8,572.1 L1602.8,666.1M1608.8,565.9 L1608.8,659.9M1614.8,559.7 L1614.8,653.7M1620.8,553.5 L1620.8,647.5M1626.8,547.3 L1626.8,641.3M1632.8,541.1 L1632.8,635.1M1638.8,535 L1638.8,629M1644.8,528.8 L1644.8,622.8M1650.8,522.6 L1650.8,616.6M1656.8,516.4 L1656.8,610.4M1662.8,510.2 L1662.8,604.2M1668.8,504 L1668.8,598M1674.8,497.9 L1674.8,591.9M1680.8,491.7 L1680.8,585.7M1686.8,485.5 L1686.8,579.5M1692.8,479.3 L1692.8,573.3M1698.8,473.1 L1698.8,567.1M1704.8,466.9 L1704.8,560.9M1710.8,460.8 L1710.8,554.8M1716.8,454.6 L1716.8,548.6M1722.8,448.4 L1722.8,542.4M1728.8,442.2 L1728.8,536.2M1734.8,436 L1734.8,530M1740.8,429.8 L1740.8,523.8M1746.8,423.6 L1746.8,517.6M1752.8,417.5 L1752.8,511.5M1758.8,411.3 L1758.8,505.3M1764.8,405.1 L1764.8,499.1M1770.8,398.9 L1770.8,492.9M1776.8,392.7 L1776.8,486.7M1782.8,386.5 L1782.8,480.5M1788.8,380.4 L1788.8,474.4M1794.8,374.2 L1794.8,468.2M1800.8,368 L1800.8,462M1806.7,361.8 L1806.7,455.8M1812.7,355.6 L1812.7,449.6M1818.7,349.4 L1818.7,443.4M1824.7,343.3 L1824.7,437.3M1830.7,337.1 L1830.7,431.1M1836.7,330.9 L1836.7,424.9M1842.7,324.7 L1842.7,418.7M1848.7,318.5 L1848.7,412.5" fill="none" stroke="#000" stroke-width="1" shape-rendering="crispEdges"/>
<path d="M1356.8,825.6 L1356.8,919.6M1848.7,318.5 L1848.7,412.5M1428.8,751.4 L1428.8,845.4M1434.8,745.2 L1434.8,839.2M1440.8,739 L1440.8,833M1512.8,664.8 L1512.8,758.8M1518.8,658.6 L1518.8,752.6M1524.8,652.4 L1524.8,746.4M1596.8,578.2 L1596.8,672.2M1602.8,572.1 L1602.8,666.1M1608.8,565.9 L1608.8,659.9M1680.8,491.7 L1680.8,585.7M1686.8,485.5 L1686.8,579.5M1692.8,479.3 L1692.8,573.3M1764.8,405.1 L1764.8,499.1M1770.8,398.9 L1770.8,492.9M1776.8,392.7 L1776.8,486.7" fill="none" stroke="#000" stroke-width="2.6"/>
<path d="M1350.8,831.8 L1356.8,825.6 L1362.8,819.4 L1368.8,813.2 L1374.8,807 L1380.8,800.9 L1386.8,794.7 L1392.8,788.5 L1398.8,782.3 L1404.8,776.1 L1410.8,769.9 L1416.8,763.8 L1422.8,757.6 L1428.8,751.4 L1434.8,745.2 L1440.8,739 L1446.8,732.8 L1452.8,726.7 L1458.8,720.5 L1464.8,714.3 L1470.8,708.1 L1476.8,701.9 L1482.8,695.7 L1488.8,689.6 L1494.8,683.4 L1500.8,677.2 L1506.8,671 L1512.8,664.8 L1518.8,658.6 L1524.8,652.4 L1530.8,646.3 L1536.8,640.1 L1542.8,633.9 L1548.8,627.7 L1554.8,621.5 L1560.8,615.3 L1566.8,609.2 L1572.8,603 L1578.8,596.8 L1584.8,590.6 L1590.8,584.4 L1596.8,578.2 L1602.8,572.1 L1608.8,565.9 L1614.8,559.7 L1620.8,553.5 L1626.8,547.3 L1632.8,541.1 L1638.8,535 L1644.8,528.8 L1650.8,522.6 L1656.8,516.4 L1662.8,510.2 L1668.8,504 L1674.8,497.9 L1680.8,491.7 L1686.8,485.5 L1692.8,479.3 L1698.8,473.1 L1704.8,466.9 L1710.8,460.8 L1716.8,454.6 L1722.8,448.4 L1728.8,442.2 L1734.8,436 L1740.8,429.8 L1746.8,423.6 L1752.8,417.5 L1758.8,411.3 L1764.8,405.1 L1770.8,398.9 L1776.8,392.7 L1782.8,386.5 L1788.8,380.4 L1794.8,374.2 L1800.8,368 L1806.7,361.8 L1812.7,355.6 L1818.7,349.4 L1824.7,343.3 L1830.7,337.1 L1836.7,330.9 L1842.7,324.7 L1848.7,318.5 L1854.7,312.3 L1854.7,406.3 L1848.7,412.5 L1842.7,418.7 L1836.7,424.9 L1830.7,431.1 L1824.7,437.3 L1818.7,443.4 L1812.7,449.6 L1806.7,455.8 L1800.8,462 L1794.8,468.2 L1788.8,474.4 L1782.8,480.5 L1776.8,486.7 L1770.8,492.9 L1764.8,499.1 L1758.8,505.3 L1752.8,511.5 L1746.8,517.6 L1740.8,523.8 L1734.8,530 L1728.8,536.2 L1722.8,542.4 L1716.8,548.6 L1710.8,554.8 L1704.8,560.9 L1698.8,567.1 L1692.8,573.3 L1686.8,579.5 L1680.8,585.7 L1674.8,591.9 L1668.8,598 L1662.8,604.2 L1656.8,610.4 L1650.8,616.6 L1644.8,622.8 L1638.8,629 L1632.8,635.1 L1626.8,641.3 L1620.8,647.5 L1614.8,653.7 L1608.8,659.9 L1602.8,666.1 L1596.8,672.2 L1590.8,678.4 L1584.8,684.6 L1578.8,690.8 L1572.8,697 L1566.8,703.2 L1560.8,709.3 L1554.8,715.5 L1548.8,721.7 L1542.8,727.9 L1536.8,734.1 L1530.8,740.3 L1524.8,746.4 L1518.8,752.6 L1512.8,758.8 L1506.8,765 L1500.8,771.2 L1494.8,777.4 L1488.8,783.6 L1482.8,789.7 L1476.8,795.9 L1470.8,802.1 L1464.8,808.3 L1458.8,814.5 L1452.8,820.7 L1446.8,826.8 L1440.8,833 L1434.8,839.2 L1428.8,845.4 L1422.8,851.6 L1416.8,857.8 L1410.8,863.9 L1404.8,870.1 L1398.8,876.3 L1392.8,882.5 L1386.8,888.7 L1380.8,894.9 L1374.8,901 L1368.8,907.2 L1362.8,913.4 L1356.8,919.6 L1350.8,925.8Z" fill="none" stroke="#000" stroke-width="2.6" stroke-linejoin="round"/>
<path d="M1382,819 L1388,812.8 L1394,806.7 L1399.9,800.5 L1405.9,794.4 L1411.9,788.2 L1417.9,782 L1423.8,775.9 L1429.8,769.7 L1435.8,763.6 L1441.8,757.4 L1447.7,751.3 L1453.7,745.1 L1459.7,738.9 L1465.7,732.8 L1471.6,726.6 L1477.6,720.5 L1483.6,714.3 L1489.6,708.1 L1495.5,702 L1501.5,695.8 L1507.5,689.7 L1513.5,683.5 L1519.5,677.4 L1525.4,671.2 L1531.4,665 L1537.4,658.9 L1543.4,652.7 L1549.3,646.6 L1555.3,640.4 L1561.3,634.2 L1567.3,628.1 L1573.2,621.9 L1579.2,615.8 L1585.2,609.6 L1591.2,603.5 L1597.1,597.3 L1603.1,591.1 L1609.1,585 L1615.1,578.8 L1621,572.7 L1627,566.5 L1633,560.4 L1639,554.2 L1645,548 L1650.9,541.9 L1656.9,535.7 L1662.9,529.6 L1668.9,523.4 L1674.8,517.2 L1680.8,511.1 L1686.8,504.9 L1692.8,498.8 L1698.7,492.6 L1704.7,486.5 L1710.7,480.3 L1716.7,474.1 L1722.6,468 L1728.6,461.8 L1734.6,455.7 L1740.6,449.5 L1746.5,443.3 L1752.5,437.2 L1758.5,431 L1764.5,424.9 L1770.5,418.7 L1776.4,412.6 L1782.4,406.4 L1788.4,400.2 L1794.4,394.1 L1800.3,387.9 L1806.3,381.8 L1812.3,375.6 L1818.3,369.4 L1824.2,363.3 L1830.2,357.1 L1836.2,351 L1842.2,344.8 L1848.1,338.7 L1854.1,332.5 L1860.1,326.3 L1866.1,320.2 L1872,314 L1878,307.9 L1884,301.7 L1884,320.7 L1878,326.9 L1872,333 L1866.1,339.2 L1860.1,345.4 L1854.1,351.6 L1848.1,357.7 L1842.2,363.9 L1836.2,370.1 L1830.2,376.2 L1824.2,382.4 L1818.3,388.6 L1812.3,394.7 L1806.3,400.9 L1800.3,407.1 L1794.4,413.3 L1788.4,419.4 L1782.4,425.6 L1776.4,431.8 L1770.5,437.9 L1764.5,444.1 L1758.5,450.3 L1752.5,456.4 L1746.5,462.6 L1740.6,468.8 L1734.6,475 L1728.6,481.1 L1722.6,487.3 L1716.7,493.5 L1710.7,499.6 L1704.7,505.8 L1698.7,512 L1692.8,518.1 L1686.8,524.3 L1680.8,530.5 L1674.8,536.7 L1668.9,542.8 L1662.9,549 L1656.9,555.2 L1650.9,561.3 L1645,567.5 L1639,573.7 L1633,579.9 L1627,586 L1621,592.2 L1615.1,598.4 L1609.1,604.5 L1603.1,610.7 L1597.1,616.9 L1591.2,623 L1585.2,629.2 L1579.2,635.4 L1573.2,641.6 L1567.3,647.7 L1561.3,653.9 L1555.3,660.1 L1549.3,666.2 L1543.4,672.4 L1537.4,678.6 L1531.4,684.7 L1525.4,690.9 L1519.5,697.1 L1513.5,703.3 L1507.5,709.4 L1501.5,715.6 L1495.5,721.8 L1489.6,727.9 L1483.6,734.1 L1477.6,740.3 L1471.6,746.4 L1465.7,752.6 L1459.7,758.8 L1453.7,765 L1447.7,771.1 L1441.8,777.3 L1435.8,783.5 L1429.8,789.6 L1423.8,795.8 L1417.9,802 L1411.9,808.1 L1405.9,814.3 L1399.9,820.5 L1394,826.7 L1388,832.8 L1382,839Z" fill="#808080"/>
<path d="M1382,829 L1388,822.8 L1394,816.7 L1399.9,810.5 L1405.9,804.3 L1411.9,798.2 L1417.9,792 L1423.8,785.8 L1429.8,779.7 L1435.8,773.5 L1441.8,767.4 L1447.7,761.2 L1453.7,755 L1459.7,748.9 L1465.7,742.7 L1471.6,736.5 L1477.6,730.4 L1483.6,724.2 L1489.6,718 L1495.5,711.9 L1501.5,705.7 L1507.5,699.5 L1513.5,693.4 L1519.5,687.2 L1525.4,681.1 L1531.4,674.9 L1537.4,668.7 L1543.4,662.6 L1549.3,656.4 L1555.3,650.2 L1561.3,644.1 L1567.3,637.9 L1573.2,631.7 L1579.2,625.6 L1585.2,619.4 L1591.2,613.2 L1597.1,607.1 L1603.1,600.9 L1609.1,594.8 L1615.1,588.6 L1621,582.4 L1627,576.3 L1633,570.1 L1639,563.9 L1645,557.8 L1650.9,551.6 L1656.9,545.4 L1662.9,539.3 L1668.9,533.1 L1674.8,527 L1680.8,520.8 L1686.8,514.6 L1692.8,508.5 L1698.7,502.3 L1704.7,496.1 L1710.7,490 L1716.7,483.8 L1722.6,477.6 L1728.6,471.5 L1734.6,465.3 L1740.6,459.1 L1746.5,453 L1752.5,446.8 L1758.5,440.7 L1764.5,434.5 L1770.5,428.3 L1776.4,422.2 L1782.4,416 L1788.4,409.8 L1794.4,403.7 L1800.3,397.5 L1806.3,391.3 L1812.3,385.2 L1818.3,379 L1824.2,372.8 L1830.2,366.7 L1836.2,360.5 L1842.2,354.4 L1848.1,348.2 L1854.1,342 L1860.1,335.9 L1866.1,329.7 L1872,323.5 L1878,317.4 L1884,311.2M1388,812.8 L1388,832.8M1394,806.7 L1394,826.7M1399.9,800.5 L1399.9,820.5M1405.9,794.4 L1405.9,814.3M1411.9,788.2 L1411.9,808.1M1417.9,782 L1417.9,802M1423.8,775.9 L1423.8,795.8M1429.8,769.7 L1429.8,789.6M1435.8,763.6 L1435.8,783.5M1441.8,757.4 L1441.8,777.3M1447.7,751.3 L1447.7,771.1M1453.7,745.1 L1453.7,765M1459.7,738.9 L1459.7,758.8M1465.7,732.8 L1465.7,752.6M1471.6,726.6 L1471.6,746.4M1477.6,720.5 L1477.6,740.3M1483.6,714.3 L1483.6,734.1M1489.6,708.1 L1489.6,727.9M1495.5,702 L1495.5,721.8M1501.5,695.8 L1501.5,715.6M1507.5,689.7 L1507.5,709.4M1513.5,683.5 L1513.5,703.3M1519.5,677.4 L1519.5,697.1M1525.4,671.2 L1525.4,690.9M1531.4,665 L1531.4,684.7M1537.4,658.9 L1537.4,678.6M1543.4,652.7 L1543.4,672.4M1549.3,646.6 L1549.3,666.2M1555.3,640.4 L1555.3,660.1M1561.3,634.2 L1561.3,653.9M1567.3,628.1 L1567.3,647.7M1573.2,621.9 L1573.2,641.6M1579.2,615.8 L1579.2,635.4M1585.2,609.6 L1585.2,629.2M1591.2,603.5 L1591.2,623M1597.1,597.3 L1597.1,616.9M1603.1,591.1 L1603.1,610.7M1609.1,585 L1609.1,604.5M1615.1,578.8 L1615.1,598.4M1621,572.7 L1621,592.2M1627,566.5 L1627,586M1633,560.4 L1633,579.9M1639,554.2 L1639,573.7M1645,548 L1645,567.5M1650.9,541.9 L1650.9,561.3M1656.9,535.7 L1656.9,555.2M1662.9,529.6 L1662.9,549M1668.9,523.4 L1668.9,542.8M1674.8,517.2 L1674.8,536.7M1680.8,511.1 L1680.8,530.5M1686.8,504.9 L1686.8,524.3M1692.8,498.8 L1692.8,518.1M1698.7,492.6 L1698.7,512M1704.7,486.5 L1704.7,505.8M1710.7,480.3 L1710.7,499.6M1716.7,474.1 L1716.7,493.5M1722.6,468 L1722.6,487.3M1728.6,461.8 L1728.6,481.1M1734.6,455.7 L1734.6,475M1740.6,449.5 L1740.6,468.8M1746.5,443.3 L1746.5,462.6M1752.5,437.2 L1752.5,456.4M1758.5,431 L1758.5,450.3M1764.5,424.9 L1764.5,444.1M1770.5,418.7 L1770.5,437.9M1776.4,412.6 L1776.4,431.8M1782.4,406.4 L1782.4,425.6M1788.4,400.2 L1788.4,419.4M1794.4,394.1 L1794.4,413.3M1800.3,387.9 L1800.3,407.1M1806.3,381.8 L1806.3,400.9M1812.3,375.6 L1812.3,394.7M1818.3,369.4 L1818.3,388.6M1824.2,363.3 L1824.2,382.4M1830.2,357.1 L1830.2,376.2M1836.2,351 L1836.2,370.1M1842.2,344.8 L1842.2,363.9M1848.1,338.7 L1848.1,357.7M1854.1,332.5 L1854.1,351.6M1860.1,326.3 L1860.1,345.4M1866.1,320.2 L1866.1,339.2M1872,314 L1872,333M1878,307.9 L1878,326.9" fill="none" stroke="#000" stroke-width="1" shape-rendering="crispEdges"/>
<path d="M1388,812.8 L1388,832.8M1878,307.9 L1878,326.9M1459.7,738.9 L1459.7,758.8M1465.7,732.8 L1465.7,752.6M1471.6,726.6 L1471.6,746.4M1543.4,652.7 L1543.4,672.4M1549.3,646.6 L1549.3,666.2M1555.3,640.4 L1555.3,660.1M1627,566.5 L1627,586M1633,560.4 L1633,579.9M1639,554.2 L1639,573.7M1710.7,480.3 L1710.7,499.6M1716.7,474.1 L1716.7,493.5M1722.6,468 L1722.6,487.3M1794.4,394.1 L1794.4,413.3M1800.3,387.9 L1800.3,407.1M1806.3,381.8 L1806.3,400.9" fill="none" stroke="#000" stroke-width="2.6"/>
<path d="M1382,819 L1388,812.8 L1394,806.7 L1399.9,800.5 L1405.9,794.4 L1411.9,788.2 L1417.9,782 L1423.8,775.9 L1429.8,769.7 L1435.8,763.6 L1441.8,757.4 L1447.7,751.3 L1453.7,745.1 L1459.7,738.9 L1465.7,732.8 L1471.6,726.6 L1477.6,720.5 L1483.6,714.3 L1489.6,708.1 L1495.5,702 L1501.5,695.8 L1507.5,689.7 L1513.5,683.5 L1519.5,677.4 L1525.4,671.2 L1531.4,665 L1537.4,658.9 L1543.4,652.7 L1549.3,646.6 L1555.3,640.4 L1561.3,634.2 L1567.3,628.1 L1573.2,621.9 L1579.2,615.8 L1585.2,609.6 L1591.2,603.5 L1597.1,597.3 L1603.1,591.1 L1609.1,585 L1615.1,578.8 L1621,572.7 L1627,566.5 L1633,560.4 L1639,554.2 L1645,548 L1650.9,541.9 L1656.9,535.7 L1662.9,529.6 L1668.9,523.4 L1674.8,517.2 L1680.8,511.1 L1686.8,504.9 L1692.8,498.8 L1698.7,492.6 L1704.7,486.5 L1710.7,480.3 L1716.7,474.1 L1722.6,468 L1728.6,461.8 L1734.6,455.7 L1740.6,449.5 L1746.5,443.3 L1752.5,437.2 L1758.5,431 L1764.5,424.9 L1770.5,418.7 L1776.4,412.6 L1782.4,406.4 L1788.4,400.2 L1794.4,394.1 L1800.3,387.9 L1806.3,381.8 L1812.3,375.6 L1818.3,369.4 L1824.2,363.3 L1830.2,357.1 L1836.2,351 L1842.2,344.8 L1848.1,338.7 L1854.1,332.5 L1860.1,326.3 L1866.1,320.2 L1872,314 L1878,307.9 L1884,301.7 L1884,320.7 L1878,326.9 L1872,333 L1866.1,339.2 L1860.1,345.4 L1854.1,351.6 L1848.1,357.7 L1842.2,363.9 L1836.2,370.1 L1830.2,376.2 L1824.2,382.4 L1818.3,388.6 L1812.3,394.7 L1806.3,400.9 L1800.3,407.1 L1794.4,413.3 L1788.4,419.4 L1782.4,425.6 L1776.4,431.8 L1770.5,437.9 L1764.5,444.1 L1758.5,450.3 L1752.5,456.4 L1746.5,462.6 L1740.6,468.8 L1734.6,475 L1728.6,481.1 L1722.6,487.3 L1716.7,493.5 L1710.7,499.6 L1704.7,505.8 L1698.7,512 L1692.8,518.1 L1686.8,524.3 L1680.8,530.5 L1674.8,536.7 L1668.9,542.8 L1662.9,549 L1656.9,555.2 L1650.9,561.3 L1645,567.5 L1639,573.7 L1633,579.9 L1627,586 L1621,592.2 L1615.1,598.4 L1609.1,604.5 L1603.1,610.7 L1597.1,616.9 L1591.2,623 L1585.2,629.2 L1579.2,635.4 L1573.2,641.6 L1567.3,647.7 L1561.3,653.9 L1555.3,660.1 L1549.3,666.2 L1543.4,672.4 L1537.4,678.6 L1531.4,684.7 L1525.4,690.9 L1519.5,697.1 L1513.5,703.3 L1507.5,709.4 L1501.5,715.6 L1495.5,721.8 L1489.6,727.9 L1483.6,734.1 L1477.6,740.3 L1471.6,746.4 L1465.7,752.6 L1459.7,758.8 L1453.7,765 L1447.7,771.1 L1441.8,777.3 L1435.8,783.5 L1429.8,789.6 L1423.8,795.8 L1417.9,802 L1411.9,808.1 L1405.9,814.3 L1399.9,820.5 L1394,826.7 L1388,832.8 L1382,839Z" fill="none" stroke="#000" stroke-width="2.6" stroke-linejoin="round"/>
<path d="M1300,800 L1306,793.8 L1312.1,787.6 L1318.1,781.4 L1324.1,775.2 L1330.2,769 L1336.2,762.8 L1342.2,756.6 L1348.3,750.4 L1354.3,744.3 L1360.4,738.1 L1366.4,731.9 L1372.4,725.7 L1378.5,719.5 L1384.5,713.3 L1390.5,707.1 L1396.6,700.9 L1402.6,694.7 L1408.6,688.5 L1414.7,682.3 L1420.7,676.1 L1426.8,669.9 L1432.8,663.7 L1438.8,657.5 L1444.9,651.3 L1450.9,645.1 L1456.9,639 L1463,632.8 L1469,626.6 L1475,620.4 L1481.1,614.2 L1487.1,608 L1493.1,601.8 L1499.2,595.6 L1505.2,589.4 L1511.2,583.2 L1517.3,577 L1523.3,570.8 L1529.4,564.6 L1535.4,558.4 L1541.4,552.2 L1547.5,546 L1553.5,539.9 L1559.5,533.7 L1565.6,527.5 L1571.6,521.3 L1577.6,515.1 L1583.7,508.9 L1589.7,502.7 L1595.8,496.5 L1601.8,490.3 L1607.8,484.1 L1613.9,477.9 L1619.9,471.7 L1625.9,465.5 L1632,459.3 L1638,453.1 L1644,446.9 L1650.1,440.7 L1656.1,434.6 L1662.1,428.4 L1668.2,422.2 L1674.2,416 L1680.2,409.8 L1686.3,403.6 L1692.3,397.4 L1698.4,391.2 L1704.4,385 L1710.4,378.8 L1716.5,372.6 L1722.5,366.4 L1728.5,360.2 L1734.6,354 L1740.6,347.8 L1746.6,341.6 L1752.7,335.4 L1758.7,329.3 L1764.8,323.1 L1770.8,316.9 L1776.8,310.7 L1782.9,304.5 L1788.9,298.3 L1794.9,292.1 L1801,285.9 L1807,279.7 L1884,301.7 L1878,307.9 L1872,314 L1866.1,320.2 L1860.1,326.3 L1854.1,332.5 L1848.1,338.7 L1842.2,344.8 L1836.2,351 L1830.2,357.1 L1824.2,363.3 L1818.3,369.4 L1812.3,375.6 L1806.3,381.8 L1800.3,387.9 L1794.4,394.1 L1788.4,400.2 L1782.4,406.4 L1776.4,412.6 L1770.5,418.7 L1764.5,424.9 L1758.5,431 L1752.5,437.2 L1746.5,443.3 L1740.6,449.5 L1734.6,455.7 L1728.6,461.8 L1722.6,468 L1716.7,474.1 L1710.7,480.3 L1704.7,486.5 L1698.7,492.6 L1692.8,498.8 L1686.8,504.9 L1680.8,511.1 L1674.8,517.2 L1668.9,523.4 L1662.9,529.6 L1656.9,535.7 L1650.9,541.9 L1645,548 L1639,554.2 L1633,560.4 L1627,566.5 L1621,572.7 L1615.1,578.8 L1609.1,585 L1603.1,591.1 L1597.1,597.3 L1591.2,603.5 L1585.2,609.6 L1579.2,615.8 L1573.2,621.9 L1567.3,628.1 L1561.3,634.2 L1555.3,640.4 L1549.3,646.6 L1543.4,652.7 L1537.4,658.9 L1531.4,665 L1525.4,671.2 L1519.5,677.4 L1513.5,683.5 L1507.5,689.7 L1501.5,695.8 L1495.5,702 L1489.6,708.1 L1483.6,714.3 L1477.6,720.5 L1471.6,726.6 L1465.7,732.8 L1459.7,738.9 L1453.7,745.1 L1447.7,751.3 L1441.8,757.4 L1435.8,763.6 L1429.8,769.7 L1423.8,775.9 L1417.9,782 L1411.9,788.2 L1405.9,794.4 L1399.9,800.5 L1394,806.7 L1388,812.8 L1382,819Z" fill="#808080"/>
<path d="M1311.7,802.7 L1317.7,796.5 L1323.8,790.3 L1329.8,784.1 L1335.8,778 L1341.9,771.8 L1347.9,765.6 L1353.9,759.4 L1359.9,753.2 L1366,747 L1372,740.8 L1378,734.6 L1384,728.4 L1390.1,722.3 L1396.1,716.1 L1402.1,709.9 L1408.1,703.7 L1414.2,697.5 L1420.2,691.3 L1426.2,685.1 L1432.3,678.9 L1438.3,672.7 L1444.3,666.6 L1450.3,660.4 L1456.4,654.2 L1462.4,648 L1468.4,641.8 L1474.4,635.6 L1480.5,629.4 L1486.5,623.2 L1492.5,617 L1498.6,610.9 L1504.6,604.7 L1510.6,598.5 L1516.6,592.3 L1522.7,586.1 L1528.7,579.9 L1534.7,573.7 L1540.7,567.5 L1546.8,561.3 L1552.8,555.2 L1558.8,549 L1564.9,542.8 L1570.9,536.6 L1576.9,530.4 L1582.9,524.2 L1589,518 L1595,511.8 L1601,505.6 L1607,499.5 L1613.1,493.3 L1619.1,487.1 L1625.1,480.9 L1631.2,474.7 L1637.2,468.5 L1643.2,462.3 L1649.2,456.1 L1655.3,449.9 L1661.3,443.8 L1667.3,437.6 L1673.3,431.4 L1679.4,425.2 L1685.4,419 L1691.4,412.8 L1697.5,406.6 L1703.5,400.4 L1709.5,394.2 L1715.5,388.1 L1721.6,381.9 L1727.6,375.7 L1733.6,369.5 L1739.6,363.3 L1745.7,357.1 L1751.7,350.9 L1757.7,344.7 L1763.8,338.5 L1769.8,332.4 L1775.8,326.2 L1781.8,320 L1787.9,313.8 L1793.9,307.6 L1799.9,301.4 L1805.9,295.2 L1812,289 L1818,282.8M1323.4,805.4 L1329.4,799.2 L1335.5,793.1 L1341.5,786.9 L1347.5,780.7 L1353.5,774.5 L1359.5,768.3 L1365.6,762.1 L1371.6,756 L1377.6,749.8 L1383.6,743.6 L1389.6,737.4 L1395.7,731.2 L1401.7,725 L1407.7,718.9 L1413.7,712.7 L1419.7,706.5 L1425.7,700.3 L1431.8,694.1 L1437.8,687.9 L1443.8,681.8 L1449.8,675.6 L1455.8,669.4 L1461.9,663.2 L1467.9,657 L1473.9,650.8 L1479.9,644.6 L1485.9,638.5 L1492,632.3 L1498,626.1 L1504,619.9 L1510,613.7 L1516,607.5 L1522,601.4 L1528.1,595.2 L1534.1,589 L1540.1,582.8 L1546.1,576.6 L1552.1,570.4 L1558.2,564.3 L1564.2,558.1 L1570.2,551.9 L1576.2,545.7 L1582.2,539.5 L1588.3,533.3 L1594.3,527.2 L1600.3,521 L1606.3,514.8 L1612.3,508.6 L1618.3,502.4 L1624.4,496.2 L1630.4,490.1 L1636.4,483.9 L1642.4,477.7 L1648.4,471.5 L1654.5,465.3 L1660.5,459.1 L1666.5,452.9 L1672.5,446.8 L1678.5,440.6 L1684.6,434.4 L1690.6,428.2 L1696.6,422 L1702.6,415.8 L1708.6,409.7 L1714.6,403.5 L1720.7,397.3 L1726.7,391.1 L1732.7,384.9 L1738.7,378.7 L1744.7,372.6 L1750.8,366.4 L1756.8,360.2 L1762.8,354 L1768.8,347.8 L1774.8,341.6 L1780.9,335.5 L1786.9,329.3 L1792.9,323.1 L1798.9,316.9 L1804.9,310.7 L1810.9,304.5 L1817,298.4 L1823,292.2 L1829,286M1335.1,808.1 L1341.2,802 L1347.2,795.8 L1353.2,789.6 L1359.2,783.4 L1365.2,777.2 L1371.2,771.1 L1377.2,764.9 L1383.2,758.7 L1389.2,752.5 L1395.2,746.4 L1401.3,740.2 L1407.3,734 L1413.3,727.8 L1419.3,721.6 L1425.3,715.5 L1431.3,709.3 L1437.3,703.1 L1443.3,696.9 L1449.3,690.7 L1455.3,684.6 L1461.4,678.4 L1467.4,672.2 L1473.4,666 L1479.4,659.9 L1485.4,653.7 L1491.4,647.5 L1497.4,641.3 L1503.4,635.1 L1509.4,629 L1515.4,622.8 L1521.5,616.6 L1527.5,610.4 L1533.5,604.2 L1539.5,598.1 L1545.5,591.9 L1551.5,585.7 L1557.5,579.5 L1563.5,573.4 L1569.5,567.2 L1575.6,561 L1581.6,554.8 L1587.6,548.6 L1593.6,542.5 L1599.6,536.3 L1605.6,530.1 L1611.6,523.9 L1617.6,517.7 L1623.6,511.6 L1629.6,505.4 L1635.7,499.2 L1641.7,493 L1647.7,486.8 L1653.7,480.7 L1659.7,474.5 L1665.7,468.3 L1671.7,462.1 L1677.7,456 L1683.7,449.8 L1689.7,443.6 L1695.8,437.4 L1701.8,431.2 L1707.8,425.1 L1713.8,418.9 L1719.8,412.7 L1725.8,406.5 L1731.8,400.3 L1737.8,394.2 L1743.8,388 L1749.8,381.8 L1755.9,375.6 L1761.9,369.5 L1767.9,363.3 L1773.9,357.1 L1779.9,350.9 L1785.9,344.7 L1791.9,338.6 L1797.9,332.4 L1803.9,326.2 L1809.9,320 L1816,313.8 L1822,307.7 L1828,301.5 L1834,295.3 L1840,289.1M1346.9,810.9 L1352.9,804.7 L1358.9,798.5 L1364.9,792.3 L1370.9,786.2 L1376.9,780 L1382.9,773.8 L1388.9,767.6 L1394.9,761.5 L1400.9,755.3 L1406.9,749.1 L1412.9,742.9 L1418.9,736.8 L1424.9,730.6 L1430.9,724.4 L1436.9,718.3 L1442.9,712.1 L1448.9,705.9 L1454.9,699.7 L1460.9,693.6 L1466.9,687.4 L1472.9,681.2 L1478.9,675 L1484.9,668.9 L1490.9,662.7 L1496.9,656.5 L1502.9,650.3 L1508.9,644.2 L1514.9,638 L1520.9,631.8 L1526.9,625.6 L1532.9,619.5 L1538.9,613.3 L1544.9,607.1 L1550.9,601 L1556.9,594.8 L1562.9,588.6 L1568.9,582.4 L1574.9,576.3 L1580.9,570.1 L1586.9,563.9 L1592.9,557.7 L1598.9,551.6 L1604.9,545.4 L1610.9,539.2 L1616.9,533 L1622.9,526.9 L1628.9,520.7 L1634.9,514.5 L1640.9,508.3 L1646.9,502.2 L1652.9,496 L1658.9,489.8 L1664.9,483.7 L1670.9,477.5 L1677,471.3 L1683,465.1 L1689,459 L1695,452.8 L1701,446.6 L1707,440.4 L1713,434.3 L1719,428.1 L1725,421.9 L1731,415.7 L1737,409.6 L1743,403.4 L1749,397.2 L1755,391 L1761,384.9 L1767,378.7 L1773,372.5 L1779,366.4 L1785,360.2 L1791,354 L1797,347.8 L1803,341.7 L1809,335.5 L1815,329.3 L1821,323.1 L1827,317 L1833,310.8 L1839,304.6 L1845,298.4 L1851,292.3M1358.6,813.6 L1364.6,807.4 L1370.6,801.2 L1376.6,795.1 L1382.5,788.9 L1388.5,782.7 L1394.5,776.6 L1400.5,770.4 L1406.5,764.2 L1412.5,758.1 L1418.5,751.9 L1424.5,745.7 L1430.5,739.5 L1436.5,733.4 L1442.5,727.2 L1448.5,721 L1454.5,714.9 L1460.5,708.7 L1466.4,702.5 L1472.4,696.4 L1478.4,690.2 L1484.4,684 L1490.4,677.9 L1496.4,671.7 L1502.4,665.5 L1508.4,659.4 L1514.4,653.2 L1520.4,647 L1526.4,640.9 L1532.4,634.7 L1538.4,628.5 L1544.4,622.3 L1550.4,616.2 L1556.3,610 L1562.3,603.8 L1568.3,597.7 L1574.3,591.5 L1580.3,585.3 L1586.3,579.2 L1592.3,573 L1598.3,566.8 L1604.3,560.7 L1610.3,554.5 L1616.3,548.3 L1622.3,542.2 L1628.3,536 L1634.3,529.8 L1640.3,523.7 L1646.2,517.5 L1652.2,511.3 L1658.2,505.1 L1664.2,499 L1670.2,492.8 L1676.2,486.6 L1682.2,480.5 L1688.2,474.3 L1694.2,468.1 L1700.2,462 L1706.2,455.8 L1712.2,449.6 L1718.2,443.5 L1724.2,437.3 L1730.1,431.1 L1736.1,425 L1742.1,418.8 L1748.1,412.6 L1754.1,406.4 L1760.1,400.3 L1766.1,394.1 L1772.1,387.9 L1778.1,381.8 L1784.1,375.6 L1790.1,369.4 L1796.1,363.3 L1802.1,357.1 L1808.1,350.9 L1814.1,344.8 L1820,338.6 L1826,332.4 L1832,326.3 L1838,320.1 L1844,313.9 L1850,307.8 L1856,301.6 L1862,295.4M1370.3,816.3 L1376.3,810.1 L1382.3,804 L1388.2,797.8 L1394.2,791.6 L1400.2,785.5 L1406.2,779.3 L1412.2,773.1 L1418.2,767 L1424.1,760.8 L1430.1,754.7 L1436.1,748.5 L1442.1,742.3 L1448.1,736.2 L1454.1,730 L1460.1,723.8 L1466,717.7 L1472,711.5 L1478,705.3 L1484,699.2 L1490,693 L1496,686.9 L1501.9,680.7 L1507.9,674.5 L1513.9,668.4 L1519.9,662.2 L1525.9,656 L1531.9,649.9 L1537.9,643.7 L1543.8,637.5 L1549.8,631.4 L1555.8,625.2 L1561.8,619.1 L1567.8,612.9 L1573.8,606.7 L1579.8,600.6 L1585.7,594.4 L1591.7,588.2 L1597.7,582.1 L1603.7,575.9 L1609.7,569.7 L1615.7,563.6 L1621.6,557.4 L1627.6,551.3 L1633.6,545.1 L1639.6,538.9 L1645.6,532.8 L1651.6,526.6 L1657.6,520.4 L1663.5,514.3 L1669.5,508.1 L1675.5,502 L1681.5,495.8 L1687.5,489.6 L1693.5,483.5 L1699.4,477.3 L1705.4,471.1 L1711.4,465 L1717.4,458.8 L1723.4,452.6 L1729.4,446.5 L1735.4,440.3 L1741.3,434.2 L1747.3,428 L1753.3,421.8 L1759.3,415.7 L1765.3,409.5 L1771.3,403.3 L1777.2,397.2 L1783.2,391 L1789.2,384.8 L1795.2,378.7 L1801.2,372.5 L1807.2,366.4 L1813.2,360.2 L1819.1,354 L1825.1,347.9 L1831.1,341.7 L1837.1,335.5 L1843.1,329.4 L1849.1,323.2 L1855,317 L1861,310.9 L1867,304.7 L1873,298.6M1306,793.8 L1388,812.8M1312.1,787.6 L1394,806.7M1318.1,781.4 L1399.9,800.5M1324.1,775.2 L1405.9,794.4M1330.2,769 L1411.9,788.2M1336.2,762.8 L1417.9,782M1342.2,756.6 L1423.8,775.9M1348.3,750.4 L1429.8,769.7M1354.3,744.3 L1435.8,763.6M1360.4,738.1 L1441.8,757.4M1366.4,731.9 L1447.7,751.3M1372.4,725.7 L1453.7,745.1M1378.5,719.5 L1459.7,738.9M1384.5,713.3 L1465.7,732.8M1390.5,707.1 L1471.6,726.6M1396.6,700.9 L1477.6,720.5M1402.6,694.7 L1483.6,714.3M1408.6,688.5 L1489.6,708.1M1414.7,682.3 L1495.5,702M1420.7,676.1 L1501.5,695.8M1426.8,669.9 L1507.5,689.7M1432.8,663.7 L1513.5,683.5M1438.8,657.5 L1519.5,677.4M1444.9,651.3 L1525.4,671.2M1450.9,645.1 L1531.4,665M1456.9,639 L1537.4,658.9M1463,632.8 L1543.4,652.7M1469,626.6 L1549.3,646.6M1475,620.4 L1555.3,640.4M1481.1,614.2 L1561.3,634.2M1487.1,608 L1567.3,628.1M1493.1,601.8 L1573.2,621.9M1499.2,595.6 L1579.2,615.8M1505.2,589.4 L1585.2,609.6M1511.2,583.2 L1591.2,603.5M1517.3,577 L1597.1,597.3M1523.3,570.8 L1603.1,591.1M1529.4,564.6 L1609.1,585M1535.4,558.4 L1615.1,578.8M1541.4,552.2 L1621,572.7M1547.5,546 L1627,566.5M1553.5,539.9 L1633,560.4M1559.5,533.7 L1639,554.2M1565.6,527.5 L1645,548M1571.6,521.3 L1650.9,541.9M1577.6,515.1 L1656.9,535.7M1583.7,508.9 L1662.9,529.6M1589.7,502.7 L1668.9,523.4M1595.8,496.5 L1674.8,517.2M1601.8,490.3 L1680.8,511.1M1607.8,484.1 L1686.8,504.9M1613.9,477.9 L1692.8,498.8M1619.9,471.7 L1698.7,492.6M1625.9,465.5 L1704.7,486.5M1632,459.3 L1710.7,480.3M1638,453.1 L1716.7,474.1M1644,446.9 L1722.6,468M1650.1,440.7 L1728.6,461.8M1656.1,434.6 L1734.6,455.7M1662.1,428.4 L1740.6,449.5M1668.2,422.2 L1746.5,443.3M1674.2,416 L1752.5,437.2M1680.2,409.8 L1758.5,431M1686.3,403.6 L1764.5,424.9M1692.3,397.4 L1770.5,418.7M1698.4,391.2 L1776.4,412.6M1704.4,385 L1782.4,406.4M1710.4,378.8 L1788.4,400.2M1716.5,372.6 L1794.4,394.1M1722.5,366.4 L1800.3,387.9M1728.5,360.2 L1806.3,381.8M1734.6,354 L1812.3,375.6M1740.6,347.8 L1818.3,369.4M1746.6,341.6 L1824.2,363.3M1752.7,335.4 L1830.2,357.1M1758.7,329.3 L1836.2,351M1764.8,323.1 L1842.2,344.8M1770.8,316.9 L1848.1,338.7M1776.8,310.7 L1854.1,332.5M1782.9,304.5 L1860.1,326.3M1788.9,298.3 L1866.1,320.2M1794.9,292.1 L1872,314M1801,285.9 L1878,307.9" fill="none" stroke="#000" stroke-width="1" shape-rendering="crispEdges"/>
<path d="M1306,793.8 L1388,812.8M1801,285.9 L1878,307.9M1378.5,719.5 L1459.7,738.9M1384.5,713.3 L1465.7,732.8M1390.5,707.1 L1471.6,726.6M1463,632.8 L1543.4,652.7M1469,626.6 L1549.3,646.6M1475,620.4 L1555.3,640.4M1547.5,546 L1627,566.5M1553.5,539.9 L1633,560.4M1559.5,533.7 L1639,554.2M1632,459.3 L1710.7,480.3M1638,453.1 L1716.7,474.1M1644,446.9 L1722.6,468M1716.5,372.6 L1794.4,394.1M1722.5,366.4 L1800.3,387.9M1728.5,360.2 L1806.3,381.8" fill="none" stroke="#000" stroke-width="2.6"/>
<path d="M1300,800 L1306,793.8 L1312.1,787.6 L1318.1,781.4 L1324.1,775.2 L1330.2,769 L1336.2,762.8 L1342.2,756.6 L1348.3,750.4 L1354.3,744.3 L1360.4,738.1 L1366.4,731.9 L1372.4,725.7 L1378.5,719.5 L1384.5,713.3 L1390.5,707.1 L1396.6,700.9 L1402.6,694.7 L1408.6,688.5 L1414.7,682.3 L1420.7,676.1 L1426.8,669.9 L1432.8,663.7 L1438.8,657.5 L1444.9,651.3 L1450.9,645.1 L1456.9,639 L1463,632.8 L1469,626.6 L1475,620.4 L1481.1,614.2 L1487.1,608 L1493.1,601.8 L1499.2,595.6 L1505.2,589.4 L1511.2,583.2 L1517.3,577 L1523.3,570.8 L1529.4,564.6 L1535.4,558.4 L1541.4,552.2 L1547.5,546 L1553.5,539.9 L1559.5,533.7 L1565.6,527.5 L1571.6,521.3 L1577.6,515.1 L1583.7,508.9 L1589.7,502.7 L1595.8,496.5 L1601.8,490.3 L1607.8,484.1 L1613.9,477.9 L1619.9,471.7 L1625.9,465.5 L1632,459.3 L1638,453.1 L1644,446.9 L1650.1,440.7 L1656.1,434.6 L1662.1,428.4 L1668.2,422.2 L1674.2,416 L1680.2,409.8 L1686.3,403.6 L1692.3,397.4 L1698.4,391.2 L1704.4,385 L1710.4,378.8 L1716.5,372.6 L1722.5,366.4 L1728.5,360.2 L1734.6,354 L1740.6,347.8 L1746.6,341.6 L1752.7,335.4 L1758.7,329.3 L1764.8,323.1 L1770.8,316.9 L1776.8,310.7 L1782.9,304.5 L1788.9,298.3 L1794.9,292.1 L1801,285.9 L1807,279.7 L1884,301.7 L1878,307.9 L1872,314 L1866.1,320.2 L1860.1,326.3 L1854.1,332.5 L1848.1,338.7 L1842.2,344.8 L1836.2,351 L1830.2,357.1 L1824.2,363.3 L1818.3,369.4 L1812.3,375.6 L1806.3,381.8 L1800.3,387.9 L1794.4,394.1 L1788.4,400.2 L1782.4,406.4 L1776.4,412.6 L1770.5,418.7 L1764.5,424.9 L1758.5,431 L1752.5,437.2 L1746.5,443.3 L1740.6,449.5 L1734.6,455.7 L1728.6,461.8 L1722.6,468 L1716.7,474.1 L1710.7,480.3 L1704.7,486.5 L1698.7,492.6 L1692.8,498.8 L1686.8,504.9 L1680.8,511.1 L1674.8,517.2 L1668.9,523.4 L1662.9,529.6 L1656.9,535.7 L1650.9,541.9 L1645,548 L1639,554.2 L1633,560.4 L1627,566.5 L1621,572.7 L1615.1,578.8 L1609.1,585 L1603.1,591.1 L1597.1,597.3 L1591.2,603.5 L1585.2,609.6 L1579.2,615.8 L1573.2,621.9 L1567.3,628.1 L1561.3,634.2 L1555.3,640.4 L1549.3,646.6 L1543.4,652.7 L1537.4,658.9 L1531.4,665 L1525.4,671.2 L1519.5,677.4 L1513.5,683.5 L1507.5,689.7 L1501.5,695.8 L1495.5,702 L1489.6,708.1 L1483.6,714.3 L1477.6,720.5 L1471.6,726.6 L1465.7,732.8 L1459.7,738.9 L1453.7,745.1 L1447.7,751.3 L1441.8,757.4 L1435.8,763.6 L1429.8,769.7 L1423.8,775.9 L1417.9,782 L1411.9,788.2 L1405.9,794.4 L1399.9,800.5 L1394,806.7 L1388,812.8 L1382,819Z" fill="none" stroke="#000" stroke-width="2.6" stroke-linejoin="round"/>
<path d="M1327.1,826.3 L1327.1,834.8 L1327.1,843.4 L1327.1,851.9 L1327.1,860.5 L1327.1,869 L1327.1,877.5 L1327.1,886.1 L1327.1,894.6 L1327.1,903.2 L1327.1,911.7 L1327.1,920.3 L1350.8,925.8 L1350.8,917.2 L1350.8,908.7 L1350.8,900.1 L1350.8,891.6 L1350.8,883.1 L1350.8,874.5 L1350.8,866 L1350.8,857.4 L1350.8,848.9 L1350.8,840.3 L1350.8,831.8Z" fill="#808080"/>
<path d="M1338.9,829 L1338.9,837.6 L1338.9,846.1 L1338.9,854.7 L1338.9,863.2 L1338.9,871.8 L1338.9,880.3 L1338.9,888.8 L1338.9,897.4 L1338.9,905.9 L1338.9,914.5 L1338.9,923M1327.1,834.8 L1350.8,840.3M1327.1,843.4 L1350.8,848.9M1327.1,851.9 L1350.8,857.4M1327.1,860.5 L1350.8,866M1327.1,869 L1350.8,874.5M1327.1,877.5 L1350.8,883.1M1327.1,886.1 L1350.8,891.6M1327.1,894.6 L1350.8,900.1M1327.1,903.2 L1350.8,908.7M1327.1,911.7 L1350.8,917.2" fill="none" stroke="#000" stroke-width="1" shape-rendering="crispEdges"/>
<path d="M1327.1,826.3 L1327.1,834.8 L1327.1,843.4 L1327.1,851.9 L1327.1,860.5 L1327.1,869 L1327.1,877.5 L1327.1,886.1 L1327.1,894.6 L1327.1,903.2 L1327.1,911.7 L1327.1,920.3 L1350.8,925.8 L1350.8,917.2 L1350.8,908.7 L1350.8,900.1 L1350.8,891.6 L1350.8,883.1 L1350.8,874.5 L1350.8,866 L1350.8,857.4 L1350.8,848.9 L1350.8,840.3 L1350.8,831.8Z" fill="none" stroke="#000" stroke-width="2.6" stroke-linejoin="round"/>
<path d="M1300,800 L1300,810 L1300,820 L1382,839 L1382,829 L1382,819Z" fill="#808080"/>
<path d="M1312.1,802.8 L1312.1,812.8 L1312.1,822.8M1327.1,806.3 L1327.1,816.3 L1327.1,826.3M1339,809 L1339,819 L1339,829M1350.8,811.8 L1350.8,821.8 L1350.8,831.8M1364.8,815 L1364.8,825 L1364.8,835M1300,810 L1382,829" fill="none" stroke="#000" stroke-width="1" shape-rendering="crispEdges"/>
<path d="M1300,800 L1300,810 L1300,820 L1382,839 L1382,829 L1382,819Z" fill="none" stroke="#000" stroke-width="2.6" stroke-linejoin="round"/><g transform="translate(980,0)" font-family="Liberation Sans" font-weight="bold" font-size="16.5"><text x="16.5" y="966" fill="#0000ff" textLength="11" lengthAdjust="spacingAndGlyphs">Y</text><text x="38.5" y="951" fill="#ff0000" textLength="9.5" lengthAdjust="spacingAndGlyphs">Z</text><text x="51" y="959" fill="#008000" textLength="11" lengthAdjust="spacingAndGlyphs">X</text><path d="M45.4 973.3L45 957.5M41.5 961.5L45 957.5 48.5 961.5" fill="none" stroke="#ff0000" stroke-width="1.1"/><path d="M45.4 973.3L28.5 968.5M31.5 965.8L28.5 968.5 31.5 972" fill="none" stroke="#0000ff" stroke-width="1.1"/><path d="M45.4 973.3L53.5 963.5M48.5 965L53.5 963.3 53.5 969" fill="none" stroke="#008000" stroke-width="1" stroke-dasharray="2 1"/></g>
</g>
</svg>
<div class="a" style="left:0;top:1007px;width:1920px;height:49px;background:linear-gradient(#d3d6db,#c3c7cd 35%,#aeb3ba 75%,#9ea3ab)"></div>
<div class="a" style="left:0;top:1055px;width:1920px;height:3px;background:#3c3c3c"></div>
<div class="a" style="left:0;top:1057px;width:782px;height:7px;background:#3f434b"></div>
<div class="a" style="left:0;top:1064px;width:782px;height:16px;background:#333"></div>
<div class="a" style="left:782px;top:1057px;width:1138px;height:23px;background:linear-gradient(#b4b9c0,#a5aab2);border-left:2px solid #222"></div>
<svg class="a" style="left:0;top:1000px;pointer-events:none" width="1920" height="80" viewBox="0 1000 1920 80">
<defs><radialGradient id="mg" cx="0.45" cy="0.35" r="0.7"><stop offset="0" stop-color="#ffffff"/><stop offset="0.7" stop-color="#dfe8f2"/><stop offset="1" stop-color="#b8c8dc"/></radialGradient><linearGradient id="eg" x1="0" y1="0" x2="0" y2="1"><stop offset="0" stop-color="#a9aeb5"/><stop offset="1" stop-color="#585e66"/></linearGradient><linearGradient id="ob" x1="0" y1="0" x2="0" y2="1"><stop offset="0" stop-color="#fdd9a8"/><stop offset="0.25" stop-color="#fbb868"/><stop offset="0.5" stop-color="#f9b050"/><stop offset="1" stop-color="#fde8a0"/></linearGradient><linearGradient id="sb" x1="0" y1="0" x2="0" y2="1"><stop offset="0" stop-color="#eef2f4"/><stop offset="1" stop-color="#d6dde2"/></linearGradient><linearGradient id="so" x1="0" y1="0" x2="0" y2="1"><stop offset="0" stop-color="#fbd39a"/><stop offset="0.5" stop-color="#f9b75c"/><stop offset="1" stop-color="#fde4a4"/></linearGradient></defs>
<path d="M5 1016V1046" stroke="#111" stroke-width="2" stroke-dasharray="2 1.75"/><path d="M6 1017V1047" stroke="#fff" stroke-width="1" stroke-dasharray="2 1.75" opacity="0.8"/>
<path d="M24 1021l10 2 6-3 0 8 6 5-6 2-4 7-4-6-10-1 5-6z" fill="none" stroke="#d08888" stroke-width="1.6" stroke-dasharray="2.5 2"/>
<circle cx="77.5" cy="1032" r="14.5" fill="#9aa0a8" opacity="0.6"/><circle cx="77.5" cy="1032" r="13.5" fill="url(#mg)" stroke="#3a78c0" stroke-width="1"/><circle cx="88.5" cy="1043" r="2" fill="#e8eaec" stroke="#a0a4a8" stroke-width="0.5"/>
<path d="M77.5 1021v22M66 1032h23" stroke="#1a3a5a" stroke-width="2.2"/>
<circle cx="77.5" cy="1032" r="4.5" fill="#90c050" stroke="#507028" stroke-width="0.8"/>
<path d="M105 1028.5h10v1.5l-3.5 4h-3l-3.5-4z" fill="#4a4a4a"/>
<path d="M130 1021v22M141.5 1021v22M153.5 1021v22M130 1021h24M130 1034h24" stroke="#3a5a8a" stroke-width="1.8"/><path d="M141.5 1021h12M141.5 1034h12M141.5 1021v13M153.5 1021v13" stroke="#e02020" stroke-width="2"/>
<circle cx="130" cy="1021" r="2" fill="#90c050" stroke="#507028" stroke-width="0.8"/>
<circle cx="130" cy="1034" r="2" fill="#90c050" stroke="#507028" stroke-width="0.8"/>
<circle cx="141.5" cy="1021" r="2.4" fill="#e02020" stroke="#507028" stroke-width="0.8"/>
<circle cx="141.5" cy="1034" r="2.4" fill="#e02020" stroke="#507028" stroke-width="0.8"/>
<circle cx="153.5" cy="1021" r="2.4" fill="#e02020" stroke="#507028" stroke-width="0.8"/>
<circle cx="153.5" cy="1034" r="2.4" fill="#e02020" stroke="#507028" stroke-width="0.8"/>
<circle cx="187.5" cy="1032" r="14.5" fill="#9aa0a8" opacity="0.6"/><circle cx="187.5" cy="1032" r="13.5" fill="url(#mg)" stroke="#3a78c0" stroke-width="1"/><circle cx="198.5" cy="1043" r="2" fill="#e8eaec" stroke="#a0a4a8" stroke-width="0.5"/>
<path d="M177 1031.5h21" stroke="#1a3a5a" stroke-width="2.4"/>
<circle cx="177" cy="1031.5" r="3.2" fill="#90c050" stroke="#507028" stroke-width="0.8"/>
<circle cx="198" cy="1031.5" r="3.2" fill="#90c050" stroke="#507028" stroke-width="0.8"/>
<path d="M215 1028.5h10v1.5l-3.5 4h-3l-3.5-4z" fill="#4a4a4a"/>
<circle cx="251" cy="1032" r="14.5" fill="#9aa0a8" opacity="0.6"/><circle cx="251" cy="1032" r="13.5" fill="url(#mg)" stroke="#3a78c0" stroke-width="1"/><circle cx="262" cy="1043" r="2" fill="#e8eaec" stroke="#a0a4a8" stroke-width="0.5"/>
<path d="M247.5 1021v21M254.5 1021v21" stroke="#1a3a5a" stroke-width="2.8"/>
<circle cx="297" cy="1032" r="14.5" fill="#9aa0a8" opacity="0.6"/><circle cx="297" cy="1032" r="13.5" fill="url(#mg)" stroke="#3a78c0" stroke-width="1"/><circle cx="308" cy="1043" r="2" fill="#e8eaec" stroke="#a0a4a8" stroke-width="0.5"/>
<path d="M286 1028.5h22M286 1035.5h22" stroke="#1a3a5a" stroke-width="2.8"/>
<circle cx="339" cy="1032" r="14.5" fill="#9aa0a8" opacity="0.6"/><circle cx="339" cy="1032" r="13.5" fill="url(#mg)" stroke="#3a78c0" stroke-width="1"/><circle cx="350" cy="1043" r="2" fill="#e8eaec" stroke="#a0a4a8" stroke-width="0.5"/>
<path d="M339 1020v8M343 1031.5h9M326 1031.5h8M336 1035l-6 7" stroke="#1a3a5a" stroke-width="2.2"/>
<circle cx="339" cy="1031.5" r="3.5" fill="#90c050" stroke="#507028" stroke-width="0.8"/>
<circle cx="385" cy="1032" r="14.5" fill="#9aa0a8" opacity="0.6"/><circle cx="385" cy="1032" r="13.5" fill="url(#mg)" stroke="#3a78c0" stroke-width="1"/><circle cx="396" cy="1043" r="2" fill="#e8eaec" stroke="#a0a4a8" stroke-width="0.5"/>
<path d="M380 1022v19M389 1022v19M375 1027h20M375 1036h20" stroke="#1a3a5a" stroke-width="2"/>
<path d="M413 1028.5h10v1.5l-3.5 4h-3l-3.5-4z" fill="#4a4a4a"/>
<circle cx="452" cy="1032" r="14.5" fill="#9aa0a8" opacity="0.6"/><circle cx="452" cy="1032" r="13.5" fill="url(#mg)" stroke="#3a78c0" stroke-width="1"/><circle cx="463" cy="1043" r="2" fill="#e8eaec" stroke="#a0a4a8" stroke-width="0.5"/>
<text x="439" y="1038.5" font-family="Liberation Sans" font-size="15" fill="#2a2a50" textLength="26" lengthAdjust="spacingAndGlyphs">EF</text>
<path d="M479 1028.5h10v1.5l-3.5 4h-3l-3.5-4z" fill="#4a4a4a"/>
<circle cx="517" cy="1032" r="14.5" fill="#9aa0a8" opacity="0.6"/><circle cx="517" cy="1032" r="13.5" fill="url(#mg)" stroke="#3a78c0" stroke-width="1"/><circle cx="528" cy="1043" r="2" fill="#e8eaec" stroke="#a0a4a8" stroke-width="0.5"/>
<path d="M507 1023l20 18" stroke="#2a4a80" stroke-width="4"/><path d="M513 1028l8 7" stroke="#e03030" stroke-width="3"/><path d="M519 1034l5 4.5" stroke="#f0e030" stroke-width="3"/>
<path d="M545 1028.5h10v1.5l-3.5 4h-3l-3.5-4z" fill="#4a4a4a"/>
<path d="M568 1041.5l8-7h21l-8 7z" fill="#b8d080" stroke="#708840" stroke-width="0.8"/><path d="M568 1041.5v2.5h21l8-7v-2.5l-8 7z" fill="#90a860"/><path d="M568 1040v-16l6-5v16z" fill="#3a4a78"/><path d="M571 1038v-15l8-5v15z" fill="#8aa0d0" stroke="#304070" stroke-width="0.8"/><path d="M573.5 1036v-12l3-2v12z" fill="#c8d4f0"/><rect x="585.5" y="1023" width="3.5" height="15" rx="1.7" fill="#e03060" stroke="#a01040" stroke-width="0.5"/>
<path d="M611 1019h28l-11 13v10l-6 1v-11z" fill="#c8dce4" stroke="#708890" stroke-width="1"/><ellipse cx="625" cy="1019.5" rx="14" ry="2" fill="#e8f2f6" stroke="#708890" stroke-width="0.8"/>
<rect x="658.5" y="1018.5" width="13" height="13" fill="none" stroke="#2050c0" stroke-width="2"/><rect x="658.5" y="1032.5" width="13" height="12" fill="none" stroke="#d01060" stroke-width="2"/><path d="M676 1021c6 3 6 17 0 20" fill="none" stroke="#20a040" stroke-width="1.4"/><path d="M673 1021l5-3.5v6zM673 1040.5l5 3.5v-6z" fill="#20a040"/>
<path d="M702 1026v18M712 1026v18M726 1026v18M702 1026h24M702 1034h24" stroke="#90a0b0" stroke-width="1.4"/><path d="M702 1026h10v8h-10z" fill="none" stroke="#e08080" stroke-width="1.5"/><path d="M708 1022c4-6 12-4 13 2" fill="none" stroke="#e88888" stroke-width="2"/>
<path d="M758 1018v13" stroke="#208040" stroke-width="3.5"/><path d="M754 1031h8v3h-8z" fill="#406040"/><path d="M753 1034l-3 9h14l-3-9z" fill="#e8e0b0" stroke="#a09860" stroke-width="0.6"/><path d="M742 1043h22" stroke="#e0e0e0" stroke-width="1"/>
<path d="M784 1018v26" stroke="#222" stroke-width="1"/><path d="M785 1018v26" stroke="#fff" stroke-width="1"/>
<g><rect x="803.0" y="1018.5" width="13" height="13" fill="none" stroke="#2060c0" stroke-width="2"/><rect x="803.0" y="1032.5" width="13" height="12" fill="none" stroke="#d01060" stroke-width="2"/>
<path d="M800.5 1017l18 14M818.5 1017l-18 14" stroke="#208040" stroke-width="1.3"/>
</g>
<path d="M842 1020v23h22" fill="none" stroke="#909498" stroke-width="1.4"/><path d="M840 1024l2-5 2 5zM860 1041l5 2-5 2z" fill="#909498"/>
<g opacity="0.55"><rect x="850.5" y="1018.5" width="13" height="13" fill="none" stroke="#2060c0" stroke-width="2"/><rect x="850.5" y="1032.5" width="13" height="12" fill="none" stroke="#d01060" stroke-width="2"/>
<path d="M848 1017l18 14M866 1017l-18 14" stroke="#208040" stroke-width="1.3"/>
</g>
<g><rect x="891.5" y="1018.5" width="13" height="13" fill="none" stroke="#2060c0" stroke-width="2"/><rect x="891.5" y="1032.5" width="13" height="12" fill="none" stroke="#d01060" stroke-width="2"/>
<path d="M889 1031l18 14M907 1031l-18 14" stroke="#208040" stroke-width="1.3"/>
</g>
<rect x="934.5" y="1032.5" width="12" height="12" fill="none" stroke="#d01060" stroke-width="2"/><rect x="936.5" y="1018.5" width="12" height="13" fill="none" stroke="#60a0d0" stroke-width="1.5" opacity="0.7"/><path d="M928 1036c0-8 8-14 16-12" fill="none" stroke="#403090" stroke-width="2.5"/><path d="M925 1034l6 3-3 3z" fill="#403090"/>
<g fill="none" stroke="#4e5c7c" stroke-width="2.2"><path d="M975 1046V1023h15.5V1046M983.5 1040V1017h15v23M975 1023l8.5-6M990.5 1023l8-6M975 1033.5h15.5l8-6M983.5 1027.5h15M990.5 1040l8-6"/></g>
<path d="M1018 1029l8-5.5h15l-8 5.5z" fill="#b8d4e0" opacity="0.8"/><path d="M1018 1040l8-5.5h15l-8 5.5z" fill="#b8d4e0" opacity="0.8"/><path d="M1018 1024l8-5.5h15l-8 5.5z" fill="#c8dce6" opacity="0.8"/>
<g fill="none" stroke="#7686a4" stroke-width="1.3"><path d="M1018 1046V1024h15V1046M1026 1040V1018.5h15V1040M1018 1024l8-5.5M1033 1024l8-5.5M1018 1040h15l8-5.5M1033 1046l8-6"/></g>
<path d="M1018 1034.5h15l8-5.5h-15z" fill="#e07070" stroke="#d02020" stroke-width="1.5"/><path d="M1018 1034.5v-6M1033 1034.5v-6" stroke="#d02020" stroke-width="1.5"/>
<path d="M1055.5 1018v26" stroke="#222" stroke-width="1"/><path d="M1056.5 1018v26" stroke="#fff" stroke-width="1"/>
<circle cx="1080" cy="1028" r="8" fill="url(#mg)" stroke="#6080a8" stroke-width="1.5"/><path d="M1086 1034l7 7" stroke="#202020" stroke-width="3.5" stroke-linecap="round"/>
<circle cx="1124" cy="1028" r="8" fill="url(#mg)" stroke="#6080a8" stroke-width="1.5"/><path d="M1130 1034l7 7" stroke="#202020" stroke-width="3.5" stroke-linecap="round"/><path d="M1125 1020l10 10M1135 1020l-10 10" stroke="#e02020" stroke-width="2.6"/>
<path d="M1151.5 1018v26" stroke="#222" stroke-width="1"/><path d="M1152.5 1018v26" stroke="#fff" stroke-width="1"/>
<path d="M1165 1022l6-4 10 13-6 4z" fill="#606468" stroke="#303030" stroke-width="0.8"/><path d="M1174 1035l8-6 5 8-5 7-8-2z" fill="#f0e020"/><path d="M1174 1035l8-6" stroke="#c03020" stroke-width="3"/>
<path d="M1212 1037h22" stroke="#7090b0" stroke-width="1" stroke-dasharray="1.5 1.5"/>
<circle cx="1212" cy="1037" r="2.2" fill="#90c050" stroke="#507028" stroke-width="0.8"/>
<circle cx="1235" cy="1037" r="2.2" fill="#90c050" stroke="#507028" stroke-width="0.8"/>
<text x="1219" y="1034" font-family="Liberation Serif" font-style="italic" font-weight="bold" font-size="15" fill="#303a60">L</text>
<path d="M1251 1028.5h10v1.5l-3.5 4h-3l-3.5-4z" fill="#4a4a4a"/>
<path d="M1279 1042l2-5 15-15 3 3-15 15z" fill="#f8c830" stroke="#604010" stroke-width="0.8"/><path d="M1279 1042l2-5 3 3z" fill="#303030"/><path d="M1294 1024l3 3" stroke="#e08080" stroke-width="2"/>
<path d="M1320 1018l1 26" stroke="#c0c0c0" stroke-width="1.5"/><path d="M1321 1019c6-3 12 3 20-1l-2 16c-6 3-12-2-18 1z" fill="#d82020"/><path d="M1326 1044l2-5 15-15 3 3-15 15z" fill="#f8c830" stroke="#604010" stroke-width="0.8"/>
<rect x="1357" y="1008" width="19" height="47" fill="url(#eg)"/>
<path d="M1361.5 1040h10" stroke="#fff" stroke-width="1.5"/><path d="M1361.5 1045l2 2 1-1 2 2 1-1 2 2 2-2" fill="none" stroke="#fff" stroke-width="1.3"/>
<path d="M1381 1016V1046" stroke="#111" stroke-width="2" stroke-dasharray="2 1.75"/><path d="M1382 1017V1047" stroke="#fff" stroke-width="1" stroke-dasharray="2 1.75" opacity="0.8"/>
<path d="M1395.5 1045v-23" stroke="#e02020" stroke-width="1.8"/><path d="M1392.5 1025l3-7 3 7z" fill="#e02020"/>
<path d="M1395.5 1045h24" stroke="#20a040" stroke-width="1.8"/><path d="M1416.5 1042l7 3-7 3z" fill="#20a040"/>
<path d="M1395.5 1045l18-18" stroke="#303090" stroke-width="1.8"/><path d="M1408.5 1028l7-3-3 7z" fill="#303090"/>
<rect x="1431" y="1010.5" width="42" height="42" rx="2" fill="url(#ob)" stroke="#f0c890"/>
<path d="M1452 1045v-26" stroke="#c02020" stroke-width="1.6"/><path d="M1449 1023l3-7 3 7z" fill="#c02020"/><path d="M1452 1045l-12-6" stroke="#303090" stroke-width="1.6"/><path d="M1440 1035l-3 2 6 2z" fill="#303090"/><path d="M1452 1045l13-7" stroke="#20a040" stroke-width="1.6"/><path d="M1461 1035l6 2-5 3z" fill="#20a040"/>
<text x="1456" y="1026" font-family="Liberation Sans" font-size="9" fill="#333">Z</text><text x="1437" y="1034" font-family="Liberation Sans" font-size="9" fill="#333">Y</text><text x="1461" y="1034" font-family="Liberation Sans" font-size="9" fill="#333">X</text>
<path d="M1485 1045v-24" stroke="#e02020" stroke-width="1.6"/><path d="M1482 1024l3-7 3 7z" fill="#e02020"/><path d="M1485 1045h25" stroke="#20a040" stroke-width="1.6"/><path d="M1507 1042l7 3-7 3z" fill="#20a040"/><circle cx="1485" cy="1045" r="2" fill="#303090"/>
<text x="1489" y="1040" font-family="Liberation Sans" font-size="13" fill="#3a3a3a" textLength="21" lengthAdjust="spacingAndGlyphs">XZ</text>
<path d="M1524 1028.5h10v1.5l-3.5 4h-3l-3.5-4z" fill="#4a4a4a"/>
<path d="M1551 1045v-24" stroke="#303090" stroke-width="1.6"/><path d="M1548 1024l3-7 3 7z" fill="#303090"/><path d="M1551 1045h25" stroke="#20a040" stroke-width="1.6"/><path d="M1573 1042l7 3-7 3z" fill="#20a040"/><circle cx="1551" cy="1045" r="2" fill="#e02020"/>
<text x="1555" y="1040" font-family="Liberation Sans" font-size="13" fill="#3a3a3a" textLength="21" lengthAdjust="spacingAndGlyphs">XY</text>
<path d="M1591 1028.5h10v1.5l-3.5 4h-3l-3.5-4z" fill="#4a4a4a"/>
<path d="M1617 1045v-24" stroke="#e02020" stroke-width="1.6"/><path d="M1614 1024l3-7 3 7z" fill="#e02020"/><path d="M1617 1045h25" stroke="#303090" stroke-width="1.6"/><path d="M1639 1042l7 3-7 3z" fill="#303090"/><circle cx="1617" cy="1045" r="2" fill="#20a040"/>
<text x="1621" y="1040" font-family="Liberation Sans" font-size="13" fill="#3a3a3a" textLength="21" lengthAdjust="spacingAndGlyphs">YZ</text>
<path d="M1656 1028.5h10v1.5l-3.5 4h-3l-3.5-4z" fill="#4a4a4a"/>
<path d="M1680 1044l6-15h24l-6 15z" fill="#d8e8f0"/><path d="M1685 1042l8-11M1693 1042l8-11M1701 1042l6-11M1688 1036h16M1691 1031h15" stroke="#203050" stroke-width="1.8"/>
<path d="M1735 1028a11 11 0 1 0 10-7" fill="none" stroke="#203870" stroke-width="2.6"/><path d="M1730 1027l6-6 2 8z" fill="#203870"/>
<path d="M1767 1028.5h10v1.5l-3.5 4h-3l-3.5-4z" fill="#4a4a4a"/>
<path d="M1791 1045v-24M1791 1045h24M1791 1045l17-17" stroke="#d02020" stroke-width="1.6"/><path d="M1788 1024l3-7 3 7zM1812 1042l7 3-7 3zM1803 1027l7-3-3 7z" fill="#d02020"/>
<rect x="1829" y="1008" width="19" height="47" fill="url(#eg)"/>
<path d="M1833.5 1040h10" stroke="#fff" stroke-width="1.5"/><path d="M1833.5 1045l2 2 1-1 2 2 1-1 2 2 2-2" fill="none" stroke="#fff" stroke-width="1.3"/>
<path d="M1853.5 1016V1046" stroke="#111" stroke-width="2" stroke-dasharray="2 1.75"/><path d="M1854.5 1017V1047" stroke="#fff" stroke-width="1" stroke-dasharray="2 1.75" opacity="0.8"/>
<rect x="1901" y="1008" width="19" height="47" fill="url(#eg)"/>
<path d="M1905.5 1040h10" stroke="#fff" stroke-width="1.5"/><path d="M1905.5 1045l2 2 1-1 2 2 1-1 2 2 2-2" fill="none" stroke="#fff" stroke-width="1.3"/>
<path d="M1905.5 1018l3 2.5-3 2.5zM1910.5 1018l3 2.5-3 2.5z" fill="#fff"/>
<rect x="791" y="1060" width="94" height="18" fill="url(#sb)" stroke="#b8c0c8" stroke-width="0.8"/><rect x="791" y="1060" width="21" height="18" fill="url(#so)"/>
<path d="M795 1066c4-4 10-3 11 2 1 4-2 7-5 7" fill="none" stroke="#208030" stroke-width="2.2"/><path d="M793 1066l4-3 1 5z" fill="#208030"/><path d="M796 1076l2-4 9-8 2 2-9 8z" fill="#f8c830" stroke="#604010" stroke-width="0.5"/>
<path d="M820 1066c4-4 10-3 11 2 1 5-3 8-7 8" fill="none" stroke="#a0a0a0" stroke-width="3.6"/><path d="M817 1068l5-5 1.5 7z" fill="#a0a0a0"/>
<path d="M843 1066c4-4 10-3 11 2 1 5-3 8-7 8" fill="none" stroke="#a0a0a0" stroke-width="3.6"/><path d="M840 1068l5-5 1.5 7z" fill="#a0a0a0"/>
<path d="M867 1066c4-4 10-3 11 2 1 5-3 8-7 8" fill="none" stroke="#a0a0a0" stroke-width="3.6"/><path d="M864 1068l5-5 1.5 7z" fill="#a0a0a0"/>
<rect x="888" y="1060" width="112" height="18" fill="#f0f0f0" stroke="#c0c4c8" stroke-width="0.8"/>
<path d="M989 1067h6l-3 3z" fill="#555"/>
<path d="M1004.5 1059v20" stroke="#222" stroke-width="1.4"/>
<rect x="1006" y="1060" width="47" height="18" fill="url(#sb)" stroke="#b8c0c8" stroke-width="0.8"/><path d="M1029.5 1060v18" stroke="#c8d0d4"/>
<path d="M1011 1074c0-7 4-9 7-9s7 2 7 9z" fill="#a0a0a0"/><path d="M1035 1065h12l-3 9h-6z" fill="#a0a0a0"/>
<rect x="1055" y="1060" width="133" height="18" fill="#f0f0f0" stroke="#c0c4c8" stroke-width="0.8"/><text x="1058" y="1074" font-family="Liberation Sans" font-size="12" fill="#202040">1. 1</text><path d="M1178 1067h6l-3 3z" fill="#333"/>
<rect x="1195" y="1060" width="121" height="18" fill="url(#sb)" stroke="#b8c0c8" stroke-width="0.8"/><rect x="1195" y="1060" width="24" height="18" fill="url(#so)"/>
<path d="M1199 1068l4 4 3-3 4 1 3-3" fill="none" stroke="#303030" stroke-width="1.6"/><path d="M1207 1063v5l-2-2M1207 1068l2-2" stroke="#303090" stroke-width="1.4" fill="none"/>
<path d="M1224 1074c1-6 5-8 9-8 4 0 4 4 2 6-3 2-9 2-11 2z" fill="none" stroke="#a8a8a8" stroke-width="1.8"/><path d="M1254 1062v16M1249 1070h10" stroke="#a8a8a8" stroke-width="1.8"/>
<path d="M1271 1074c0-7 4-9 7-9s7 2 7 9z" fill="#a0a0a0"/><path d="M1294 1065h12l-3 9h-6z" fill="#a0a0a0"/>
<rect x="1316" y="1060" width="54" height="18" fill="#f0f0f0" stroke="#c0c4c8" stroke-width="0.8"/><path d="M1359 1067h6l-3 3z" fill="#555"/>
<rect x="1373" y="1060" width="53" height="18" fill="#f0f0f0" stroke="#c0c4c8" stroke-width="0.8"/><text x="1375" y="1074" font-family="Liberation Sans" font-size="12" fill="#202040" textLength="33" lengthAdjust="spacingAndGlyphs">Средн</text><path d="M1416 1067h6l-3 3z" fill="#333"/>
<rect x="1434" y="1060" width="47" height="18" fill="url(#sb)" stroke="#b8c0c8" stroke-width="0.8"/><rect x="1458" y="1060" width="23" height="18" fill="url(#so)"/>
<path d="M1440 1070l4 5 7-10" fill="none" stroke="#a8a8a8" stroke-width="2.4"/><text x="1460" y="1072" font-family="Liberation Sans" font-size="10" fill="#6a6a30">№</text><path d="M1463 1070l4 5 10-11" fill="none" stroke="#60a030" stroke-width="2.2"/>
<path d="M1484.5 1059v20" stroke="#222" stroke-width="1.4"/>
<rect x="1489" y="1060" width="23" height="18" fill="url(#sb)" stroke="#b8c0c8" stroke-width="0.8"/><path d="M1493 1076l10-10" stroke="#e0a020" stroke-width="2.2"/><path d="M1498 1063l7-2 4 4-3 2-4-3z" fill="#707880"/>
<rect x="1513" y="1060" width="52" height="18" fill="#f0f0f0" stroke="#c0c4c8" stroke-width="0.8"/><text x="1515" y="1074" font-family="Liberation Sans" font-size="12" fill="#202040">1.</text><path d="M1554 1067h6l-3 3z" fill="#333"/>
<path d="M1570 1059v20" stroke="#222" stroke-width="1.6"/>
<path d="M1704.5 1059v20" stroke="#222" stroke-width="1.6"/>
<path d="M1837.5 1059v20" stroke="#222" stroke-width="1.6"/>
<g font-family="Liberation Sans" font-size="12" fill="#111"><text x="1575" y="1074" textLength="62" lengthAdjust="spacingAndGlyphs">Уз.: 0 / 4356</text><text x="1708" y="1074" textLength="62" lengthAdjust="spacingAndGlyphs">Эл.: 0 / 2700</text><text x="1841" y="1074" textLength="54" lengthAdjust="spacingAndGlyphs">Загр.: 1 / 1</text></g>
</svg>
</body></html>
